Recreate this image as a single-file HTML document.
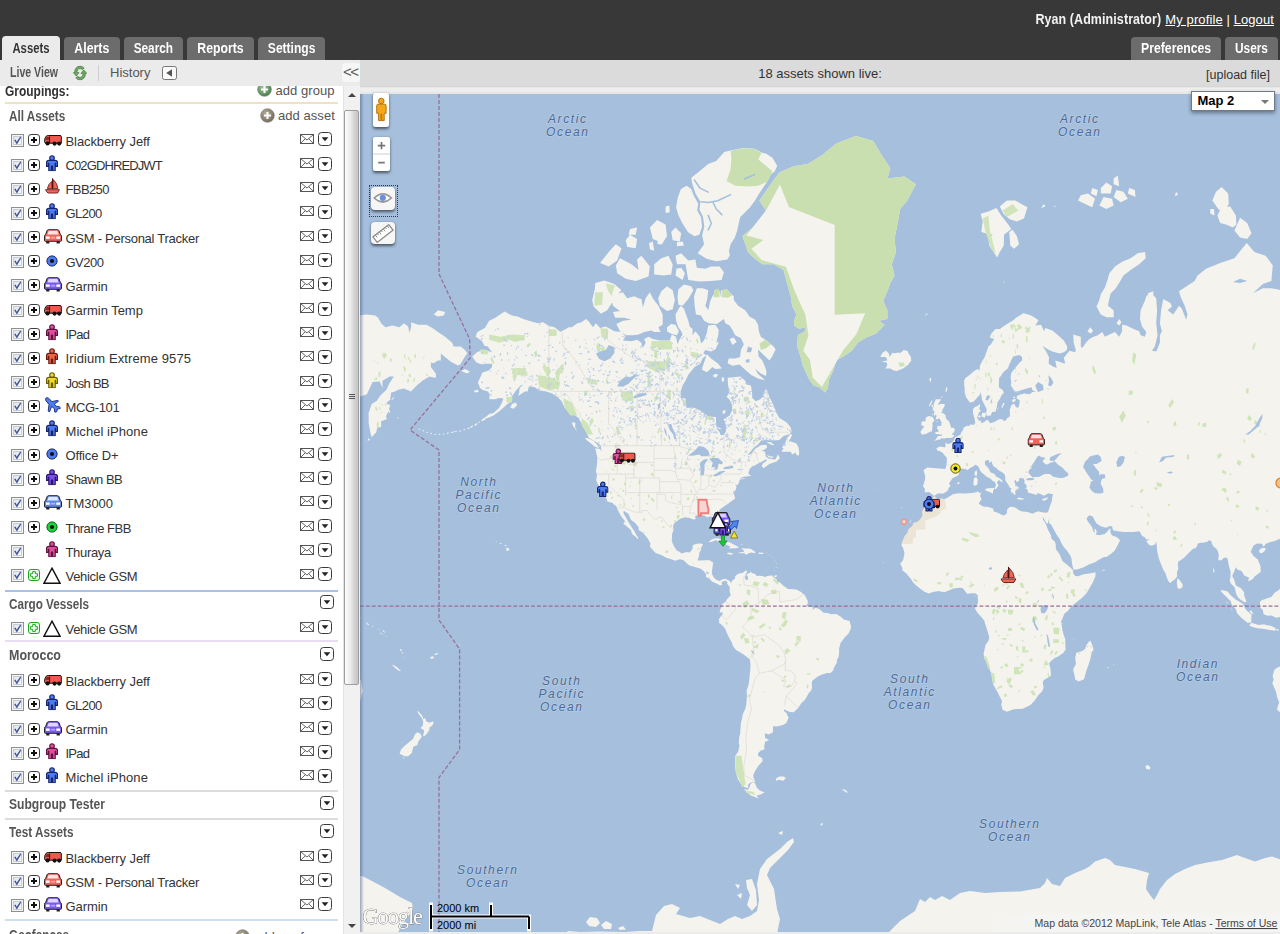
<!DOCTYPE html>
<html lang="en"><head><meta charset="utf-8"><title>Assets - Live View</title>
<style>
*{box-sizing:border-box}
html,body{margin:0;padding:0}
body{width:1280px;height:934px;overflow:hidden;background:#fff;font-family:"Liberation Sans",Arial,sans-serif;font-size:13px;color:#333;position:relative}
a{color:inherit}
#hdr{position:absolute;left:0;top:0;width:1280px;height:60px;background:#383838}
#user{position:absolute;right:6px;top:11px;color:#fff;font-size:13px;white-space:nowrap;letter-spacing:.1px}
#user b{font-weight:bold;color:#f2f2f2;font-size:14px;display:inline-block;transform-origin:100% 50%;transform:scaleX(0.891)}
#user a{color:#fff;text-decoration:underline}
.tab span{display:inline-block;transform-origin:50% 50%}
.tab{position:absolute;top:37px;height:23px;border-radius:4px 4px 0 0;background:#6c6c6c;color:#fff;font-weight:bold;font-size:14px;text-align:center;line-height:22px}
.tab.on{background:#ebebeb;color:#333;top:36px;height:24px;line-height:24px}
#subL{position:absolute;left:0;top:60px;width:360px;height:26px;background:#ebebeb}
#subR{position:absolute;left:360px;top:60px;width:920px;height:26px;background:#dbdbdb}
#strip{position:absolute;left:360px;top:86px;width:920px;height:8px;background:linear-gradient(#cfcfcf,#efefef 25%,#eeeeee 60%,#e4e4e4)}
#subL .lv{position:absolute;left:10px;top:4px;font-weight:bold;color:#555;font-size:14px;display:inline-block;transform-origin:0 50%;transform:scaleX(0.755)}
#subL .hs{position:absolute;left:110px;top:5px;color:#555;font-size:13px}
#subL .sep{position:absolute;left:98px;top:5px;width:1px;height:16px;background:#cfcfcf}
#coll{position:absolute;left:341.5px;top:62.5px;width:18.5px;height:19.5px;background:#f6f6f6;border-radius:3px;color:#555;font-size:15px;line-height:18px;text-align:center;letter-spacing:-1.5px;text-indent:-1px}
#cnt{position:absolute;left:0;top:6px;width:920px;text-align:center;font-size:13px;color:#333}
#upl{position:absolute;right:10px;top:7.5px;font-size:12.5px;color:#333}
#panel{position:absolute;left:0;top:86px;width:343px;height:848px;background:#fff;overflow:hidden}
#sb{position:absolute;left:343px;top:86px;width:17px;height:848px;background:#f1f1f1;border-left:1px solid #e3e3e3}
#sb .thumb{position:absolute;left:0;top:24px;width:15px;height:575px;border:1px solid #9d9d9d;border-radius:2px;background:linear-gradient(90deg,#fdfdfd,#ececec 40%,#d4d4d4 70%,#c4c4c4)}
#sb .grip{position:absolute;left:5px;top:308px;width:6px;height:1px;background:#555;box-shadow:0 2px 0 #555,0 4px 0 #555}
#sb .up,#sb .dn{position:absolute;left:4px;width:0;height:0;border-left:4px solid transparent;border-right:4px solid transparent}
#sb .up{top:7px;border-bottom:4px solid #444}
#sb .dn{top:838px;border-top:4px solid #444}
.row{position:absolute;left:0;width:344px;height:24px}
.row .t{position:absolute;left:65px;top:4.5px;white-space:nowrap;font-size:13px;color:#333}
.row svg{position:absolute;overflow:visible}
.grp{position:absolute;left:9px;font-weight:bold;color:#555;font-size:13px;white-space:nowrap;display:inline-block;transform-origin:0 50%}
.hr{position:absolute;left:5px;width:333px;height:2px}
.add{position:absolute;color:#555;font-size:13px;white-space:nowrap;letter-spacing:.05px}
#map{position:absolute;left:360px;top:94px;width:920px;height:840px;background:#a5bfdd;overflow:hidden}
#map>svg{position:absolute;left:0;top:0}
#ctl{position:absolute;left:360px;top:94px;width:920px;height:0}
.ctl{position:absolute;background:#fff;box-shadow:0 1.5px 3px rgba(0,0,0,.55);overflow:hidden}
.ocean{font-family:"Liberation Sans",Arial,sans-serif;font-style:italic;font-size:12px;fill:#4e6a95;letter-spacing:1.6px;text-anchor:middle;paint-order:stroke;stroke:rgba(215,228,243,.35);stroke-width:1.6px}
</style></head><body>
<div id="hdr">
 <div id="user"><b>Ryan (Administrator)</b> <a>My profile</a> | <a>Logout</a></div>
 <div class="tab on" style="left:2px;width:58px"><span style="transform:scaleX(0.806)">Assets</span></div>
 <div class="tab" style="left:64px;width:56px"><span style="transform:scaleX(0.882)">Alerts</span></div>
 <div class="tab" style="left:124px;width:59px"><span style="transform:scaleX(0.841)">Search</span></div>
 <div class="tab" style="left:187px;width:67px"><span style="transform:scaleX(0.874)">Reports</span></div>
 <div class="tab" style="left:258px;width:67px"><span style="transform:scaleX(0.860)">Settings</span></div>
 <div class="tab" style="left:1131px;width:90px"><span style="transform:scaleX(0.873)">Preferences</span></div>
 <div class="tab" style="left:1225px;width:53px"><span style="transform:scaleX(0.848)">Users</span></div>
</div>
<div id="subL"><span class="lv">Live View</span><span class="sep"></span><span class="hs">History</span>
 <svg style="position:absolute;left:73px;top:5px" width="14" height="16" viewBox="0 0 14 16"><path d="M7 1.2A5.3 5.3 0 0 0 1.8 7.6L0.3 7.6 3.2 11 6 7.6 4.3 7.6A2.9 2.9 0 0 1 7 3.6 2.9 2.9 0 0 1 9.3 4.7L11.2 3.2A5.3 5.3 0 0 0 7 1.2ZM10.8 5 8 8.4 9.7 8.4A2.9 2.9 0 0 1 7 12.4 2.9 2.9 0 0 1 4.7 11.3L2.8 12.8A5.3 5.3 0 0 0 7 14.8 5.3 5.3 0 0 0 12.2 8.4L13.7 8.4Z" fill="#6fa565" stroke="#3f7a3a" stroke-width=".7"/></svg>
 <svg style="position:absolute;left:162px;top:6px" width="15" height="14" viewBox="0 0 15 14"><rect x=".5" y=".5" width="14" height="13" rx="2" fill="#fafafa" stroke="#777"/><path d="M10 3.3V10.7L4.2 7Z" fill="#555"/></svg>
</div>
<div id="coll">&lt;&lt;</div>
<div id="subR"><div id="cnt">18 assets shown live:</div><div id="upl">[upload file]</div></div>
<div id="strip"></div>
<svg width="0" height="0" style="position:absolute"><defs>
<linearGradient id="cbg" x1="0" y1="0" x2="1" y2="1"><stop offset="0" stop-color="#dfe3ea"/><stop offset="1" stop-color="#fbfbfc"/></linearGradient>
<radialGradient id="gG" cx=".4" cy=".35" r=".7"><stop offset="0" stop-color="#9cc79a"/><stop offset="1" stop-color="#4a7a4c"/></radialGradient>
<radialGradient id="gB" cx=".4" cy=".35" r=".7"><stop offset="0" stop-color="#b5ae9a"/><stop offset="1" stop-color="#6f685a"/></radialGradient>
<symbol id="i-cb" viewBox="0 0 13 13"><rect x=".5" y=".5" width="12" height="12" fill="#f4f4f4" stroke="#8e8f8f"/><rect x="2.5" y="2.5" width="8" height="8" fill="url(#cbg)" stroke="#c9cdd4"/><path d="M3.2 6.3 4.6 5.6 5.7 7.7 9.3 2.6 10.3 3.2 5.9 10.4Z" fill="#3f57a0"/></symbol>
<symbol id="i-plus" viewBox="0 0 12 12"><rect x=".5" y=".5" width="11" height="11" rx="2.6" fill="#fff" stroke="#3c3c3c"/><path d="M3 5h2V3h2v2h2v2H7v2H5V7H3Z" fill="#111"/></symbol>
<symbol id="i-gplus" viewBox="0 0 12 12"><rect x=".5" y=".5" width="11" height="11" rx="2.4" fill="#e6ffe6" stroke="#19a519"/><path d="M4.7 2.6h2.6v2.1h2.1v2.6H7.3v2.1H4.7V7.3H2.6V4.7h2.1Z" fill="#fff" stroke="#19a519" stroke-width="1"/></symbol>
<symbol id="i-mail" viewBox="0 0 14 10"><rect x=".5" y=".5" width="13" height="9" fill="#fff" stroke="#555"/><path d="M.8 .8 7 6 13.2 .8M.8 9.2 5.2 4.8M13.2 9.2 8.8 4.8" fill="none" stroke="#555" stroke-width=".9"/></symbol>
<symbol id="i-dd" viewBox="0 0 14 14"><rect x=".5" y=".5" width="13" height="13" rx="3" fill="#fff" stroke="#3a3a3a"/><path d="M3.6 5.3H10.4L7 9.3Z" fill="#222"/></symbol>
<symbol id="i-truck" viewBox="0 0 18 11"><path d="M2.2 1.2Q.6 2.6 .5 6.5L1.2 8.2H17.3V1.6Q17.3 .5 16 .5H4.5Q3 .5 2.2 1.2Z" fill="#f0584e" stroke="#111" stroke-width="1"/><path d="M2.5 2.2 5 1.8V5H1.5Q1.6 3.2 2.5 2.2Z" fill="#8a2a22"/><path d="M5.6 1.5V8" stroke="#111" stroke-width=".9"/><circle cx="3.6" cy="8.4" r="2.1" fill="#111"/><circle cx="10.6" cy="8.6" r="2.1" fill="#111"/><circle cx="15.2" cy="8.6" r="2.1" fill="#111"/></symbol>
<symbol id="i-man" viewBox="0 0 12 16"><path d="M2.9 5.2H9.1Q11.5 5.2 11.5 7.5V11.2H9.7V8.2H9.2V15.6H6.6V11H5.4V15.6H2.8V8.2H2.3V11.2H.5V7.5Q.5 5.2 2.9 5.2Z" stroke-width="1.15" stroke-linejoin="round"/><circle cx="6" cy="2.9" r="2.3" stroke-width="1.15"/></symbol>
<symbol id="i-boat" viewBox="0 0 16 17"><path d="M8 .3V12" stroke="#4a120c" stroke-width="1.1"/><path d="M8.7 1.5Q13.5 6 13.8 11.2H8.7Z" fill="#f0645a" stroke="#5a1a12" stroke-width=".8"/><path d="M7.2 3.5V11.2H2.5Q3.2 7 7.2 3.5Z" fill="#f0645a" stroke="#5a1a12" stroke-width=".8"/><path d="M.6 12.4H15.4L13.4 16H3.2Q1.3 14.6 .6 12.4Z" fill="#f0645a" stroke="#5a1a12" stroke-width=".9"/></symbol>
<symbol id="i-car" viewBox="0 0 18 15"><path d="M2.2 11.6H5.4V14.4H2.2ZM12.6 11.6H15.8V14.4H12.6Z" fill="#222"/><path d="M4.6 .7H13.4Q14.6 .7 15 1.8L16.4 5.6Q17.5 6 17.5 7.2V11.4Q17.5 12.3 16.6 12.3H1.4Q.5 12.3 .5 11.4V7.2Q.5 6 1.6 5.6L3 1.8Q3.4 .7 4.6 .7Z" stroke="#222" stroke-width="1"/><path d="M4.7 1.8H13.3L14.7 5.4H3.3Z" class="w"/><rect x="1.9" y="7.5" width="3.8" height="2.3" fill="#fff"/><rect x="12.3" y="7.5" width="3.8" height="2.3" fill="#fff"/><rect x="6.8" y="7.8" width="4.4" height="1.7" fill="#fff" opacity=".45"/></symbol>
<symbol id="i-dot" viewBox="0 0 12 12"><circle cx="6" cy="6" r="5.1" stroke-width="1"/><circle cx="6" cy="6" r="2.1" fill="#111" stroke="none"/></symbol>
<symbol id="i-plane" viewBox="0 0 16 16"><path d="M1.2 .8Q2.6 .3 3.6 1.3L7 4.6 12.2 3.4Q13.3 3.3 13.6 4.2L9.3 7 11.3 9.3 14.3 9.5Q15.4 10.3 15.2 11.6L12.4 12 11.8 14.6Q10.8 15.5 9.7 15L9.3 11.6 6.6 9.4 4.6 14.8Q3.6 15 3.2 14L4 7.4 .9 3.7Q0 2 1.2 .8Z" fill="#4d7cf0" stroke="#1a2a78" stroke-width=".9" stroke-linejoin="round"/></symbol>
<symbol id="i-tri" viewBox="0 0 18 17"><path d="M9 1.2 17 16.2H1Z" fill="#fff" stroke="#111" stroke-width="1.4" stroke-linejoin="miter"/></symbol>
<symbol id="i-addg" viewBox="0 0 16 16"><circle cx="8" cy="8" r="7.3" fill="url(#gG)" stroke="#577f57" stroke-width=".6"/><path d="M4.2 6.9H6.9V4.2H9.1V6.9H11.8V9.1H9.1V11.8H6.9V9.1H4.2Z" fill="#fff"/></symbol>
<symbol id="i-addb" viewBox="0 0 16 16"><circle cx="8" cy="8" r="7.3" fill="url(#gB)" stroke="#7a7466" stroke-width=".6"/><path d="M4.2 6.9H6.9V4.2H9.1V6.9H11.8V9.1H9.1V11.8H6.9V9.1H4.2Z" fill="#fff"/></symbol>
</defs></svg>
<div id="panel">
<span class="grp" style="left:5px;top:-3px;color:#333;font-size:14px;transform:scaleX(0.855)">Groupings:</span>
<svg style="position:absolute;left:257px;top:-4px" width="15" height="15"><use href="#i-addg"/></svg><span class="add" style="left:275.5px;top:-3px">add group</span>
<div class="hr" style="top:16px;background:#ece3c4;height:2px"></div>
<span class="grp" style="top:22px;font-size:14px;transform:scaleX(0.837)">All Assets</span>
<svg style="position:absolute;left:260px;top:22px" width="15" height="15"><use href="#i-addb"/></svg><span class="add" style="left:278px;top:22px">add asset</span>
<div class="row" style="top:43px"><svg x="0" y="0" style="left:11px;top:5px" width="13" height="13"><use href="#i-cb"/></svg><svg x="0" y="0" style="left:28px;top:5px" width="12" height="12"><use href="#i-plus"/></svg><svg x="0" y="0" style="left:44px;top:6px" width="18" height="11"><use href="#i-truck"/></svg><span class="t" style="left:65.5px;letter-spacing:-0.09px">Blackberry Jeff</span><svg x="0" y="0" style="left:300px;top:4.5px" width="14" height="10"><use href="#i-mail"/></svg><svg x="0" y="0" style="left:318px;top:3px" width="14" height="14"><use href="#i-dd"/></svg></div>
<div class="row" style="top:67.5px"><svg x="0" y="0" style="left:11px;top:5px" width="13" height="13"><use href="#i-cb"/></svg><svg x="0" y="0" style="left:28px;top:5px" width="12" height="12"><use href="#i-plus"/></svg><svg x="0" y="0" style="left:46px;top:1px" width="12" height="16.3" fill="#4d7cf0" stroke="#16246e"><use href="#i-man"/></svg><span class="t" style="left:65.5px;letter-spacing:-0.89px">C02GDHREDJWT</span><svg x="0" y="0" style="left:300px;top:4.5px" width="14" height="10"><use href="#i-mail"/></svg><svg x="0" y="0" style="left:318px;top:3px" width="14" height="14"><use href="#i-dd"/></svg></div>
<div class="row" style="top:91.5px"><svg x="0" y="0" style="left:11px;top:5px" width="13" height="13"><use href="#i-cb"/></svg><svg x="0" y="0" style="left:28px;top:5px" width="12" height="12"><use href="#i-plus"/></svg><svg x="0" y="0" style="left:45px;top:0.5px" width="15" height="16"><use href="#i-boat"/></svg><span class="t" style="left:65.5px;letter-spacing:-0.61px">FBB250</span><svg x="0" y="0" style="left:300px;top:4.5px" width="14" height="10"><use href="#i-mail"/></svg><svg x="0" y="0" style="left:318px;top:3px" width="14" height="14"><use href="#i-dd"/></svg></div>
<div class="row" style="top:115.5px"><svg x="0" y="0" style="left:11px;top:5px" width="13" height="13"><use href="#i-cb"/></svg><svg x="0" y="0" style="left:28px;top:5px" width="12" height="12"><use href="#i-plus"/></svg><svg x="0" y="0" style="left:46px;top:1px" width="12" height="16.3" fill="#4d7cf0" stroke="#16246e"><use href="#i-man"/></svg><span class="t" style="left:65.5px;letter-spacing:-0.55px">GL200</span><svg x="0" y="0" style="left:300px;top:4.5px" width="14" height="10"><use href="#i-mail"/></svg><svg x="0" y="0" style="left:318px;top:3px" width="14" height="14"><use href="#i-dd"/></svg></div>
<div class="row" style="top:140px"><svg x="0" y="0" style="left:11px;top:5px" width="13" height="13"><use href="#i-cb"/></svg><svg x="0" y="0" style="left:28px;top:5px" width="12" height="12"><use href="#i-plus"/></svg><svg style="left:43.5px;top:3px" width="18" height="15" viewBox="0 0 18 15"><path d="M2.2 11.6H5.4V14.4H2.2ZM12.6 11.6H15.8V14.4H12.6Z" fill="#222"/><path d="M4.6 .7H13.4Q14.6 .7 15 1.8L16.4 5.6Q17.5 6 17.5 7.2V11.4Q17.5 12.3 16.6 12.3H1.4Q.5 12.3 .5 11.4V7.2Q.5 6 1.6 5.6L3 1.8Q3.4 .7 4.6 .7Z" fill="#f0645a" stroke="#222"/><path d="M4.7 1.8H13.3L14.7 5.4H3.3Z" fill="#fde4e0"/><rect x="1.9" y="7.5" width="3.8" height="2.3" fill="#fff"/><rect x="12.3" y="7.5" width="3.8" height="2.3" fill="#fff"/><rect x="6.8" y="7.8" width="4.4" height="1.7" fill="#fff" opacity=".45"/></svg><span class="t" style="left:65.5px;letter-spacing:-0.27px">GSM - Personal Tracker</span><svg x="0" y="0" style="left:300px;top:4.5px" width="14" height="10"><use href="#i-mail"/></svg><svg x="0" y="0" style="left:318px;top:3px" width="14" height="14"><use href="#i-dd"/></svg></div>
<div class="row" style="top:164px"><svg x="0" y="0" style="left:11px;top:5px" width="13" height="13"><use href="#i-cb"/></svg><svg x="0" y="0" style="left:28px;top:5px" width="12" height="12"><use href="#i-plus"/></svg><svg x="0" y="0" style="left:46px;top:4.5px" width="12" height="12" fill="#4d7cf0" stroke="#16246e"><use href="#i-dot"/></svg><span class="t" style="left:65.5px;letter-spacing:-0.49px">GV200</span><svg x="0" y="0" style="left:300px;top:4.5px" width="14" height="10"><use href="#i-mail"/></svg><svg x="0" y="0" style="left:318px;top:3px" width="14" height="14"><use href="#i-dd"/></svg></div>
<div class="row" style="top:188px"><svg x="0" y="0" style="left:11px;top:5px" width="13" height="13"><use href="#i-cb"/></svg><svg x="0" y="0" style="left:28px;top:5px" width="12" height="12"><use href="#i-plus"/></svg><svg style="left:43.5px;top:3px" width="18" height="15" viewBox="0 0 18 15"><path d="M2.2 11.6H5.4V14.4H2.2ZM12.6 11.6H15.8V14.4H12.6Z" fill="#222"/><path d="M4.6 .7H13.4Q14.6 .7 15 1.8L16.4 5.6Q17.5 6 17.5 7.2V11.4Q17.5 12.3 16.6 12.3H1.4Q.5 12.3 .5 11.4V7.2Q.5 6 1.6 5.6L3 1.8Q3.4 .7 4.6 .7Z" fill="#7a5af0" stroke="#222"/><path d="M4.7 1.8H13.3L14.7 5.4H3.3Z" fill="#e0d6ff"/><rect x="1.9" y="7.5" width="3.8" height="2.3" fill="#fff"/><rect x="12.3" y="7.5" width="3.8" height="2.3" fill="#fff"/><rect x="6.8" y="7.8" width="4.4" height="1.7" fill="#fff" opacity=".45"/></svg><span class="t" style="left:65.5px;letter-spacing:-0.07px">Garmin</span><svg x="0" y="0" style="left:300px;top:4.5px" width="14" height="10"><use href="#i-mail"/></svg><svg x="0" y="0" style="left:318px;top:3px" width="14" height="14"><use href="#i-dd"/></svg></div>
<div class="row" style="top:212.5px"><svg x="0" y="0" style="left:11px;top:5px" width="13" height="13"><use href="#i-cb"/></svg><svg x="0" y="0" style="left:28px;top:5px" width="12" height="12"><use href="#i-plus"/></svg><svg x="0" y="0" style="left:44px;top:6px" width="18" height="11"><use href="#i-truck"/></svg><span class="t" style="left:65.5px;letter-spacing:-0.04px">Garmin Temp</span><svg x="0" y="0" style="left:300px;top:4.5px" width="14" height="10"><use href="#i-mail"/></svg><svg x="0" y="0" style="left:318px;top:3px" width="14" height="14"><use href="#i-dd"/></svg></div>
<div class="row" style="top:236.5px"><svg x="0" y="0" style="left:11px;top:5px" width="13" height="13"><use href="#i-cb"/></svg><svg x="0" y="0" style="left:28px;top:5px" width="12" height="12"><use href="#i-plus"/></svg><svg x="0" y="0" style="left:46px;top:1px" width="12" height="16.3" fill="#e0509a" stroke="#5e1240"><use href="#i-man"/></svg><span class="t" style="left:65.5px;letter-spacing:-0.74px">IPad</span><svg x="0" y="0" style="left:300px;top:4.5px" width="14" height="10"><use href="#i-mail"/></svg><svg x="0" y="0" style="left:318px;top:3px" width="14" height="14"><use href="#i-dd"/></svg></div>
<div class="row" style="top:260.5px"><svg x="0" y="0" style="left:11px;top:5px" width="13" height="13"><use href="#i-cb"/></svg><svg x="0" y="0" style="left:28px;top:5px" width="12" height="12"><use href="#i-plus"/></svg><svg x="0" y="0" style="left:46px;top:1px" width="12" height="16.3" fill="#f0644a" stroke="#6e1c10"><use href="#i-man"/></svg><span class="t" style="left:65.5px;letter-spacing:0.10px">Iridium Extreme 9575</span><svg x="0" y="0" style="left:300px;top:4.5px" width="14" height="10"><use href="#i-mail"/></svg><svg x="0" y="0" style="left:318px;top:3px" width="14" height="14"><use href="#i-dd"/></svg></div>
<div class="row" style="top:285px"><svg x="0" y="0" style="left:11px;top:5px" width="13" height="13"><use href="#i-cb"/></svg><svg x="0" y="0" style="left:28px;top:5px" width="12" height="12"><use href="#i-plus"/></svg><svg x="0" y="0" style="left:46px;top:1px" width="12" height="16.3" fill="#f0dc28" stroke="#6a5c00"><use href="#i-man"/></svg><span class="t" style="left:65.5px;letter-spacing:-0.73px">Josh BB</span><svg x="0" y="0" style="left:300px;top:4.5px" width="14" height="10"><use href="#i-mail"/></svg><svg x="0" y="0" style="left:318px;top:3px" width="14" height="14"><use href="#i-dd"/></svg></div>
<div class="row" style="top:309px"><svg x="0" y="0" style="left:11px;top:5px" width="13" height="13"><use href="#i-cb"/></svg><svg x="0" y="0" style="left:28px;top:5px" width="12" height="12"><use href="#i-plus"/></svg><svg x="0" y="0" style="left:45px;top:2px" width="16" height="16"><use href="#i-plane"/></svg><span class="t" style="left:65.5px;letter-spacing:-0.36px">MCG-101</span><svg x="0" y="0" style="left:300px;top:4.5px" width="14" height="10"><use href="#i-mail"/></svg><svg x="0" y="0" style="left:318px;top:3px" width="14" height="14"><use href="#i-dd"/></svg></div>
<div class="row" style="top:333px"><svg x="0" y="0" style="left:11px;top:5px" width="13" height="13"><use href="#i-cb"/></svg><svg x="0" y="0" style="left:28px;top:5px" width="12" height="12"><use href="#i-plus"/></svg><svg x="0" y="0" style="left:46px;top:1px" width="12" height="16.3" fill="#4d7cf0" stroke="#16246e"><use href="#i-man"/></svg><span class="t" style="left:65.5px;letter-spacing:0.06px">Michel iPhone</span><svg x="0" y="0" style="left:300px;top:4.5px" width="14" height="10"><use href="#i-mail"/></svg><svg x="0" y="0" style="left:318px;top:3px" width="14" height="14"><use href="#i-dd"/></svg></div>
<div class="row" style="top:357.5px"><svg x="0" y="0" style="left:11px;top:5px" width="13" height="13"><use href="#i-cb"/></svg><svg x="0" y="0" style="left:28px;top:5px" width="12" height="12"><use href="#i-plus"/></svg><svg x="0" y="0" style="left:46px;top:4.5px" width="12" height="12" fill="#4d7cf0" stroke="#16246e"><use href="#i-dot"/></svg><span class="t" style="left:65.5px;letter-spacing:-0.16px">Office D+</span><svg x="0" y="0" style="left:300px;top:4.5px" width="14" height="10"><use href="#i-mail"/></svg><svg x="0" y="0" style="left:318px;top:3px" width="14" height="14"><use href="#i-dd"/></svg></div>
<div class="row" style="top:381.5px"><svg x="0" y="0" style="left:11px;top:5px" width="13" height="13"><use href="#i-cb"/></svg><svg x="0" y="0" style="left:28px;top:5px" width="12" height="12"><use href="#i-plus"/></svg><svg x="0" y="0" style="left:46px;top:1px" width="12" height="16.3" fill="#7a50e8" stroke="#2a1470"><use href="#i-man"/></svg><span class="t" style="left:65.5px;letter-spacing:-0.49px">Shawn BB</span><svg x="0" y="0" style="left:300px;top:4.5px" width="14" height="10"><use href="#i-mail"/></svg><svg x="0" y="0" style="left:318px;top:3px" width="14" height="14"><use href="#i-dd"/></svg></div>
<div class="row" style="top:405.5px"><svg x="0" y="0" style="left:11px;top:5px" width="13" height="13"><use href="#i-cb"/></svg><svg x="0" y="0" style="left:28px;top:5px" width="12" height="12"><use href="#i-plus"/></svg><svg style="left:43.5px;top:3px" width="18" height="15" viewBox="0 0 18 15"><path d="M2.2 11.6H5.4V14.4H2.2ZM12.6 11.6H15.8V14.4H12.6Z" fill="#222"/><path d="M4.6 .7H13.4Q14.6 .7 15 1.8L16.4 5.6Q17.5 6 17.5 7.2V11.4Q17.5 12.3 16.6 12.3H1.4Q.5 12.3 .5 11.4V7.2Q.5 6 1.6 5.6L3 1.8Q3.4 .7 4.6 .7Z" fill="#5f86e6" stroke="#222"/><path d="M4.7 1.8H13.3L14.7 5.4H3.3Z" fill="#dbe8ff"/><rect x="1.9" y="7.5" width="3.8" height="2.3" fill="#fff"/><rect x="12.3" y="7.5" width="3.8" height="2.3" fill="#fff"/><rect x="6.8" y="7.8" width="4.4" height="1.7" fill="#fff" opacity=".45"/></svg><span class="t" style="left:65.5px;letter-spacing:-0.03px">TM3000</span><svg x="0" y="0" style="left:300px;top:4.5px" width="14" height="10"><use href="#i-mail"/></svg><svg x="0" y="0" style="left:318px;top:3px" width="14" height="14"><use href="#i-dd"/></svg></div>
<div class="row" style="top:430px"><svg x="0" y="0" style="left:11px;top:5px" width="13" height="13"><use href="#i-cb"/></svg><svg x="0" y="0" style="left:28px;top:5px" width="12" height="12"><use href="#i-plus"/></svg><svg x="0" y="0" style="left:46px;top:4.5px" width="12" height="12" fill="#16d83a" stroke="#0a5a14"><use href="#i-dot"/></svg><span class="t" style="left:65.5px;letter-spacing:-0.46px">Thrane FBB</span><svg x="0" y="0" style="left:300px;top:4.5px" width="14" height="10"><use href="#i-mail"/></svg><svg x="0" y="0" style="left:318px;top:3px" width="14" height="14"><use href="#i-dd"/></svg></div>
<div class="row" style="top:454px"><svg x="0" y="0" style="left:11px;top:5px" width="13" height="13"><use href="#i-cb"/></svg><svg x="0" y="0" style="left:46px;top:1px" width="12" height="16.3" fill="#e0509a" stroke="#5e1240"><use href="#i-man"/></svg><span class="t" style="left:65.5px;letter-spacing:-0.33px">Thuraya</span><svg x="0" y="0" style="left:300px;top:4.5px" width="14" height="10"><use href="#i-mail"/></svg><svg x="0" y="0" style="left:318px;top:3px" width="14" height="14"><use href="#i-dd"/></svg></div>
<div class="row" style="top:478px"><svg x="0" y="0" style="left:11px;top:5px" width="13" height="13"><use href="#i-cb"/></svg><svg x="0" y="0" style="left:28px;top:5px" width="12" height="12"><use href="#i-gplus"/></svg><svg x="0" y="0" style="left:43px;top:2.5px" width="18" height="17"><use href="#i-tri"/></svg><span class="t" style="left:65.5px;letter-spacing:-0.30px">Vehicle GSM</span><svg x="0" y="0" style="left:300px;top:4.5px" width="14" height="10"><use href="#i-mail"/></svg><svg x="0" y="0" style="left:318px;top:3px" width="14" height="14"><use href="#i-dd"/></svg></div>
<div class="hr" style="top:503.5px;background:#a9c0ea;height:2px"></div>
<div class="row" style="top:506.5px"><span class="grp" style="top:3px;font-size:14px;transform:scaleX(0.836)">Cargo Vessels</span><svg x="0" y="0" style="left:319.5px;top:2.5px" width="14" height="14"><use href="#i-dd"/></svg></div>
<div class="row" style="top:531px"><svg x="0" y="0" style="left:11px;top:5px" width="13" height="13"><use href="#i-cb"/></svg><svg x="0" y="0" style="left:28px;top:5px" width="12" height="12"><use href="#i-gplus"/></svg><svg x="0" y="0" style="left:43px;top:2.5px" width="18" height="17"><use href="#i-tri"/></svg><span class="t" style="left:65.5px;letter-spacing:-0.30px">Vehicle GSM</span><svg x="0" y="0" style="left:300px;top:4.5px" width="14" height="10"><use href="#i-mail"/></svg><svg x="0" y="0" style="left:318px;top:3px" width="14" height="14"><use href="#i-dd"/></svg></div>
<div class="hr" style="top:553.8px;background:#e7def6;height:2px"></div>
<div class="row" style="top:558px"><span class="grp" style="top:3px;font-size:14px;transform:scaleX(0.891)">Morocco</span><svg x="0" y="0" style="left:319.5px;top:2.5px" width="14" height="14"><use href="#i-dd"/></svg></div>
<div class="row" style="top:583px"><svg x="0" y="0" style="left:11px;top:5px" width="13" height="13"><use href="#i-cb"/></svg><svg x="0" y="0" style="left:28px;top:5px" width="12" height="12"><use href="#i-plus"/></svg><svg x="0" y="0" style="left:44px;top:6px" width="18" height="11"><use href="#i-truck"/></svg><span class="t" style="left:65.5px;letter-spacing:-0.09px">Blackberry Jeff</span><svg x="0" y="0" style="left:300px;top:4.5px" width="14" height="10"><use href="#i-mail"/></svg><svg x="0" y="0" style="left:318px;top:3px" width="14" height="14"><use href="#i-dd"/></svg></div>
<div class="row" style="top:607px"><svg x="0" y="0" style="left:11px;top:5px" width="13" height="13"><use href="#i-cb"/></svg><svg x="0" y="0" style="left:28px;top:5px" width="12" height="12"><use href="#i-plus"/></svg><svg x="0" y="0" style="left:46px;top:1px" width="12" height="16.3" fill="#4d7cf0" stroke="#16246e"><use href="#i-man"/></svg><span class="t" style="left:65.5px;letter-spacing:-0.55px">GL200</span><svg x="0" y="0" style="left:300px;top:4.5px" width="14" height="10"><use href="#i-mail"/></svg><svg x="0" y="0" style="left:318px;top:3px" width="14" height="14"><use href="#i-dd"/></svg></div>
<div class="row" style="top:631.5px"><svg x="0" y="0" style="left:11px;top:5px" width="13" height="13"><use href="#i-cb"/></svg><svg x="0" y="0" style="left:28px;top:5px" width="12" height="12"><use href="#i-plus"/></svg><svg style="left:43.5px;top:3px" width="18" height="15" viewBox="0 0 18 15"><path d="M2.2 11.6H5.4V14.4H2.2ZM12.6 11.6H15.8V14.4H12.6Z" fill="#222"/><path d="M4.6 .7H13.4Q14.6 .7 15 1.8L16.4 5.6Q17.5 6 17.5 7.2V11.4Q17.5 12.3 16.6 12.3H1.4Q.5 12.3 .5 11.4V7.2Q.5 6 1.6 5.6L3 1.8Q3.4 .7 4.6 .7Z" fill="#7a5af0" stroke="#222"/><path d="M4.7 1.8H13.3L14.7 5.4H3.3Z" fill="#e0d6ff"/><rect x="1.9" y="7.5" width="3.8" height="2.3" fill="#fff"/><rect x="12.3" y="7.5" width="3.8" height="2.3" fill="#fff"/><rect x="6.8" y="7.8" width="4.4" height="1.7" fill="#fff" opacity=".45"/></svg><span class="t" style="left:65.5px;letter-spacing:-0.07px">Garmin</span><svg x="0" y="0" style="left:300px;top:4.5px" width="14" height="10"><use href="#i-mail"/></svg><svg x="0" y="0" style="left:318px;top:3px" width="14" height="14"><use href="#i-dd"/></svg></div>
<div class="row" style="top:655.5px"><svg x="0" y="0" style="left:11px;top:5px" width="13" height="13"><use href="#i-cb"/></svg><svg x="0" y="0" style="left:28px;top:5px" width="12" height="12"><use href="#i-plus"/></svg><svg x="0" y="0" style="left:46px;top:1px" width="12" height="16.3" fill="#e0509a" stroke="#5e1240"><use href="#i-man"/></svg><span class="t" style="left:65.5px;letter-spacing:-0.74px">IPad</span><svg x="0" y="0" style="left:300px;top:4.5px" width="14" height="10"><use href="#i-mail"/></svg><svg x="0" y="0" style="left:318px;top:3px" width="14" height="14"><use href="#i-dd"/></svg></div>
<div class="row" style="top:679.5px"><svg x="0" y="0" style="left:11px;top:5px" width="13" height="13"><use href="#i-cb"/></svg><svg x="0" y="0" style="left:28px;top:5px" width="12" height="12"><use href="#i-plus"/></svg><svg x="0" y="0" style="left:46px;top:1px" width="12" height="16.3" fill="#4d7cf0" stroke="#16246e"><use href="#i-man"/></svg><span class="t" style="left:65.5px;letter-spacing:0.06px">Michel iPhone</span><svg x="0" y="0" style="left:300px;top:4.5px" width="14" height="10"><use href="#i-mail"/></svg><svg x="0" y="0" style="left:318px;top:3px" width="14" height="14"><use href="#i-dd"/></svg></div>
<div class="hr" style="top:704px;background:#dcdcdc;height:2px"></div>
<div class="row" style="top:707px"><span class="grp" style="top:3px;font-size:14px;transform:scaleX(0.865)">Subgroup Tester</span><svg x="0" y="0" style="left:319.5px;top:2.5px" width="14" height="14"><use href="#i-dd"/></svg></div>
<div class="hr" style="top:731.7px;background:#dcdcdc;height:2px"></div>
<div class="row" style="top:735px"><span class="grp" style="top:3px;font-size:14px;transform:scaleX(0.837)">Test Assets</span><svg x="0" y="0" style="left:319.5px;top:2.5px" width="14" height="14"><use href="#i-dd"/></svg></div>
<div class="row" style="top:760px"><svg x="0" y="0" style="left:11px;top:5px" width="13" height="13"><use href="#i-cb"/></svg><svg x="0" y="0" style="left:28px;top:5px" width="12" height="12"><use href="#i-plus"/></svg><svg x="0" y="0" style="left:44px;top:6px" width="18" height="11"><use href="#i-truck"/></svg><span class="t" style="left:65.5px;letter-spacing:-0.09px">Blackberry Jeff</span><svg x="0" y="0" style="left:300px;top:4.5px" width="14" height="10"><use href="#i-mail"/></svg><svg x="0" y="0" style="left:318px;top:3px" width="14" height="14"><use href="#i-dd"/></svg></div>
<div class="row" style="top:784px"><svg x="0" y="0" style="left:11px;top:5px" width="13" height="13"><use href="#i-cb"/></svg><svg x="0" y="0" style="left:28px;top:5px" width="12" height="12"><use href="#i-plus"/></svg><svg style="left:43.5px;top:3px" width="18" height="15" viewBox="0 0 18 15"><path d="M2.2 11.6H5.4V14.4H2.2ZM12.6 11.6H15.8V14.4H12.6Z" fill="#222"/><path d="M4.6 .7H13.4Q14.6 .7 15 1.8L16.4 5.6Q17.5 6 17.5 7.2V11.4Q17.5 12.3 16.6 12.3H1.4Q.5 12.3 .5 11.4V7.2Q.5 6 1.6 5.6L3 1.8Q3.4 .7 4.6 .7Z" fill="#f0645a" stroke="#222"/><path d="M4.7 1.8H13.3L14.7 5.4H3.3Z" fill="#fde4e0"/><rect x="1.9" y="7.5" width="3.8" height="2.3" fill="#fff"/><rect x="12.3" y="7.5" width="3.8" height="2.3" fill="#fff"/><rect x="6.8" y="7.8" width="4.4" height="1.7" fill="#fff" opacity=".45"/></svg><span class="t" style="left:65.5px;letter-spacing:-0.27px">GSM - Personal Tracker</span><svg x="0" y="0" style="left:300px;top:4.5px" width="14" height="10"><use href="#i-mail"/></svg><svg x="0" y="0" style="left:318px;top:3px" width="14" height="14"><use href="#i-dd"/></svg></div>
<div class="row" style="top:808px"><svg x="0" y="0" style="left:11px;top:5px" width="13" height="13"><use href="#i-cb"/></svg><svg x="0" y="0" style="left:28px;top:5px" width="12" height="12"><use href="#i-plus"/></svg><svg style="left:43.5px;top:3px" width="18" height="15" viewBox="0 0 18 15"><path d="M2.2 11.6H5.4V14.4H2.2ZM12.6 11.6H15.8V14.4H12.6Z" fill="#222"/><path d="M4.6 .7H13.4Q14.6 .7 15 1.8L16.4 5.6Q17.5 6 17.5 7.2V11.4Q17.5 12.3 16.6 12.3H1.4Q.5 12.3 .5 11.4V7.2Q.5 6 1.6 5.6L3 1.8Q3.4 .7 4.6 .7Z" fill="#7a5af0" stroke="#222"/><path d="M4.7 1.8H13.3L14.7 5.4H3.3Z" fill="#e0d6ff"/><rect x="1.9" y="7.5" width="3.8" height="2.3" fill="#fff"/><rect x="12.3" y="7.5" width="3.8" height="2.3" fill="#fff"/><rect x="6.8" y="7.8" width="4.4" height="1.7" fill="#fff" opacity=".45"/></svg><span class="t" style="left:65.5px;letter-spacing:-0.07px">Garmin</span><svg x="0" y="0" style="left:300px;top:4.5px" width="14" height="10"><use href="#i-mail"/></svg><svg x="0" y="0" style="left:318px;top:3px" width="14" height="14"><use href="#i-dd"/></svg></div>
<div class="hr" style="top:833px;background:#cfdff0;height:2px"></div>
<span class="grp" style="top:841px;font-size:14px;transform:scaleX(0.838)">Geofences</span>
<svg style="position:absolute;left:235px;top:843px" width="15" height="15"><use href="#i-addb"/></svg><span class="add" style="left:253px;top:843px">add geofence</span>
</div>
<div id="sb"><div class="up"></div><div class="thumb"></div><div class="grip"></div><div class="dn"></div></div><div id="map"><svg width="920" height="840" viewBox="360 94 920 840">
<path d="M472.1,356.4 477,352.2 484.1,349.4 489.5,351.5 492,352.2 487.8,346.5 484.4,345.8 482.1,341.3 475.5,336.4 477.3,332.1 484.9,328.1 489.2,320.7 494.9,318.1 504.6,311.6 512,315.5 517.6,316.4 523.3,319 529,320.7 537.6,323.2 543.2,322.3 548.9,326.1 554.6,327.3 560.3,331.7 564.6,329.7 568.8,327.3 571.7,327.3 577.4,323.2 581.6,322.3 585.9,319 588.8,321.5 593,327.3 595.9,323.2 600.1,328.1 605.8,326.5 614.4,331.3 621.5,332.1 625.7,336.8 622.9,340.6 631.4,341.3 637.1,339.8 641.4,342.8 642.8,347.9 645.6,342.8 644.2,339.1 648.5,336.8 652.8,339.1 659.9,340.6 665.6,340.6 669.8,340.6 671.8,334.4 676.1,336.8 677.5,344.3 679.8,339.1 682.6,334.4 681.2,331.3 678.4,327.3 676.1,320.7 675.5,314.6 678.4,309.3 680.6,305.7 684,308.4 686,314.6 688.3,320.7 689.7,326.5 692.6,328.9 692.6,335.2 695.4,331.3 699.7,336.8 701.1,343.6 704,340.6 706.8,332.9 708.2,325.6 715.3,324.8 718.7,329.7 718.2,335.2 716.8,340.6 718.7,342.8 715.3,349.4 711.1,351.5 705.4,350.1 703.4,353.6 706.8,355 702.5,358.5 700.3,363.8 694.6,367.1 692,370.3 688.3,374.7 685.5,380.8 682.6,385.6 680.6,391.4 680.6,398.1 685.5,398.6 686.3,407.7 694,407.7 699.7,410.3 708.2,416.4 715.9,416.9 716.2,425.2 716.8,428 719.6,432.2 721,435.5 723.9,434.5 725.9,431.3 725.9,425.2 724.7,421.3 723.3,419.4 729.6,415.4 732.1,410.3 732.1,405.1 729.6,399.7 726.7,397 729.6,391.4 728.1,385.6 727.6,377.8 733.8,377.2 740.4,376.6 745.2,380.8 746.6,384.4 750.9,385.6 752,391.4 752.3,398.1 755.7,401.3 759.4,399.7 762.8,397 765.1,389.7 766.8,389.7 769.4,397 772.2,402.4 774.5,407.7 776.5,412.9 779.3,417.9 783.6,420.4 787,422.8 790.7,427.6 791.6,430.9 789.3,434.5 783.6,435.9 779.3,440 773.6,440.4 768,440 761.1,440.4 758,444.4 753.7,447.8 750.9,451.2 747.5,455 750.9,454.2 755.2,448.7 760.8,445.2 766.5,444.8 767.1,447.8 763.7,450 761.4,450 765.1,452.1 765.7,456.2 768,458.3 770.8,459.1 775.1,459.5 776.5,457.5 777.9,454.2 779.9,458.3 776.5,461.6 769.4,464 763.7,468.3 761.7,466.3 762.8,463.6 766.5,461.1 766.5,459.1 762.3,461.6 759.4,462.8 755.2,465.2 750.9,467.5 748.9,471.4 748.3,473 749.5,474.9 750.9,474.9 750.9,475.7 749.2,476 746.6,476.4 742.6,477 739.8,479.1 745.2,477.9 743.8,479.1 739.8,479.6 739.5,480.2 738.9,483.1 737,485.5 735.2,483.5 736.4,486.4 736.1,489 734.1,492.2 733,490.4 733,492.6 733.8,492.9 735.2,498.6 732.4,500.6 728.4,503.4 725.3,505.4 722.4,507.5 719.6,509.8 718.5,514.2 718.7,517.1 720.7,521.7 722.2,526.8 722,530.3 721.3,531.9 719.3,532.2 717.3,529.1 716.2,526.5 714.8,523.9 714.5,520.1 711.9,516.8 710.2,516.3 707.4,517.5 704,515.2 699.7,515.5 696.8,515.2 695.1,516 695.7,519.1 693.4,519.4 689.7,518.1 685.5,517.3 680.6,518.4 677.5,520.7 674.1,523.3 673,526.8 673.7,529.5 672.1,534.1 671.8,540.9 673.5,545.5 676.6,550.3 679.8,552.1 681.5,553.5 686.6,552.1 689.7,552.4 692,549.7 692.6,547.9 692.9,544.9 696.8,543.8 701.1,543.4 703.1,544.3 701.4,547.3 700.5,550.9 699.4,552.4 699.1,555.4 698,559.3 697.1,560.2 699.7,560.5 705.4,560.2 709.6,560.3 713.3,562.8 712.5,567.2 711.9,571.6 712.2,574.5 713.9,577.4 716.2,579.7 719.6,580.9 722.7,579.3 725.3,578.7 728.4,580.3 730,581.3 728.4,585.5 727,583.2 727.6,582 725,580.4 723,581.4 721.3,582.6 722.4,584.6 719.9,585.5 717.6,584 714.2,582.6 711.9,581.4 709.1,578.3 708.2,577.4 707.9,578.6 705.7,576.3 706.2,574.5 704,571.6 701.1,569 698.3,568.1 694,566.7 689.7,565.5 687.5,564 683.2,559.9 679.8,559.3 675.5,560.8 671.2,559.3 665.8,557.4 661.3,555.1 655.6,553 653.3,550.6 649.9,546.7 650.5,543.4 647.4,538.1 642.8,532.5 638.8,530.3 638.5,527.1 635.4,523.3 630.9,519.7 628.3,513.8 623.7,510.8 623.5,513.2 625.7,517.1 629.1,523 632,527.8 634.3,530.9 636.3,535 638.5,538.1 637.3,539.1 636.3,537.2 632,534.1 630.9,530 627.2,526.8 623.2,523.6 625.2,521.4 620.6,515.5 618.1,510.5 616.9,508.2 616.3,506.1 613.2,503.9 612.9,503.1 610.7,502.4 607,501.2 606.7,498.9 603.3,494 601.6,490.1 600.1,487.9 597.9,484.3 596.2,480.2 597,475.3 595.9,471 597,464.4 597.3,457.5 595.3,448.3 600.1,449.1 601.6,452.1 600.7,445.7 599.6,444.4 595,441.3 588.8,437.7 586.5,432.2 584.5,427.6 580.2,421.3 578.8,417.9 575.1,415.4 573.1,410.3 569.4,407.7 564.6,407.7 561.7,401.3 557.5,397 552.3,393.6 546.1,391.4 539,390.2 534.7,387.3 529,386.2 527.6,391.4 524.8,391.4 518.2,395.9 519.1,393.1 519.6,387.9 523.3,384.4 520.5,385.6 516.2,390.2 513.4,394.2 511.4,397 512,400.8 506.3,405.1 500.6,410.3 493.5,415.4 487.8,417.9 481.2,419.9 486.4,416.4 489.2,413.9 493.5,412.9 499.2,407.7 502,402.4 503.4,398.6 499.2,398.1 494.9,399.2 489.2,399.2 489.8,394.2 487.8,391.4 482.1,389.7 480.1,387.9 477.8,382.6 480.7,376.6 482.1,372.8 489.2,370.3 492,367.1 492,363.8 487.8,363.8 482.1,364.2 479.5,363.8 476.4,362.5ZM599,448.3 594.4,446.5 591.6,443.9 585.9,439.5 585.1,437.7 588.8,438.6 593.6,440.8 597.3,444.8ZM577.4,432.2 573.1,426.1 571.7,422.3 575.4,422.8 575.1,427.6ZM510.2,407.7 512,404 515.9,402.4 517.1,405.6 513.4,408.8ZM481,420.4 484.9,418.4 485.8,419.4 481.8,421.3ZM474.4,425.7 477,422.8 477.3,424.2 475.3,426.1ZM469.3,428 472.4,425.2 472.7,426.1 469.9,428.5ZM452.2,432.2 455.1,430.9 455.1,431.8 452.5,432.7ZM446.5,433.6 448.2,432.5 448.2,433.6ZM461.3,370.9 465,369 469.9,371.6 467.3,373.5 462.2,371.6ZM473.8,390.8 477.8,389.7 478.7,391.9 475,392.5ZM781.3,451.7 783.6,448.3 781.9,447.6 785,443.5 786.7,438.2 790.7,434.1 792.1,434.5 791,437.7 788.7,441.3 791.8,441.7 796.4,443.5 798.4,447 799.2,451.7 799,455.6 796.4,455 795.8,452.5 792.1,454.6 790.7,451.7 786.4,451.7ZM766.5,441.7 770.8,442.2 774.5,445 772.2,445.2 768,443ZM766.8,455 770.8,456.4 773.6,456.4 772.2,458.3 768.5,457.1ZM765.1,380.2 758,378.4 751.2,375 745.2,369.7 739.5,364.5 732.4,365.8 727.6,363.2 728.7,358.5 735.2,358.5 740.1,357.1 740.9,350.1 743.8,344.3 740.9,338.3 735.2,335.2 732.4,329.7 729.6,325.6 725.3,323.2 723.9,319 716.8,324 708.8,323.2 704,320.7 701.1,315.5 696,314.6 694.6,305.7 694,296.2 696.8,288.3 702.5,288.3 708.2,290.3 707.4,298.2 705.4,305.7 708.2,310.2 710.2,301 712.5,296.2 716.8,289.3 719.6,291.3 720.2,297.2 721,290.3 726.7,289.3 733.8,296.2 733.8,300.1 738.1,305.7 745.2,310.2 749.5,316.4 755.2,319.8 758,324.8 758.9,331.3 760.8,336.8 766.5,340.6 773.6,346.5 775.6,349.4 772.2,356.4 769.4,360.5 763.7,355 758,349.4 758.6,356.4 762.3,360.5 765.1,367.1 766.5,371.6 766,376 760.8,373.5 755.2,368.7 758,374.1 762.3,377.8ZM706.8,354.3 711.1,358.5 718.2,363.8 721.9,368.4 715.3,369 712.5,367.1 706.8,372.2 702,369.7 702.5,367.1 704.8,360.5ZM712.5,376 715.3,373.8 718.2,374.7 715.9,377.8ZM721.6,377.8 723.9,377.2 724.2,381.4 721.9,381.4ZM729.6,339.1 733.8,337.5 736.7,342.1 732.4,345ZM626,335.2 620,331.3 616.3,324 622.9,320.7 631.4,319.8 624.3,317.7 615.2,317.7 612.9,312 620,311.1 612.9,305.7 611.5,300.1 615.8,294.3 622.9,292.3 627.2,298.2 634.3,296.2 638.5,298.2 641.4,299.1 642.8,307.5 645.6,298.2 649.9,292.3 652.8,298.2 658.4,305.7 662.7,314.6 662.7,324.8 658.4,327.3 660.7,332.1 654.2,332.1 651.3,330.5 644.2,332.1 638.5,334.4 632.8,335.2ZM601,313.8 593.6,306.6 592.2,300.1 595,288.3 595.3,283.1 604.4,280.4 614.4,284.1 621.5,290.3 615.8,296.2 610.1,305.7 607.2,310.2ZM617.2,273.3 625.7,278.8 635.7,281 648.5,276.6 649.9,266.5 641.4,255.8 637.1,259.4 638.5,270 631.4,264.2 620,258.2 615.8,265.4ZM600.1,263 608.7,266.5 617.2,260.6 621.5,248.2 615.8,244.2 608.7,252ZM654.2,274.5 664.1,275.6 671.2,274.5 672.7,264.2 668.4,255.8 661.3,258.2 654.2,264.2ZM675.5,275.6 682.6,279.9 684.9,273.3 681.2,267.7 676.4,268.8ZM688.3,279.9 699.7,281.5 711.1,281 721.6,279.9 723.9,272.2 719.6,266.5 711.1,266.5 705.4,268.8 696.8,267.7 695.4,259.4 688.3,260.6 681.2,253.3 675.5,255.8 676.9,264.2 685.5,264.2 686.9,272.2ZM678.4,304.8 682.6,305.7 688.3,299.1 693.4,290.3 691.2,286.2 684,284.6 678.4,289.3 677.5,297.2ZM659.9,305.7 667,311.1 672.7,309.3 674.9,300.1 672.7,290.3 667,286.2 661.3,291.3 658.2,298.2ZM667,331.3 671.2,333.7 676.9,335.2 678.9,331.3 675.5,324.8 671.2,324 667,327.3ZM652.8,238.9 662.7,242.9 667,236.1 665.6,224.6 657,220 649.9,227.5ZM672.7,240.2 679.8,241.6 681.2,233.3 675.5,227.5 671.2,231.9ZM627.2,246.9 635.7,248.2 637.1,238.9 630,234.7 625.7,240.2ZM628.6,234.7 635.7,234.7 637.1,227.5 630,229ZM649.9,249.5 654.2,250.7 652.8,241.6 649.1,242.9ZM721,290.3 726.7,289.3 732.4,295.2 728.1,297.7 721,297.2ZM676.9,246.2 684,245.6 682.6,241.6 676.9,242.2ZM657.6,244.2 662.7,244.2 661.3,239.5 657.6,240.2ZM665.6,213 669.8,212.2 669.3,205.6 665.6,206.5ZM716.8,427.1 721,428.3 720.2,429.5 717.3,428ZM722.4,411.3 725.3,409.8 725.3,412.9 723,413.9ZM825.1,392.5 819.2,387.3 813.5,385.6 809.2,379.6 806.4,373.5 802.9,365.8 800.7,357.1 797.3,346.5 797.8,335.2 804.9,331.3 804.9,327.3 799.2,328.9 794.1,325.6 794.1,320.7 796.4,314.6 792.1,305.7 790.7,296.2 786.4,281 783.6,270 773.6,264.2 762.3,264.2 754.3,258.2 748,252 742.4,236.1 756.6,224.6 765.1,215.4 765.1,209 759.4,200.6 768,188 779.3,172.4 793.6,166.2 807.8,164.1 822,155.2 836.2,143.5 856.1,136 873.2,141 881.7,155.2 890.3,168.3 887.4,178.5 904.5,176.5 915.9,184.3 907.3,200.6 900.2,209 897.4,224.6 894.5,238.9 896,252 891.7,264.2 894.5,275.6 890.3,283.1 887.4,291.3 883.2,301 887.4,310.2 887.4,319 878.9,320.7 884.6,324.8 876,333.7 866.1,337.5 857.6,342.8 851.9,350.8 843.3,356.4 836.2,360.5 833.4,370.3 829.1,379.6 827.7,388.5ZM730,581.3 731.3,583.5 731.7,581.3 732.7,580.3 735,578.6 735.1,576.3 737.1,574.4 738.9,573.6 742.4,573.1 746.1,570.3 747.2,572.2 745.5,574.2 746.3,574.7 748,573.6 750.3,573.1 750.9,571 751.7,573.1 755.4,573.9 756.6,576 759.7,575.7 762.3,576 765.1,577.1 767.4,576 770.8,575.4 773.9,575.4 772.2,575.8 773.6,577.4 776.5,578.9 777.1,581.7 779.9,582.3 783.6,586 784.6,586.6 787.9,588.9 793,589.3 796.4,589.5 801.1,591.9 803.2,594 804.4,594.6 807.8,600.9 807.8,603.2 806.4,606 807.8,606.6 812.3,606.9 812.9,608.3 812,610 815.5,607.7 819.2,609.1 824,613.1 826.6,612.8 831.1,614.3 836.2,614.1 840.5,616.5 843.9,619.4 847.6,620.5 849.7,620.8 849.9,622.5 851,626.2 850.7,629 848.5,633.6 844.8,637.2 840.5,643.2 839.1,648.6 839.1,653.3 838.5,657.2 837.1,659.6 836.8,662.9 835.4,665 833.4,668.9 833.4,670.2 830.5,673.1 827.1,673.1 822.9,674.2 818.3,676.2 813.8,679.5 812,681.1 811.8,683.3 812,687.7 811.2,690.6 808.6,693.2 806.9,696.5 804.4,700.5 801.8,702.5 798.1,707.9 793.8,712.2 790.1,712 785.6,710.3 783.9,708.9 783.9,711 787,713.4 787.3,715.5 788.7,717.3 786.4,723 783,725 776.5,726.5 773.1,725.9 773.1,729.6 772.8,732.6 768.5,734.6 764.8,733.3 765.1,737.9 769.1,739.8 767.1,741 765.1,741.7 764.3,745.7 764.3,749.6 760.8,750.4 758,753.3 758,755.8 762.3,758.2 762.6,761.2 758,766.3 757.4,767.6 755.2,770.7 753.2,775.2 753.7,777.9 755.4,781.4 752.3,782.1 748.3,784 748,788.2 743.8,786.8 740.9,783.5 738.1,779.8 736.7,775.2 735.5,770.7 735.2,764.2 735,757.8 735,756.2 738.1,751.7 739.5,745.7 738.7,742.9 739.2,737.1 740.1,734.1 740.4,730 740.9,723 741.8,719.8 742.9,714.1 745.2,708.9 746.2,705.7 746.6,700.5 746.9,695.5 746.6,690.6 748.3,685.8 749.2,680.7 749.6,675.1 750.3,670.2 750.5,664.7 749.9,659.6 746.9,656.9 743.2,654.2 739.5,652.1 736.1,650 733,646.2 731.5,641.8 730.6,640.5 729,637.5 727.6,634.6 726.4,632 725.3,629.1 723,626 720.5,623.7 719,623.1 719.3,620.5 718.7,619.4 721,616 722.4,615.1 722.7,612.5 719.9,612.5 719.6,612.3 720.5,608.8 722.2,606 722.2,603.7 723.4,603.2 725.6,601.7 726,600.9 727.6,598.6 729.6,596.6 730.8,594.9 729.6,591.8 729.8,590 729.6,588.3 729.8,586.9 728.4,585.5ZM754.9,782.8 756.6,787.3 759.4,790.2 764.5,792.4 760.8,794.4 756.6,795.6 758.6,798.6 753.7,796.6 750.9,795.6 746.6,792.1 743.8,789.2 748,789.7 749.5,787.3 750.3,784.4 752.6,782.3ZM775.6,778.8 779.3,776.5 783.6,776.5 785.9,777.9 783.3,780.7 779.3,779.8 776.5,780.7ZM841.6,789.2 845.3,789.7 848.2,792.6 846.2,792.6ZM708.4,542.3 711.1,539.7 713.3,538.7 715.8,538.3 719,538.4 722.4,538.9 725.3,540.6 728.7,542.1 731,543.1 734.7,544.9 739.1,547.2 736.7,548.2 729,548.4 730.4,546.4 727.3,545.2 723.9,542.9 721,541.7 717.3,541.2 716.2,540.1 713.1,541.2 711.1,542.1ZM738.2,552.9 741.2,553.3 744.3,553.3 746.1,554.7 749.5,553 751.2,552.6 754.6,553.3 755.6,552.1 753.2,550.6 751.2,549 748.9,548.5 746.1,548.4 742.9,548.2 741.2,548.5 743.2,549.7 744.1,552.1 740.1,552.3ZM727,553.2 729.6,552.4 733,553.5 733.3,554.2 730.4,554.7 727.3,553.9ZM758.9,553.9 758.9,552.4 763.4,552.7 763.1,553.9ZM773.9,577.3 774.8,575.4 776.8,575 776.5,577.1ZM727,535.6 728.7,532.2 729.3,535ZM725.3,527.8 728.7,526.8 731,528.1 730.4,529.4 728.1,527.5ZM740.4,545 742.4,544 742.1,544.9ZM506.1,548.7 506.7,547.2 509.1,548.7 509.7,549.4 507.3,551.2 506.6,550.6ZM504.3,545.2 506.3,545 506.3,546.1 504.8,546.1ZM499.7,543.2 501.4,542.7 501.4,544.1 500.3,544ZM495.5,541.7 496.9,541.2 496.7,542.1ZM934.1,496.1 932.1,494.3 929,491.9 924.7,492.6 925,489 923,486.3 924.4,481.7 925.3,477.9 924.7,474.1 923.5,470.3 927.2,467.5 933.5,467.9 939.2,468.5 944.9,468.9 945.7,468.3 946.6,464 946.9,459.9 946.6,457.5 943.7,454.2 942.9,452.9 940,451.2 937.5,450.8 936.3,448.3 940,446.5 944.3,447.2 945.4,447.2 945.4,443 946.3,442.6 946.9,444.1 950.3,443.5 953.1,441.5 954.6,438.2 955.3,437 957.1,436.4 959.1,435.2 960.2,435 961.4,432.2 963.1,429.9 963.5,427.8 965.6,426.6 967.1,425.7 969.9,425.7 970.5,424.2 972.8,424.7 974.2,425 974.5,423.3 975.6,423.3 975,421.3 974.5,418.4 973.6,415.4 973,412.9 973,409.3 974.5,407.2 977.3,406.1 980.2,404 979.9,406.7 979.3,409.3 981,410.8 979,412.4 977.9,415.4 977,417.9 978.2,418.9 978.4,420.4 981.3,420.8 980.7,422.8 982.7,422.8 984.4,422.1 985.6,420.6 988.1,419.9 989.3,422.3 990.4,423.3 995.5,421.6 998.4,419.4 1002.1,418.9 1003.2,420.8 1005.8,420.6 1006.9,418.4 1009.7,416.4 1010,414.4 1009.7,410.3 1011.4,405.1 1014.3,403.8 1016,407.2 1018.3,407.7 1019.4,404 1019.7,400.3 1016.8,398.6 1016.8,395.9 1020.4,394.5 1024,393.6 1029.6,394.2 1032.5,391.9 1035.9,391.7 1032.5,390.2 1031.6,387.3 1026.8,388.5 1021.1,390.2 1015.4,392.2 1013.1,389.1 1010.9,385.6 1011.2,382 1010.6,376.6 1011.4,372.8 1015.4,367.7 1019.7,362.5 1022.2,360.5 1022,357.1 1019.7,355 1013.1,356.4 1010.6,361.8 1007.7,368.4 1003.2,372.2 1000.9,376 999.2,377.8 998.9,385.6 998.9,387.3 1002.9,390.2 1003.8,393.1 1001.5,395.3 1000.1,398.6 997.5,402.4 996.6,407.7 995.5,411.8 992.1,412.1 990.7,415.4 987,415.9 986.7,414.9 986.1,412.9 986.7,409.3 984.1,404 981.9,399.7 981.6,396.4 980.4,391.9 979.6,395.3 977.6,397 975,400.3 972.8,401.9 969.9,402.4 966.2,397.5 964.5,391.9 964.8,389.1 964.2,385.6 964.2,380.2 965.6,377.8 967.6,376.6 971.3,373.5 974.2,370.9 977.6,369 979.6,370.6 979.9,365.8 982.1,361.2 984.7,357.1 986.7,351.5 988.4,346.5 991,344.3 994.1,339.1 989.8,337.5 991.2,333.7 995.5,328.9 999.8,328.9 1004,326.1 1008.3,323.2 1012.6,320.7 1016.8,317.2 1023.4,313.3 1028.2,314.6 1031.1,315.5 1035.3,318.1 1038.5,320.2 1035.3,325.6 1041,324.8 1044.2,331.3 1045.3,328.1 1052.4,330.5 1058.1,335.2 1063.8,340.6 1067.2,346.5 1066.9,350.1 1063.8,352.2 1059.5,353.6 1052.4,351.5 1048.1,349.4 1042.4,345.8 1045.3,350.1 1049,357.1 1048.7,363.8 1053.8,367.1 1056.7,367.7 1055.2,360.5 1059.5,361.8 1063.2,363.2 1065.2,363.5 1063.8,357.8 1069.5,350.8 1075.2,352.2 1075.7,350.1 1073.7,342.8 1073.2,334.4 1080.8,336.8 1080.8,346.5 1082.3,347.9 1086.5,342.1 1089.4,339.1 1093.6,336.8 1097.9,335.2 1102.2,332.1 1105,336.8 1109.3,334.4 1115,332.1 1119.2,336.8 1122.1,331.3 1122.1,324.8 1126.4,325.6 1133.5,328.9 1139.2,331.3 1140.6,335.2 1144.8,336.8 1146.3,332.1 1142,326.5 1140,319 1140.6,310.2 1144.8,301 1146.3,296.2 1150.5,292.3 1156.2,298.2 1157.1,310.2 1156.2,323.2 1157.6,335.2 1154.8,346.5 1152,350.8 1156.2,351.5 1159.9,342.8 1159.9,335.2 1161.9,331.3 1159.9,323.2 1161.1,310.2 1163.3,299.1 1170.4,302.9 1171.9,306.6 1167.6,310.2 1173.3,314.6 1179,305.7 1181.8,308.4 1186.1,319.8 1187.5,314.6 1184.7,305.7 1180.4,296.2 1179,291.3 1194.6,281 1197.5,275.6 1206,268.8 1220.2,263 1234.4,258.2 1246.7,242.9 1254.4,252 1265.7,255.8 1272.8,265.4 1271.4,281 1262.9,284.1 1252.9,293.3 1262.9,288.3 1271.4,288.3 1277.1,289.3 1285.6,291.3 1299.9,296.2 1305.6,305.7 1305.6,481.7 1295.6,485.4 1297,492.6 1289.9,499.6 1295.6,511.5 1295.6,523 1289.9,530.9 1285.6,534.4 1281.9,537.8 1274.8,540.9 1271.4,541.8 1265.7,543.7 1263.7,547 1262,543.7 1257.2,543.4 1253.5,545.5 1250.7,551.8 1253.5,556 1257.8,559.6 1260.6,566.4 1260.6,571.9 1254.6,576.4 1252.9,578.9 1248.1,581.4 1249,577.4 1244.4,575.7 1241.6,571 1237.3,569.6 1235.9,567.2 1234.2,571.6 1232.2,576 1234.2,579.7 1235.9,585.5 1239.6,587.5 1241,588.3 1244.1,592.3 1244.1,595.2 1245.5,598.9 1246.4,602 1244.4,602.3 1240.7,599.7 1238.1,597.5 1236.2,594 1235.3,590.6 1234.7,587.5 1233.3,586 1230.7,583.2 1229.6,580.3 1230.5,577.4 1230.5,571.6 1228.8,565.8 1227.6,558.4 1225.6,557.5 1223.6,558.1 1221.1,560.5 1218.2,559.9 1218.8,555.4 1217.9,551.5 1216.2,548.5 1214.2,547.3 1212.5,544.9 1211.1,540.9 1208.8,540.3 1207.4,541.8 1203.2,542.7 1200.3,542.7 1197.5,543.7 1197.2,545.8 1195.8,547.9 1193.2,548.8 1191.5,550.3 1186.9,554.8 1184.1,557.8 1181,559.9 1178.4,561.4 1177.8,564.3 1178.4,568.4 1177,571.9 1177.1,576.5 1174.7,579.4 1172.4,580.9 1170.6,582.9 1168.7,581.7 1166.7,577.4 1165.6,573.6 1162.9,569 1160.8,563.4 1159.9,561.4 1158.5,556.9 1157.1,550.9 1156.8,546.4 1156.5,544.3 1156.2,541.2 1155.1,544.3 1152,545.8 1149.1,544.9 1146.3,541.2 1149.7,539.1 1146.3,539.4 1144.8,537.2 1142,536 1140.6,533.1 1139.2,531.3 1133.5,531.9 1127.2,532 1123.5,531.9 1117.8,531.3 1113,530.3 1112.1,526.5 1110.1,525.9 1105.9,527.8 1100.8,526.2 1096.5,523.6 1094.5,520.1 1092.8,516.5 1089.4,515.2 1088,516.5 1086.5,518.4 1088,521.7 1090.8,525.2 1092.5,528.1 1093.1,530.9 1094.5,533.1 1094.5,529.1 1095.6,528.9 1096.8,531.6 1095.9,534.4 1099.3,535.2 1104.7,534.1 1107.3,531.6 1109.6,528.7 1110.4,528.3 1110.4,532.5 1112.1,535.6 1116.7,536.9 1120.1,540.3 1117,546.4 1114.4,550.9 1110.7,553.9 1106.4,556.9 1103.9,556.9 1098.5,559.9 1095.1,562.2 1089.4,564.3 1083.7,567.2 1078,569.3 1073.7,569.7 1072.9,567.8 1072,563.4 1071.5,558.7 1070.3,555.4 1067.2,550.9 1063.8,547 1061.5,543.4 1059.5,538.7 1056.7,534.7 1053.8,529.4 1051,524.6 1049,523 1049.6,518.1 1047.8,523 1047.4,523.8 1045.6,522 1042.7,516.6 1041.9,512.3 1046.1,512.8 1047.6,512.2 1049,509.5 1049.6,507.1 1051,503.4 1051.8,501.3 1052.1,497.9 1053,494 1051,494 1048.4,493.3 1043.9,495.8 1041,494.2 1037.3,493.1 1036.8,495.1 1032.8,493.8 1030.2,493.3 1027.9,492.6 1027.4,489.3 1024.8,487.9 1027.1,487.4 1025.9,484.3 1024.2,483.5 1024.5,481.7 1024.5,480.5 1024,479.4 1023.7,478.5 1019.4,478.1 1019.1,481.1 1016.6,481.9 1015.3,479.4 1014.3,481.7 1015.4,484.3 1015.1,485.7 1017.1,487.2 1018.4,490.2 1017.1,489.2 1015.4,489.3 1016.6,491.1 1014.9,490.8 1015.7,494.5 1014,494.7 1012.9,492.6 1011.7,493.3 1010.6,490.1 1011.7,488.3 1010,487.9 1008.9,485.7 1006.9,482.8 1005.2,480.2 1005.3,476.8 1004.6,474.5 1002.6,472.4 998.4,470.3 996.6,468.3 993.2,466 991.2,461.1 989.5,463.2 988.7,459.9 985,460.7 985,464.4 988.4,467.9 990.4,472.2 995.5,474.5 995.2,476 998.1,477.5 1001.2,479.4 1002.6,481.3 1002.2,482.4 998.9,480 996.9,482.4 998.6,485.4 997.1,487.5 995.8,489.2 994.5,488.6 995.1,486.8 996.1,485.4 994.9,482 992.7,480.9 990.7,478.7 987,477 984.7,475.1 981.6,472.6 979.9,470.3 979.3,468.3 977.9,466 975.3,464.8 972.8,466.7 970.8,467.5 967.6,469.9 965.1,469.1 961.9,468.5 960,469.1 958.7,470.7 959.1,473 958.8,474.7 956.3,476.6 952.6,478.1 950,482 949.1,483.7 950.6,486.1 948.6,487.9 948,490.4 944.6,492.7 943.7,493.5 940,493.6 937.5,493.6 934.8,495.6ZM1042.7,516.6 1043,519.7 1045.6,523.6 1048.1,530 1051,535.6 1051.5,538.7 1055,541.8 1055.8,544.9 1055.8,549.1 1059.5,553.9 1062.4,561.1 1066.6,564.3 1070.9,568.1 1073.2,570.2 1072.9,572.8 1075.2,576.1 1078,576.3 1083.7,574.2 1089.4,573.6 1095.6,572.2 1095.4,576.3 1093.1,581.7 1089.9,587.5 1086.5,593.2 1080.8,598.9 1078.9,600.3 1073.7,604.6 1070.9,607.1 1068,610.8 1064.3,613.7 1062.9,617.5 1060.9,621.7 1061.8,625.4 1062.4,630.3 1063.8,635.2 1065.2,638.9 1065.5,647.7 1065.8,649.2 1063.5,652.7 1058.1,656.6 1055,657.8 1051,661.1 1049.1,663.6 1050.4,668.6 1051,674.8 1050.7,676 1043.9,680.1 1042.7,682.5 1043.6,687.4 1042.2,691.3 1038.2,695.2 1035.3,699.8 1031.1,704.5 1029.4,705.5 1022.8,708.8 1016.8,708.9 1012.9,709.6 1006.9,711.7 1003.6,710.3 1002.5,710.1 1002.3,708.6 1001.2,704.5 1002.1,701.2 999.2,695.5 996.9,691 993.2,684.5 991.2,673.3 988.1,665.6 984.1,658.1 983.6,653.6 985.6,644.8 988.1,641.5 989.3,637.5 987.5,631.1 985,623.4 984.1,620.2 983.6,619.7 981.3,617.1 977.6,613.1 975.6,609.7 975,608 976.7,604.9 977.9,603.2 977.9,599.5 977.6,594.9 975.3,593.2 973.6,593.2 969.9,593.5 967.1,593.8 964.2,590 962.5,588 959.7,587.8 956.8,587.9 953.4,588.6 950,590 945,592 941.5,591.8 938.6,590.9 932.9,592 928.7,593.6 924.4,591.8 919.3,588 915.9,585.2 912.5,581.7 911,578.9 907.9,575.4 906.5,573.6 904.5,571.9 902.5,570.5 902.2,567.5 900.2,563.7 903.1,559.9 904.5,553.6 903.6,549.7 903.1,547.9 901.5,545.5 901.9,543.1 904.5,536.6 907.6,532.5 908.8,529.1 912.5,525.9 913.3,523.1 917.3,522 921,518.4 922.7,515.2 922.1,511.5 923.8,508.8 925.8,505.6 928.4,504.4 930.5,503.1 932.9,497.9 933.2,496.8 934.8,496.5 937.2,498.9 938.9,498.9 941.6,498.6 944.3,499.3 948.2,497.2 952.8,494.3 958.7,493.3 964.5,493.5 972,492.9 975,492.6 978.2,491.5 979.3,493.1 981.6,492.4 980.2,494.7 980.3,496.8 981.6,498.9 980.6,500.5 978.7,503.4 981.6,505.8 984.1,506.8 987.5,506.8 990.7,507.8 993,508.5 993.8,511.5 997.2,512.5 1001.2,514.5 1004,515.5 1006.9,513.2 1007,509.5 1009.7,507.1 1012.3,506.8 1015.7,507.7 1018.3,509.8 1021.1,511.2 1027.5,512 1032.5,513.7 1035,512.5 1038.2,511.3 1041.9,512.3ZM1090.2,640.4 1092.2,644.8 1093.6,650 1091.7,652.1 1090.5,658.5 1088.8,664.1 1086.5,670.2 1084,679.2 1078.6,681.4 1075.2,679.5 1074.3,674.3 1073.2,670.2 1073.7,668 1076,664.1 1075.2,658.1 1076.3,652.7 1078.9,652.1 1081.7,651.2 1085.1,648.9 1086.5,645.1 1088.8,641.8ZM933.8,441.1 938.1,439.7 940,439.5 941.5,438.2 944.3,438.6 946.9,437.9 950.7,437.9 952.8,437.3 954,436.1 954,435.1 952,434.8 952.6,433.2 953.7,432.5 955,429.9 953.7,427.8 951.1,427.8 951,427.1 950.3,424.7 949.4,422.3 948.3,420.4 946.6,419.6 946,417.9 945.4,414.9 944.3,413.9 942.9,412.9 940.9,412.9 942.6,411.3 942,410.6 944,407.2 944.9,405.1 944.3,404 940.3,404 938.1,405.1 938.6,403.2 941.2,399.2 935.8,399.2 934.9,401.3 933.5,404.6 934.1,406.1 932.4,409.3 934.4,410.8 933.8,416.4 935.8,414.4 936.6,415.9 935.5,419.4 940,418.4 940.3,420.4 941.5,422.3 941.3,425.2 940.6,425.9 937.2,425.7 937.5,427.1 936.6,428.5 938.3,429.5 938.3,432.2 936.6,431.8 934.9,432.7 935.8,434.1 938.6,434.3 940.9,434.8 942.3,434.1 941.5,435.9 938.1,435.9 937.2,437 935.8,439.5ZM931.9,431.5 932.6,426.1 932.4,422.8 934.4,420.8 934.1,419.4 932.6,416.9 929.2,416.1 926.4,417.1 925.3,419.9 925.8,421.3 921.6,421.6 921.3,425.2 924.4,426.6 923,428 921.8,429.7 920.4,431.8 921,433.4 922.1,434.8 925.8,433.9 927.2,433.2 930.1,431.8ZM885.4,368.4 890.3,368.4 893.1,370.3 896.8,370.9 903.1,368.4 907.9,365.1 911.3,360.5 910.7,356.4 908.5,353.6 907.9,351.2 903.9,350.1 900.2,352.9 897.9,352.6 895.4,353.3 892.3,352.9 889.7,357.1 888.8,353.6 886,350.5 882.3,352.9 880.3,357.1 886,357.1 887.4,360.5 881.7,361.5 886.6,362.5 887.4,365.1ZM997.2,257.6 992.7,250.7 989.3,245.6 988.4,238.2 992.7,234.7 985.6,233.3 981.3,231.9 982.7,221.6 980.7,213.8 988.4,211.4 996.4,208.1 1001.2,215.4 1008.3,224.6 1011.2,229 1004,234.7 1003.8,245.6 999.8,252ZM999.8,206.5 1006.9,200.6 1015.4,200.6 1027.4,207.3 1024,218.5 1016.8,221.6 1009.7,219.3 1003.5,213.8ZM1010.3,245.6 1014,248.8 1019.1,244.2 1016.8,236.1 1012.6,229.7 1009.2,231.9 1009.7,237.5ZM1041,208.1 1045.3,206.5 1043.9,204ZM1078,200.6 1085.1,204 1092.2,207.3 1095.1,198.8 1088,193.5 1080.8,195.3ZM1099.3,205.6 1106.4,209 1113.6,205.6 1112.1,198.8 1103.6,197.1ZM1113.6,197.1 1120.7,202.3 1127.8,198.8 1123.5,191.7 1116.4,189.9ZM1100.8,193.5 1110.7,193.5 1112.1,186.2 1106.4,182.4 1100.8,188ZM1113.6,184.3 1119.2,186.2 1117.8,175.5 1113.6,178.5ZM1127.8,193.5 1135.5,197.1 1134.9,189.9 1129.2,188ZM1090.8,193.5 1096.5,196.2 1097.9,189.9 1092.2,188ZM1053.8,207.3 1055.8,206.5 1054.7,205.6ZM1113.8,317.2 1106.4,317.2 1100.8,314.6 1096.5,306.6 1099.3,300.1 1100.8,294.3 1105,287.2 1107.9,278.8 1109.3,273.3 1115,266.5 1122.1,261.8 1130.6,258.2 1137.7,253.3 1145.1,252 1145.7,258.2 1139.2,264.2 1130.6,270 1123.5,275.6 1119.2,283.1 1115,289.3 1110.7,293.3 1109.3,299.1 1107.9,305.7 1113.6,310.2ZM1116.4,323.2 1119.2,319 1121.5,322.3 1119.2,325.6ZM1087.4,331.3 1090.2,327.3 1093.1,330.5 1090.8,333.7ZM1147.7,293.3 1153.4,291.3 1153.4,296.2 1149.1,295.7ZM1218.8,209.8 1212.3,200.6 1216,191.7 1221.6,187.1 1228.2,193.5 1228.8,204 1224.5,210.6ZM1217.4,215.4 1221.6,207.3 1230.2,206.5 1235.9,215.4 1236.4,224.6 1233,227.5 1225.9,224.6 1220.2,223.1ZM1234.4,230.4 1240.1,217.7 1247.2,223.1 1251.5,233.3 1247.2,238.9 1240.1,237.5ZM1210.3,213.8 1214.5,215.4 1214,209 1210.3,209ZM1174.7,196.2 1178.1,194.4 1176.1,191.7ZM1177.3,578 1179.8,580.3 1182.7,584.6 1182.4,587.5 1179.3,589 1177.6,588 1176.8,583.2ZM1221.1,590 1227.3,591.2 1230.7,595.2 1235.9,599.7 1238.7,601.2 1243,604 1245.3,608.8 1247.2,611.1 1251.5,614.5 1251.2,622.5 1247.5,622.8 1241,617.4 1237.3,613.4 1235.6,608.8 1231.9,605.1 1230.7,601.2 1226.5,596.9 1223.1,593.8 1220.8,590.9ZM1249.2,625.4 1251.5,622.8 1258.6,625.1 1264.3,624.2 1265.7,625.1 1270.6,625.7 1275.4,628 1275.7,630.8 1270,630 1262.9,628.8 1257.2,628.3 1252.6,627.1ZM1260,601.7 1261.8,600.3 1266.6,598.6 1271.4,596.9 1274.3,592.9 1278.5,590.3 1282.2,586.3 1284.8,587.8 1288.5,591.2 1285.6,594 1285.1,598.9 1287.9,603.2 1284.2,606 1281.4,611.7 1280,617.1 1276,617.7 1271.4,615.4 1267.7,615.7 1263.5,614.3 1262.9,610.3 1260.3,607.4 1260,604.6ZM1259.2,550 1261.8,547.9 1265.4,547.9 1265.7,549.1 1264.3,551.5 1261.8,553.3 1259.2,552.4ZM1275.7,629.1 1279.1,629.4 1277.7,631.1ZM1249.2,611.1 1251.5,610.6 1253.5,614.5 1250.9,613.1ZM1226.2,602 1228.2,604.3 1227,601.7ZM1230.5,608.8 1232.5,611.1 1231.3,608.8ZM1213.7,567.2 1214.5,571.6 1213.7,573.1 1213.1,570.2ZM985.3,489 987.8,488.3 994.4,487.9 993,491.5 993,493.8 990.7,492.6 985.6,490.4ZM973.3,485 973.9,478.3 976.2,477 977.9,479.8 977.3,484.6 975.6,485.7ZM974.5,474.5 974.7,471.8 976.7,470.3 977.2,473.7 976.2,476.4ZM1016.8,498.6 1018.8,497.5 1023.4,498.4 1024.8,498.9 1021.1,499.8 1017.1,498.9ZM1041.9,499.6 1043.9,498.4 1048.4,497.2 1046.7,499.6 1043.9,501ZM956.7,483.3 958.8,481.9 959.8,482.8 958.7,484.3ZM1015.4,485.7 1016.8,485.7 1020,488.6 1018.6,488.3ZM981.3,416.4 982.1,413.1 985.8,412.4 985.8,415.4 984.4,418.1 983.3,417.1ZM977.9,416.4 979.3,414.9 980.7,416.4 980.2,417.6 978.4,417.4ZM1001.5,407.2 1003.2,403 1004.6,403 1003.5,406.1 1002.1,408ZM996.6,411.8 998.6,405.9 998.1,408.8ZM1012,400.8 1013.1,399.2 1016.3,399.2 1015.4,400.8 1013.1,402.4ZM1012.9,397.5 1014.3,396.4 1015.4,397.8 1014,398.3ZM929,379 931.2,377.5 930.9,382.6ZM945.4,391.7 946.3,387.3 947.4,387.3 946.9,391.4ZM940.6,397.3 941.8,396.1 942.6,397.5ZM929.8,403.5 932.4,399.7 932.1,402.4 929.2,406.7 929,405.1ZM931.2,405.6 932.6,404.6 933.5,407.2 932.1,407.2ZM932.1,410.8 933.8,410.3 933.2,411.6ZM931.5,414.4 932.9,413.4 933.5,413.6 932.6,414.9ZM936.3,422.3 937.5,420.8 937.5,422.3ZM1101.9,570.2 1104.5,569.6 1105,570.2 1102.5,570.7ZM901.9,522.3 903.9,521.2 903.1,523ZM905.1,523 906.2,522.5 906.1,523.8ZM909.3,522.7 910.6,520.7 911.7,519.1 910.5,522.3ZM900.9,507.1 902.5,507 901.9,507.7ZM876.6,489.7 878.3,489.5 877.8,490.1ZM882.3,562.5 883.4,562 883.2,563.1ZM1107,667.1 1108.7,667.1 1108.2,668.3ZM1113,664.7 1114.4,664.4 1113.8,665.6ZM1072.9,638.9 1073.7,638.6 1073.4,640.1ZM1061.5,622.5 1062.1,622.8 1062.4,624.2 1061.8,624ZM974.2,596 975.3,595.5 974.7,596.9ZM1145.4,766.3 1147.7,765 1150.5,767.2 1149.7,769.4 1146.3,769ZM924.4,316 927.2,313.3 927.5,314.6ZM1003.5,282.6 1004.9,281 1004.6,282.6ZM324.2,301 341.3,302.9 354.1,311.1 358.4,315.5 366.9,314.6 375.4,315.5 378.3,318.1 381.1,323.2 385.4,327.3 392.5,325.6 399.6,327.3 403.9,323.2 408.1,326.5 409.6,332.9 411.3,326.5 411,322.3 418.1,324.8 426.6,324.8 432.3,328.1 438,332.1 445.1,336.8 452.2,342.8 453.6,346.5 460.8,346.5 465,350.1 467.3,353.3 465,356.4 460.2,364.5 457.9,365.5 450.8,361.8 445.1,357.1 440.8,353.6 440.8,360.5 438,360.5 433.7,363.2 430.9,362.5 430.9,367.1 436,374.1 435.7,378.1 429.5,376.6 422.4,380.8 416.7,385.6 411,391.4 403.9,388.5 398.2,389.7 393.9,391.9 391.1,392.5 390.2,399.7 386.8,402.4 386.8,404 390.2,405.1 389.1,409.3 390.5,412.9 388.2,411.8 385.9,416.4 387.1,419.1 381.1,421.3 381.1,427.1 377.3,427.6 376.3,432.2 371.7,437.3 370.3,432.2 368.6,422.8 368.6,412.9 371.7,404 376.8,400.8 380.5,395.3 386.5,389.7 389.1,383.8 393.9,376.6 389.6,376.6 382.5,380.8 382.5,387.9 379.7,381.4 372.6,382 366.9,394.2 358.4,397 354.9,393.9 347,395.3 332.8,395.3 324.2,407.7ZM433.7,314.6 438,310.2 445.1,312 443.7,315.5 438,316.4ZM391.1,399.7 393.9,396.4 393.3,399.2ZM397.3,416.4 399,417.9 398.2,418.4ZM368.3,438.2 370.3,440 367.5,440.8ZM417.2,710.5 419.5,712.4 422.4,715.9 423.2,719.1 425.2,718 426.3,721.6 429.5,722.7 432.3,721.6 433.9,721.9 432.3,725.6 429.5,727.4 429.2,730.3 426.6,734.1 424.3,736.3 422.9,735.2 424.1,732.2 423.8,730 420.4,728.1 422.6,725.9 423.2,722.3 422.4,719.1 418.1,713.1ZM417.2,732.2 420.4,733.7 421.8,736.7 418.1,741.7 417.5,744.9 413.3,746.8 411.8,752.9 408.1,756.2 404.7,756.2 399.6,753.7 401,749.6 404.7,745.7 409.6,741.7 413,739 415.2,734.1ZM402.4,757.4 404.4,757.4 403.9,758.7ZM392.5,664.4 396.8,667.1 401,671.1 399.3,671.1 395.3,668.3 392.5,665.3ZM399.9,649.2 401.6,649.2 401.6,651.2 400.2,650.6ZM401.6,652.1 403.3,652.7 402.7,653.9ZM404.4,656.9 405.6,657.2 404.7,657.8ZM430.3,656.9 432.9,656.3 434.3,658.1 431.7,659 430.3,658.1ZM434,654.2 438,652.7 437.4,654.5 434.9,655.1ZM379.7,632.6 383.4,634.3 382.2,634.3 380,633.4ZM382.8,629.7 384,630.8 385.1,633.1 383.1,631.4ZM376.8,627.7 380.5,630 378.8,629.4ZM371.2,625.1 374,626.8 373.1,627.1ZM384.8,635.2 387.7,636.9 386.2,636.6ZM365.8,621.7 368.3,623.7 369.4,625.4 367.5,624.8ZM354.9,613.4 359.8,616.8 361.5,619.4 360.1,618 356.9,615.1ZM348.1,622 352.7,621.7 356.9,618 359.2,618.2 358.4,621.1 354.1,623.7 349.8,623.7ZM458.5,644.8 460.5,645.1 459,645.6ZM1274.6,669.6 1278.5,667.1 1281.9,665.9 1288.5,664.1 1297.6,658.1 1308.4,646.2 1319.8,641.8 1336.8,640.4 1339.7,650.6 1351.1,656.6 1355.3,636.9 1363.3,649.2 1366.1,660.8 1373.8,665.6 1378.9,674.8 1384.9,680.4 1385.8,685.8 1386.9,691 1385.5,695.5 1383.8,702.2 1380.1,708.6 1376.7,720.5 1366.1,726.6 1349.6,723 1342.5,714.5 1335.4,711.7 1322.6,700.5 1308.4,703.2 1301.3,708.6 1291.3,708.6 1285.4,712.7 1280,712 1277.1,710 1277.4,707.6 1279.1,702.2 1277.1,697.2 1276,691.6 1274.8,689 1272.3,683.3 1273.7,679.5 1272.6,676.4 1273.7,672ZM250.6,669.6 254.5,667.1 257.9,665.9 264.5,664.1 273.6,658.1 284.4,646.2 295.8,641.8 312.8,640.4 315.7,650.6 327.1,656.6 331.3,636.9 339.3,649.2 342.1,660.8 349.8,665.6 354.9,674.8 360.9,680.4 361.8,685.8 362.9,691 361.5,695.5 359.8,702.2 356.1,708.6 352.7,720.5 342.1,726.6 325.6,723 318.5,714.5 311.4,711.7 298.6,700.5 284.4,703.2 277.3,708.6 267.3,708.6 261.4,712.7 256,712 253.1,710 253.4,707.6 255.1,702.2 253.1,697.2 252,691.6 250.8,689 248.3,683.3 249.7,679.5 248.6,676.4 249.7,672ZM361.2,681.7 362.1,678.7 361.5,680.1ZM358,876 362,876 370,880 385,888 400,897 412,903 413,910 405,920 397,934 358,934ZM565,934 568,931 580,932 600,931.5 625,932 640,931 652,931 656,915 664,906 672,904 680,908 676,914 690,918 700,916 710,920 720,924 728,919 735,916 742,919 750,916 757,911 759,900 757,884 760,869 767,859 780,849 787,842 793,838 794,842 788,850 778,860 770,868 767,875 774,889 777,909 780,919 777,934ZM746,880 752,879 756,890 757,905 752,911 747,905 750,895 747,888ZM735,884 740,885 738,889ZM737,895 742,893 741,899ZM887,934 900,921 915,911 920,899 925,902 930,897 935,900 942,896 950,900 960,893 970,891 985,893 1000,892 1020,891.5 1040,888 1045,883 1047,878 1052,884 1060,886 1065,878 1075,873 1085,869 1090,866 1095,861.5 1105,858 1110,860 1115,865 1135,869 1149,873 1147,880 1146,889 1150,895 1154,900 1157,895 1160,889 1167,880 1175,874 1185,869 1195,865 1210,862 1222,860 1237,855 1245,858 1255,861.5 1265,858 1272,856.5 1282,860 1282,934ZM778,833 783,831 782,835ZM820,824 823,823 822,826ZM586,922 590,917 597,918 600,923 596,927 589,926ZM601,925 606,921 612,924 611,929 604,929ZM618,928 623,926 626,929.5 620,930ZM730.6,150.4 743.5,148 754.7,148.8 761.9,152.8 765.9,153.6 772.4,157.7 777.2,165.7 774.8,171.3 770.8,174.5 766.7,182.5 759.5,193 754.7,201 749.9,207.4 745.1,212.2 740.3,217 738.7,223.5 737,231.5 734.6,237.9 730.6,244.3 729,250.8 729.8,255.6 727.4,259.6 716.2,261.2 706.5,258.8 697.7,253.2 704.1,244.3 702.1,235.5 704.3,226.7 703,216.7 699.5,209.8 700.4,201.8 695.6,193.8 692.1,183.3 691.3,177.7 698.5,172.1 708.2,164.1 716.2,160.9 724.2,152ZM680.9,189 686.5,185.7 691.3,189 693.7,195.4 698.2,203.4 697.2,210.6 700.9,217 702.1,226.7 699.3,234.7 694.5,236.3 688.1,232.3 682.5,223.5 678.5,215.4 676.1,207.4 677.7,197.8Z" fill="#f4f3ee"/>
<path d="M760.8,350.1 766.5,347.9 770.8,344.3 765.1,339.8 759.4,343.6ZM713.9,290.3 719,288.8 719.6,297.2 713.9,297.2ZM721.6,290.3 726.7,289.3 732.4,295.2 728.1,297.7 721.6,297.2ZM825.1,392.5 819.2,387.3 813.5,385.6 809.2,379.6 806.4,373.5 802.9,365.8 800.7,357.1 797.3,346.5 797.8,335.2 804.9,331.3 804.9,327.3 799.2,328.9 794.1,325.6 794.1,320.7 796.4,314.6 792.1,305.7 790.7,296.2 786.4,281 783.6,270 773.6,264.2 762.3,264.2 754.3,258.2 748,252 742.4,236.1 756.6,224.6 765.1,215.4 765.1,209 759.4,200.6 768,188 779.3,172.4 793.6,166.2 807.8,164.1 822,155.2 836.2,143.5 856.1,136 873.2,141 881.7,155.2 890.3,168.3 887.4,178.5 904.5,176.5 915.9,184.3 907.3,200.6 900.2,209 897.4,224.6 894.5,238.9 896,252 891.7,264.2 894.5,275.6 890.3,283.1 887.4,291.3 883.2,301 887.4,310.2 887.4,319 878.9,320.7 884.6,324.8 876,333.7 866.1,337.5 857.6,342.8 851.9,350.8 843.3,356.4 836.2,360.5 833.4,370.3 829.1,379.6 827.7,388.5ZM730.6,150.9 743.5,148.3 754.7,149.1 761.4,153.2 758.2,159.3 772.4,171.3 770.8,174.5 766.7,182.1 757.9,185.7 749.9,186.5 735.4,185.7 726.6,180.9 730.6,168.9 731.4,157.7Z" fill="#c9dfaf"/>
<path d="M779.9,184.4 766.4,209.9 749.9,230.9 746.3,235.4 763.4,239.9 751.4,248.8 761.9,260.2 785.9,266.8 793.4,287.8 798.5,299.8 805.4,314.8 808.4,335.7 803.3,350.7 809.9,359.7 812.8,377.7 821.8,386.7 830.8,371.7 842.8,350.7 856.3,334.2 865.3,313.3 834.7,314.8 834.7,224.9 788.9,206.9Z" fill="#f4f3ee"/>
<path d="M1023.7,671.2 1019.8,668 1018.5,670.2 1022.3,673ZM1048.4,591.2 1051.5,590.6 1051.3,589 1048.4,589.2ZM946.8,576.4 949.3,573.2 947.4,572.3 945.8,574.5ZM1051.8,576.5 1052.8,573.9 1050.6,572.9 1049.8,574.6ZM1063.7,580.7 1059.6,576.2 1058.4,578.1 1062.1,581.6ZM1025.3,628.7 1021.3,626.8 1020.2,629.3 1023.9,631.1ZM1007.1,590.1 1010.4,586.1 1008.6,584.7 1006.2,588ZM962.4,580.2 961.5,577.7 959,578 960.1,580.6ZM999.9,609 1000,607.2 998.4,607.3 998.2,608.6ZM918.1,580.4 913.8,578.4 913,580.1 916.8,582.3ZM1037.4,604 1033.1,602.5 1032.6,605.3 1036.2,606.9ZM1006.9,693.9 1004.1,693.7 1004,696.8 1006.6,696.7ZM1018.6,651 1017.8,646.1 1015.8,646.6 1016.2,650.3ZM1001.8,644.9 1004.4,644.4 1004,643.4 1001.7,643.6ZM983.9,586.2 985.4,585.6 984.8,584.7 983.5,585ZM1069.4,583.1 1068.4,582 1067.4,582.7 1068.5,583.6ZM1045.2,649.5 1046.8,644.7 1044.2,644.6 1043.2,648.4ZM1040.3,636.5 1042.6,635.9 1041.9,634.6 1040.4,635.2ZM1013.3,686.3 1009.5,683.8 1008.5,685.7 1011.4,688.4ZM1001.8,669.1 1003,666.4 1001.4,665.7 1000.4,668.1ZM1037.8,619.6 1035.4,615.5 1033.9,617 1035.5,620.2ZM1074.1,594.7 1074.9,589.8 1071.3,589.2 1070.6,592.8ZM1072.9,596.8 1075.6,595.8 1074.8,593.6 1072.6,594.3ZM1006.7,635.8 1008.7,635.6 1008.7,634.3 1006.7,634.4ZM1024.5,588.1 1022.5,582.5 1019.3,583.5 1021.6,587.8ZM1008.1,601.9 1006.6,600.2 1005.6,601.1 1006.6,602.5ZM1023.8,641.4 1022.6,639.6 1021.8,640.4 1022.9,642.1ZM1034.1,688.8 1037.2,687.3 1036.2,685.7 1033.9,686.2ZM1021.1,603.8 1021.5,598.7 1018.7,598.2 1018.6,602.1ZM1005,613.1 1006.4,610.1 1003.6,608.8 1002.2,611.2ZM1047,665 1047.4,660.9 1045.1,660.5 1044.5,664.5ZM1008.6,666.2 1006.6,663.1 1004.2,664.7 1006.2,667.5ZM1036,694.9 1033.3,690 1030.4,691.7 1032.7,695.4ZM1023.2,666.9 1023.8,664 1020.9,663.3 1020.2,665.7ZM1029,591.7 1026.6,591.1 1026.2,592.9 1028.1,593.5ZM1020.1,625.1 1020.3,623.5 1018.8,623.4 1018.5,624.7ZM998.5,649.6 997.3,648.9 996.8,649.6 997.9,650.5ZM1017.6,657.9 1018.4,656.2 1017.5,655.7 1016.7,657.3ZM1068.3,598.9 1068.2,594.1 1066,593.8 1066.2,598.4ZM996.5,608.2 999.5,607.3 999.3,605.7 996.2,606.4ZM1053.9,624.9 1053.2,622.2 1051.6,622.4 1051.9,625.2ZM996.7,615.4 996.7,613.9 996.1,613.8 996,615.1ZM1024,653 1028.7,651.8 1028,650 1024.6,650.8ZM1049.5,676.4 1048.4,672.8 1047.3,673.7 1048.2,677.2ZM1002.1,586.4 1004.8,585.5 1004.4,584.5 1002.1,585.1ZM954.8,580.2 959.5,579.8 959.1,577.4 955.1,577.8ZM1048.3,578.7 1050.2,576.8 1048.9,574.7 1047.1,576.7ZM999.7,635.1 998.1,635.1 998,636.2 999.6,636.2ZM1051.2,597.1 1052.9,596.2 1052.1,595.1 1050.9,595.7ZM1056,655 1057.9,651.8 1056.4,650.8 1054.3,654.1ZM953,587.2 952.7,582.9 949.1,583.6 949.6,587.4ZM999.4,613.2 998.6,609.5 995.8,610.3 996.6,613.3ZM1007,638.2 1001.7,638.1 1002.8,639.7 1006.3,639.8ZM1044.2,590.1 1042.8,587.2 1040.7,588.8 1041.8,591ZM1007.8,631 1012.2,630.8 1011.9,628.1 1008.2,628.1ZM1051.4,655.1 1053.3,651 1051.5,650.3 1050,653.8ZM1018.6,597.5 1015.1,596 1014.8,598.1 1017.1,599.1ZM1045.6,666.8 1043.8,667 1043.7,667.9 1045.2,667.8ZM1056.3,612.4 1053.2,610.9 1052.4,611.9 1055.2,613.5ZM1086.8,589.4 1084.4,589.6 1084.9,590.7 1086.9,590.7ZM1038.2,604.4 1036.7,603.7 1036.4,604.5 1037.4,605.3ZM941.5,582.1 937.6,582.3 936.9,584.3 940.6,584.5ZM1069.4,577.8 1070.5,572.2 1067.8,571.9 1066.4,577ZM1027.5,593 1025,592.5 1025,593.4 1027,593.9ZM963.9,577 961.6,575.2 960.4,577.1 962.3,578.2ZM1020.1,692.1 1019.5,690.1 1018.4,690.6 1018.9,692.4ZM1020.9,575.4 1018.8,574.5 1018.3,575.6 1020.2,576.5ZM969.5,588 974.5,585.3 973.2,583.5 969.3,585.6ZM1035.8,636.8 1034.3,635.9 1033.9,637 1035.4,637.8ZM1007.9,584.7 1006.1,580.5 1004.6,581.4 1005.7,584.7ZM997,689.2 1002.6,687.3 1002.1,685.2 997.7,687.2ZM1009.3,677.7 1006.7,676.8 1006,678.6 1008.1,679.3ZM1048.7,663 1043.8,663.3 1044,665.4 1048,665.2ZM1013,645.7 1010.4,643.5 1009.5,645.1 1011.6,647ZM970.3,583.8 972.1,583.1 971.8,582.1 970.3,582.5ZM994.9,592.1 998.9,588.6 996.9,586.6 993.7,589.1ZM1054.9,586.9 1051.1,586.4 1050.8,588.2 1054.3,588.9ZM1046.9,620.4 1048.2,615.8 1046.3,614.8 1044.8,619.5ZM994.1,614.8 996,609.3 993.1,609 991.8,612.7ZM1054.4,573 1057.3,570.9 1056.3,568.8 1053.5,571.1ZM993.9,620 994.5,617.6 993.2,617.6 992.7,619.8ZM996.5,632.8 996.6,630.2 995.4,629.7 995.1,632.3ZM1030,661.9 1032.9,660.4 1032.1,658 1029.2,659.9ZM1034.9,623.3 1036.1,617 1033,616.7 1031.7,621.8ZM1064.2,643.6 1062.5,641.7 1061.9,642.6 1063.2,644.3ZM782.3,629.7 779.4,626.7 778.5,628.1 780.8,630.7ZM765.1,641.8 763.2,638.5 761.8,639.7 762.8,641.8ZM795.9,646.7 799.7,642.1 798.1,639.9 794.5,644.5ZM771.1,626.9 768.7,626.8 768.9,628.6 770.6,629.1ZM747.3,620.7 754.8,618.4 753,615.5 748.1,616.9ZM764.9,639.7 761,637.6 760.7,639.3 763.7,641.1ZM768.6,584.2 764.4,581.7 762.6,585 766.6,587ZM786.1,626.5 787.1,620.5 784.8,619.8 783.5,624.8ZM741.5,639.7 745.5,635.5 743.8,632.6 740,636.3ZM749.9,595.8 750.5,590.2 746.8,589.3 746.7,594.1ZM785,619.6 786.6,612.1 782.8,612.2 781.6,617.2ZM779.2,582.7 774.6,578.2 773,580.2 777,584.4ZM741.2,584.8 739.5,583.9 738.5,584.8 740.2,586.2ZM759.9,629.2 765.9,624.8 764.1,623.2 759,626.5ZM758.1,582.9 755.8,581.2 754.9,582.4 756.6,583.6ZM754.3,655.2 754.5,651.9 753.2,651.9 753.2,654.7ZM754.2,635 752.5,634.9 752,636.4 753.7,636.6ZM743.4,638.1 745,634.9 743.2,633.2 741.1,636.7ZM785.7,654.4 790.6,651 787.6,647.9 784.5,650.2ZM783.7,627.6 788,621.6 785.9,619.3 780.8,625.5ZM786.9,688.6 791,686 789.7,683.9 786.6,686.1ZM806.8,674.6 810.8,674.5 810.4,673.1 807.1,673.2ZM764.9,692.2 763.7,691.3 763.1,692.3 764.2,692.8ZM785.4,680.9 781.6,679.3 781.3,681 784.1,682.3ZM747.9,698.1 750.5,694.9 749,694 747.2,695.9ZM807.9,688.8 808.6,684.8 806.8,684.8 806.5,687.6ZM784.9,678.6 786.7,676 785.3,675.1 783.6,677ZM818.8,660.4 818.6,657.8 816.3,657.9 816.5,660.1ZM756.9,645.3 755.6,641.2 753.4,642.3 754.2,645.9ZM744.5,608.4 749.6,603.7 747,600.3 742.3,603.6ZM760,582.5 754,581 752.4,585 757.6,586.5ZM779.8,656.1 776.3,655.1 776.1,657 778.7,658.2ZM727.8,624.6 727.6,621.9 725.4,622.2 725.5,624.3ZM759.7,610.9 752.6,607.9 751.4,610.5 756.8,613.2ZM622.7,461 621.1,459.9 620.8,461.3 621.9,462.4ZM648.3,503.9 647,502.5 645.9,503.7 647,504.8ZM629.7,487.4 631.1,485.8 630.4,485.4 629.1,486.6ZM622.1,473.9 621.2,472.9 620.7,473.9 621.4,474.8ZM625.8,483 624.3,482.6 623.6,484.7 625.3,485.2ZM654.9,500.6 652,497.6 650.6,498.7 653,501.8ZM653.9,474.7 652.1,472.5 650.7,474.3 652.1,476.3ZM642.5,457.2 643,455.1 642.5,454.9 642,456.7ZM634.4,463.2 635.7,459.3 634,458.1 632.7,460.9ZM630.9,499.5 632,498.2 631.5,497.6 630.3,498.7ZM650.3,497 648.7,493.8 647.6,495.1 648.6,497.9ZM614.5,467.4 616.8,466.5 616.3,464.5 614.6,465ZM625.1,506.2 624.7,502.5 623.7,503 624.3,506.4ZM606.5,473 606.8,471.2 605.9,471.2 605.8,472.6ZM610.9,458.5 611.3,457.2 610.5,456.7 610.2,457.7ZM612.1,480.5 614.9,480.3 614.8,478.3 612.5,478.5ZM649.5,497.4 648.7,496.7 648.5,497.3 649.1,497.8ZM653.2,465 651,464.1 650.7,465.9 652.6,466.2ZM614.2,469.6 612.2,468.4 612,469.8 613.2,471ZM624.4,491.5 623.6,489.3 622.3,490 623,492.3ZM608.2,461.6 608.7,460.3 608.2,460 607.8,461.1ZM640,456.7 639.1,455.4 638.8,456.3 639.4,457.3ZM606.1,492.1 607.2,491.4 606.9,491 606,491.6ZM613.3,462.2 613.3,460.4 611.9,460.4 611.9,461.9ZM611.6,458.9 612.3,456.1 610.9,455.2 610.1,457.8ZM620.1,495.4 617.3,494.8 617.3,496.3 619.8,496.9ZM634.2,506.7 633.2,504.7 632.1,505.8 632.8,507ZM633.9,471 633.9,469.3 633.1,469.6 633.2,471.1ZM621.7,505.3 619.6,504.2 619.2,505 621.2,506.5ZM637.8,466.6 637.8,463.6 636.5,463.8 636.5,465.9ZM642.1,481.4 642.3,479.9 641.8,479.5 641.5,481.2ZM611.1,499.1 613.4,497.9 612.8,496.4 611,497.5ZM616.9,448.8 616.3,444.6 614.9,444.6 615.3,448.6ZM627.7,446.7 627.5,445.4 626.9,445.3 626.8,446.4ZM637.5,496 639.7,495.3 639.5,494.2 637.4,494.7ZM611.2,494.3 611.6,491.3 610,491.1 609.7,493.4ZM620.4,489.7 621.2,488.5 620.8,487.8 619.9,488.8ZM631.7,481.5 630.9,481 630.5,481.9 631.2,482.4ZM639.4,484.8 640.9,481.3 639.1,479.9 638.2,482.7ZM604.9,492.5 604.6,490 603.7,490.1 603.8,492.7ZM692.4,492.6 691.4,489.4 690.1,490.4 690.8,492.7ZM715.5,480.8 713.4,479.2 712.5,480.6 713.8,482ZM694.6,501.5 693.1,500.3 692.5,501 693.7,502ZM687.4,500.7 689.6,498.9 688.7,496.7 686.7,498.5ZM694.1,483.8 697.3,480.9 696.1,479.7 694.2,481.6ZM682.1,465.9 681.9,461 681,461.6 681,465ZM675.7,458 675.8,454.4 675.1,454.3 675.1,457.6ZM747.9,451.7 745.6,451.2 745.2,452.8 747.1,453.3ZM672.6,498.5 671.5,496.5 670.7,497.3 671.5,498.8ZM680.7,501.2 678.4,500.9 678.4,502.3 680.6,502.7ZM687.5,462.6 685,461.3 684.2,464.4 686.3,465.5ZM697.8,500.5 697.6,495.8 696.4,496.7 696.6,500.2ZM729.2,482.3 730.5,480.7 729.8,479.8 728.7,481ZM741.8,456.4 742.6,455.6 742.3,454.9 741.6,455.5ZM688.9,452.5 689.1,449.3 688.1,449.2 687.8,452ZM721.8,484.9 720.3,484.8 720.3,486.2 721.4,486.2ZM677.4,513.4 679.7,512.3 679.2,510.7 677.4,511.6ZM711.9,459.4 714.2,457.3 712.9,455.5 711.4,456.5ZM676.7,508.7 678,507.4 677.4,506.5 676,507.6ZM715.8,490.2 712.3,489.7 712.7,491.6 715.1,492ZM671.6,497.6 673,495.8 672,494.9 671.1,496.3ZM710.1,477.9 712.4,476.3 711.5,474.3 709.6,476ZM743.8,401.7 748.5,401.2 748.9,397 743.6,396.8ZM601.1,348.5 598.2,342.1 596.1,346.7 598.9,353.6ZM587.9,390.6 584.3,391 584,395 586.9,394.9ZM650.5,387 650.2,373.8 647.5,371.4 647.6,385.2ZM729.9,449.4 731.1,442.8 729.4,442 728.7,447.2ZM748.6,403.9 749.8,402.6 749.2,400.3 748.1,401.7ZM600.6,353.6 605.6,351 604.6,346.8 601.3,347.7ZM764,414.3 761.8,411.4 760.5,415.8 762,417.9ZM705.5,425.1 706.9,418.8 705.4,418.3 704.2,424.6ZM753.2,439.1 751.5,430.8 750,432.8 751.3,438.7ZM746.4,417.7 750.2,413.8 748.7,409.2 745.2,410.8ZM600.3,432.7 599.4,427.4 598,427.6 598.8,433.1ZM637.3,425.6 635.3,423.4 634.3,425.5 636.1,427.7ZM670.4,400.1 671.1,390.5 667.6,389.1 667,397.6ZM657.4,359.1 657.4,346.8 653.9,348.7 654.3,357.6ZM744.3,440 745.6,435.1 743.3,433.7 742.4,438.5ZM590.6,425.6 593.7,421.7 592.4,417.4 589.3,421ZM667.7,370.4 670.5,359.8 667.9,354.8 664.8,364.8ZM630,409.7 633.5,408.1 633.3,405.3 629.8,406.5ZM654.4,402.3 658.1,399.1 657.4,394.6 654.3,397.4ZM736.4,414.4 736.1,408.7 734.1,408.6 734.7,414ZM758.4,440.8 755.5,437.2 754.3,438.8 756.9,442.3ZM621.1,433.9 617.6,426.5 615.6,428.1 618.7,435ZM698.7,342 697.2,337.8 696.1,340.3 697.5,344.1ZM677.6,391.3 677.6,387.8 676.4,387.6 676.2,390.9ZM745.7,438.3 746.4,426.3 743.4,427.5 743.3,437.1ZM680.1,374.7 676.1,371.5 675.4,374.2 679,378.2ZM666.2,440.5 664.6,437.4 663.4,438.6 664.4,441.5ZM685.8,370.4 688.5,367.3 686.5,361.8 684.8,364.8ZM658.4,434 660.5,428.7 659.3,427.4 657,432.2ZM734.7,393.3 734.6,388.8 733.6,389.4 733.6,392.2ZM610.9,391.3 608.8,391.1 609,393.3 610.6,393.3ZM608.7,383.4 607,377.8 605.8,380.5 607,384.3ZM747.7,433 745,423.7 743.1,426.2 745.2,433.1ZM560.7,370.8 563.9,368.7 563.4,363.6 560.4,365.6ZM537.6,355.5 536.4,349.8 534.4,352.8 535,357.8ZM527.5,376.3 527.5,371.7 526.1,372 526,375.4ZM559.1,380.9 560.2,369.6 556.9,369 555.7,379.3ZM494.6,363 491.6,356.5 490.1,358.5 493,364ZM555.8,378.2 561.9,371.9 560.6,366.3 555.8,370.8ZM514.6,382 517.3,375 514.6,371 512.5,376.8ZM546.9,378.7 551.2,371.6 548.4,365.9 545.3,371.1ZM527.4,347.5 530.9,344.6 529.9,342.5 527.3,344.7ZM563,373 562.1,366.4 560.4,368.3 561.1,373.9ZM512,374.4 516.8,372.8 516.2,367.5 512.3,368.7ZM547.8,370 544,362.5 542.7,367.6 545,372.6ZM674.2,521.9 675.9,521.5 675.9,520 674.4,520ZM692.7,564.3 693.7,563.3 693,562.7 692.2,563.6ZM663.2,520.6 660.9,520.4 660.9,521.6 662.8,521.7ZM704.5,562.9 705.6,562.4 705.2,561.5 704.5,561.9ZM671.8,548.6 671.6,547.4 671,547.4 671.1,548.3ZM670.4,527.4 672.4,525.3 671.5,524.5 669.7,526.3ZM666.2,552.9 667.7,552.9 667.8,552 666.4,552.1ZM678.1,519.4 680.1,515.8 677.6,514.5 676.2,516.9ZM668.4,550.5 665.6,550.3 665.3,553 667.5,553.2ZM643.7,533.4 645,532.7 644.8,532.2 643.5,532.8ZM697.5,549.4 699.4,549.1 699.4,548 697.5,548.2ZM662.2,528.1 664.5,527.6 664.5,526.2 662.4,526.3ZM643.6,521.6 645.6,519.6 644.2,518 642.5,519.9ZM658.3,526.3 657.9,524.9 657.3,525.2 657.5,526.3ZM1027.2,471.3 1025.6,471.4 1025.7,472.9 1026.9,472.8ZM947.4,489.3 946.7,489.2 946.6,489.6 947.3,489.9ZM953.4,448.9 951.8,448.2 951.2,450.3 952.6,451.4ZM968.4,465.8 967.3,462.8 965.6,463.3 966.7,466.3ZM951.4,466.1 951.1,464.4 950.2,464.4 950.3,465.8ZM972.3,453.5 973.8,451.6 973.1,450.4 971.6,451.9ZM1053,430.8 1056.1,429.6 1055.4,426.3 1052.4,427.5ZM1016.2,413 1016.3,411.2 1015.5,410.9 1015.3,412.4ZM959.1,446.8 957.3,445.2 957.1,446.1 958.7,447.5ZM988.4,451.8 989.5,450.4 988.9,449.4 988.2,450.7ZM994.7,429.7 994,426.9 993.2,427.8 993.9,430.4ZM960.3,440.3 962.9,438.3 962.3,436 959.8,437.4ZM1007.6,459.1 1008,456.9 1007,455.9 1006.5,458.2ZM1052.1,460.5 1054.3,458.8 1053.8,457.9 1052.1,459ZM1012.3,430.7 1013.1,426.9 1012.1,426.8 1011.3,429.8ZM1056.3,445.3 1057.3,441.7 1056,440.7 1054.8,443.4ZM1011.7,455.7 1010.4,454 1009.8,455.1 1010.8,456.4ZM958.5,456.2 957.1,454.4 956.3,455.5 957.2,457.5ZM976.8,425.5 976.1,425.1 975.7,426 976.5,426.5ZM1044.1,446.1 1044.6,443.2 1043.3,442.8 1042.8,445.8ZM979.5,378.7 980.7,378.5 980.4,377.5 979.6,377.5ZM1027.1,404.2 1027.6,401.5 1026.7,400.5 1026.3,403.3ZM1022.6,407.7 1021.8,407.7 1021.8,408.8 1022.4,409.1ZM1042.9,403.9 1042.6,398.7 1041.7,398.5 1041.9,403.9ZM1031.5,487.4 1032.8,485.8 1031.9,485 1030.8,486.4ZM998,441 999.9,439.5 999,437.8 997.7,438.9ZM991.7,404.4 992.7,402.4 992,401.2 991.2,402.7ZM1055.2,484.9 1057.3,483.9 1056.8,482.4 1055,483.1ZM992.1,430 991.9,427.8 990.6,427.4 990.6,429.6ZM1036.3,483 1036,481.1 1035.4,481.4 1035.6,483ZM1025.8,477.5 1025.6,475.3 1024.9,475.7 1025,477.3ZM1043.8,457.2 1043.2,456.2 1042.6,456.8 1043,457.6ZM1031.2,468.4 1031,466.1 1029.8,466.7 1030.1,468.6ZM990.2,398.5 990.6,395.8 989.7,394.6 989.2,397.6ZM948.1,465.9 948.8,464.2 948.1,463.7 947.5,465.4ZM1035.8,448.4 1035,445.6 1033.7,446.2 1034.4,448.8ZM981.4,428.7 980.9,427.2 980.6,427.9 980.9,428.8ZM1044.9,417.3 1043.4,416 1043,418.5 1044.1,419.4ZM1005.5,462.1 1002.4,461.4 1002.6,463.8 1005,464.2ZM1027.7,370.3 1026.3,369 1026.1,370.3 1027.1,371.6ZM1198.7,426.5 1200.3,423.2 1198.8,421.9 1197.7,424.5ZM1189.2,459.6 1189.2,454.7 1187.1,454.4 1186.8,459.2ZM1202.5,427 1206.1,426.8 1206.3,422.7 1202.3,423.4ZM1162.4,484 1156.7,481.8 1156.6,486.1 1161.3,487.3ZM1269,526.3 1265.9,525.6 1265.9,528.1 1268,528.7ZM1137.1,452.7 1135.3,452.1 1134.9,453.1 1136.5,453.6ZM1141,493.3 1143.8,490.1 1142,488.5 1139.8,491.5ZM1217.9,459.2 1221.8,456 1220.9,452.7 1217.1,455.5ZM1133.6,506.1 1130.8,505.2 1130.2,506.2 1132.8,507.2ZM1232.1,521.1 1231.1,519.5 1230.4,520.5 1231.3,521.5ZM1268.4,511.9 1266.7,509.6 1266.2,510.6 1267.2,512.1ZM1231.6,473.9 1229.4,473.2 1229.2,474.5 1231,475.3ZM1226.4,471.9 1222.4,469.6 1221.8,472.6 1225.3,474.5ZM1259.2,507.7 1255.9,506.3 1255.2,509.3 1258.2,510.7ZM1173.9,534 1176.4,531.9 1175.3,530.2 1173.2,532.2ZM1156.9,531.3 1156.1,529.1 1155.4,529.8 1156.2,531.8ZM1260.6,433.2 1261.2,429.8 1260.2,429.7 1259.5,432.3ZM1236.4,493.7 1239.8,492.7 1239.2,490.5 1236.5,491.6ZM1245.3,442.3 1244.3,438.9 1243.2,439.5 1244,442.7ZM1149.4,516.8 1148.5,513 1147.3,513.4 1148,516.7ZM1173.6,426.6 1176.7,425.3 1175.5,420.7 1173.5,422.9ZM1135.7,476.1 1136,470.1 1133.9,470.3 1133.7,475.2ZM1265.9,435.5 1265.6,433 1264.7,432.8 1264.9,435.5ZM1181.2,547.5 1182.7,544.2 1181.3,543.9 1180,546.1ZM1177,539.6 1175.3,536 1172.6,537.3 1173.7,540.3ZM1239.7,506.5 1236.5,504 1235.4,506.5 1238,508.3ZM1226.8,492 1226,488.1 1223.6,489 1224.5,492.8ZM1237.5,535.4 1238.1,534.3 1237.4,534.1 1237,534.9ZM1255.3,457 1252.2,452.7 1250.7,456 1252.4,458.6ZM1195.5,525.4 1196.1,522.8 1195,522.7 1194.5,524.8ZM1123.3,420.8 1120.4,414.4 1119.2,416.4 1121.6,421.6ZM1229.6,500.4 1227.5,496.6 1226.1,498 1227.5,501.4ZM1222.2,491.3 1225.2,490.2 1224.7,487.5 1221.9,488.4ZM1241.8,461.8 1237.6,459.7 1236.9,463.8 1239.9,466.1ZM1157.5,487.5 1154.3,487.2 1154.5,489.5 1157.1,489.7ZM1147.8,525.5 1149.3,522 1147.8,521.4 1146.4,524.2ZM1168.3,506.2 1170.4,505 1169.5,503.5 1167.7,504.5ZM1142.8,507.1 1141.1,505.9 1140.7,507.6 1142.2,508.8ZM1248.8,388.5 1246.1,388.4 1246,393.6 1248.4,393.2ZM1260.4,424.9 1255.2,419.7 1253.8,423.3 1258.9,427.3ZM1096.2,372.2 1093.5,365.2 1091.8,367.9 1094.4,374.2ZM1134.3,365.1 1136.3,354.6 1133.1,352.2 1132.1,360.6ZM1128.9,395.5 1132.9,394.1 1132.4,390.3 1128.7,391ZM1121.7,423 1125.9,415.4 1123.1,410.2 1119.7,417.5ZM1253.3,350.6 1255.8,344.2 1254.8,342 1252.2,347.9ZM1252.2,418.2 1248.5,414.9 1247.2,419 1250.1,421.2ZM1169.9,408.3 1174,402.3 1172.3,399.1 1168.3,404.9ZM1149.4,421.8 1147.4,420.4 1146.8,422.2 1148.7,423.3ZM415.8,358.5 416.1,354.7 414.6,353.8 414.2,357.1ZM382.4,406.2 382.6,404.1 382.1,404 381.8,405.7ZM392,359.6 390.2,357.8 389.6,360.6 391.2,362.2ZM403.2,375.1 402.4,373.8 402.2,375.1 402.8,376.2ZM423.6,358.9 424.4,356.4 424.1,355.6 423.4,357.8ZM381.2,403.3 380.4,403 380.3,403.7 381,403.9ZM379.6,377.9 380,373.4 378.9,373.5 378.7,376.6ZM374.7,360.3 373.9,360.2 373.9,361.7 374.7,361.8ZM379.6,410.3 380.6,408.9 379.9,406.5 378.9,408.1ZM377.4,379.4 376.4,376.2 375.6,377.4 376.6,380.5ZM427.9,375.3 426.2,373.3 425.9,375 427.2,376.5ZM414,382.7 415,378.7 414.1,377.6 413,380.6ZM411.1,363.2 411.2,359.4 410.2,359.5 410,362.4ZM380.8,374 379,371.6 378.1,374.8 379.9,376.4ZM406.1,359.5 406.4,358 405.8,357.4 405.5,358.8ZM385.9,406.5 386.6,403.9 385.7,402.8 385,404.9ZM406.1,369.6 404.3,365.7 403.2,367.8 405,372.4ZM381,413.9 381.6,412.9 381.3,411.5 380.5,412.4ZM386.7,353.4 383.9,353.1 384,357.2 386.4,357ZM378.5,363.3 377.5,361.2 377.2,362.3 378,364ZM377.8,409.4 376.2,406.1 374.9,407.8 376.1,411.2ZM410.9,374.3 408.2,374.5 408.8,376.8 411,377.2ZM374.2,380.7 376.2,379 376,377.4 374.2,379ZM377.9,427.4 378.9,422.8 377.3,421.5 376.5,426ZM408,383.6 409.3,380.3 408,377.9 407,380.8ZM385.8,354.6 382.8,352.8 382.4,356.8 384.9,359.2ZM404,358 405.5,356.1 405,353.9 403.9,355.3ZM409.6,360.9 409,356.4 408,357.1 408.6,360.6ZM381,371.4 380,370.8 379.9,372 380.8,372.5ZM379.3,425.4 377.9,425.2 377.8,426.5 379,426.6ZM1009.9,339.1 1009.1,337.1 1008.8,338.3 1009.4,339.8ZM1026.9,328.9 1026,325.4 1024.9,328.2 1025.5,331.2ZM988.2,376.7 990.2,375.4 989.3,372 987.8,373.3ZM973.9,392.1 972.2,392.2 971.9,393.5 973.6,393.6ZM1014.8,331.7 1017.7,327.4 1017,324.5 1014.8,328.2ZM990.3,356.3 991.2,356.3 991.1,354.9 990.3,355ZM997.8,363.5 995.8,362.3 996,365.1 997.4,365.4ZM1004.6,340.5 1001.8,340.3 1002,343 1004.7,343.3ZM978.4,378.2 977.8,375.3 976.9,375.8 977.6,378.4ZM975.1,389.6 975.9,384.2 974.7,383.8 974.1,388.3ZM993.9,337.1 993.4,334.9 992.7,335.6 993.1,337.6ZM976,381.2 976.7,379.3 976.2,378.4 975.5,380.2ZM988.2,390.8 987.9,387.7 987.1,388.7 987.3,390.9ZM1013.5,325.1 1010.6,324 1010.6,328.1 1012.9,330.1ZM1018.2,349.5 1018.1,343.9 1016.4,344.7 1016.8,348.3ZM986.7,364.8 986.9,360.5 986.4,360.4 986.1,364ZM1027.7,342.3 1027.5,335.8 1026,336.2 1026.1,342ZM1013.6,339.1 1013.9,334.3 1012.9,334.1 1012.4,338.1ZM1028.3,371.9 1025.3,367.2 1024.8,370.4 1027.3,375ZM1016,353.4 1015.3,349.2 1014.7,350.5 1015,353.7ZM986.2,377.9 986.9,373.2 985.7,371.8 985.2,376ZM1017,331.5 1015.4,327.1 1014.9,328.9 1015.8,332.5ZM1001.5,338.3 1002,334.4 1001,333.2 1000.6,336.5ZM991.9,383.1 991.4,379.1 990,380.2 990.7,383.3ZM1015.1,325.6 1013.9,323.2 1013.3,326 1014.2,327.8ZM992.5,380.1 990.6,375.8 989.9,377.8 991.6,381.4ZM1084.5,651.8 1085.8,651.5 1085.7,651 1084.7,651.2ZM1080.3,653.2 1078.8,652.4 1077.9,653.7 1079.3,654.3ZM1088.6,646.7 1087.7,645.7 1086.7,646.4 1087.4,647.4ZM1089.9,647.3 1091.7,647.2 1091.5,646.3 1090,646.3ZM621.2,391.4 632.8,391.4 633.4,401.3 624,401.3 621.2,397ZM647.1,361.2 665.6,361.2 665.6,370.9 654.2,370.9 647.1,367.1ZM651.3,340.9 671.2,340.9 672.7,349.4 651.3,349.4ZM689.7,351.5 698.3,352.9 699.7,357.8 694,357.8ZM704,415.4 713.9,417.4 715,420.4 706.8,419.4ZM682.6,399.2 686,400.8 686.3,406.1 683.2,405.6ZM600.4,328.1 607.8,328.9 607.8,339.1 601.6,337.5ZM605.8,283.6 614.9,285.2 611.5,296.2 607.8,290.3ZM595,292.3 603,292.3 602.1,304.8 594.4,305.7ZM587.3,377.8 597.3,380.8 597.3,385 588.8,383.2ZM548.9,328.9 556.6,329.7 556.6,336 548.9,336ZM489.2,334.4 500.6,336.8 512,334.4 524.8,335.2 524.8,339.8 514.8,342.1 509.1,339.8 499.2,342.8 489.2,339.8ZM479.8,349.4 487.8,350.1 488.3,354.3 481.2,354.3ZM516.2,367.7 526.2,368.4 526.2,376 516.2,374.7ZM537.6,375.3 548.9,376.6 560.3,382 558.9,388.5 548.9,390.2 539,386.2ZM506.3,397 512.5,397 512,402.4 506.3,401.9ZM563.2,398.1 571.7,402.4 577.4,415.4 570.3,415.4 564.6,407.7ZM581.6,417.9 587.3,422.8 593,434.5 587.3,434.5 581.6,425.2ZM633.7,462 637.7,462 637.7,466 633.7,466ZM620,456.2 625.7,457.5 625.7,464.4 620.6,464.4ZM735.2,755.8 741.5,755.8 743.5,770.7 745.8,784.4 742.4,787.3 736.1,772.9ZM745.2,790.2 753.7,792.1 755.2,795.1 746.6,793.1ZM982.7,218.5 988.4,215.4 989.8,230.4 994.1,246.9 995.5,254.5 991.2,248.2 985.6,231.9ZM1002.6,210.6 1012.6,204 1018.3,210.6 1006.9,216.9ZM1014,326.5 1019.7,324 1022.5,328.1 1016.8,330.5ZM1025.4,328.9 1030.5,326.5 1029.6,332.1 1026.2,332.9ZM898.2,362.5 903.6,362.5 905.1,365.8 899.9,367.1ZM968.5,531.9 977,533.8 979.9,536.3 975.6,537.2 971.3,535ZM962.8,537.5 969.9,540 967.1,542.1 961.4,539.7ZM991,672.6 994.4,673.3 995.2,682.6 993,683.9ZM983.8,656 986.4,656.6 990.4,668.6 988.4,668.9ZM1014,667.1 1021.1,667.1 1021.1,674.2 1014,674.2ZM1006.9,677.3 1012,678.2 1009.7,683.9 1006.9,682.6ZM1053.3,627.7 1059.5,627.7 1058.9,634.6 1053.8,634ZM1022.2,646.2 1025.7,646.8 1024.5,653 1022.2,652.1ZM1053,639.2 1058.9,639.2 1058.7,643 1053.5,643ZM1007.7,609.4 1013.4,610 1012.6,614.5 1008.3,614.5ZM760.8,598.9 768,599.7 769.4,604.6 762.8,605.1ZM770.8,590.3 776.5,589.5 776.5,594 771.4,594ZM743.8,638.1 748.6,638.6 749.5,643.3 745.2,643.3ZM753.7,642.7 758.6,644.2 758,648.6 754,647.7ZM796.4,636 800.7,636 800.7,641.8 796.4,641.8Z" fill="#d0e4ba"/>
<path d="M1032.5,477.2 1039.3,476.8 1044.7,474.1 1049.8,473.9 1053.3,476.8 1059.2,478.1 1062.9,477.9 1068,475.8 1068.3,473.4 1064.6,470.3 1062.9,467.9 1058.1,464.8 1056.1,462.4 1054.1,461.1 1056.7,458.3 1058.9,455.4 1061.8,453.3 1058.1,453.8 1054.7,455.2 1050.4,457.1 1049.6,459.5 1050.7,461.1 1053.5,460.7 1053.5,462.2 1050.7,462.4 1047.3,464.6 1045.3,464.2 1042.4,460.9 1045.6,457.9 1041,457.1 1039.6,455.8 1037.5,456.4 1034.5,461.6 1031.5,465.8 1031.4,468.7 1029.4,469.5 1028.2,472.2 1029.6,474.3ZM1025.9,480 1028.2,478.1 1032.5,477.9 1035,478.9 1031.9,480.2 1028.2,480.2ZM1091.9,491.1 1095.1,493.3 1099.3,493.6 1103.3,493.1 1103.3,489 1100.8,483.9 1100.8,481.7 1102.2,478.7 1105.3,477.9 1105,474.5 1100.8,474.1 1099.6,476 1099,471.8 1095.6,467.7 1093.1,464 1096.5,464 1101.6,461.1 1100.8,457.1 1097.9,454.6 1092.2,455.8 1089.4,456.7 1088,459.1 1085.1,461.6 1083.7,465.2 1083.1,467.1 1085.1,470.3 1087.4,473.9 1089.4,476.8 1091.1,479.4 1093.4,480.2 1090.8,481.7 1090.5,483.9 1089.4,487.5ZM1116.4,462.4 1118.7,457.1 1122.1,455.8 1124.9,457.1 1123.5,462.4 1120.7,466.3 1117.3,467.1ZM1159.1,462.4 1161.9,456.7 1169,455.8 1174.7,455 1173.3,457.1 1166.2,457.5 1162.8,461.1ZM1245.3,434.5 1248.7,434.5 1252.9,430.9 1258.6,426.1 1262.3,417.9 1262.3,413.9 1259.5,417.9 1255.8,425.2 1250.1,431.3ZM1037.9,391.9 1039.6,391.4 1043.6,389.7 1043,385 1038.2,382 1035.3,385.6 1036.8,389.7ZM1048.1,385.6 1051,386.2 1053.5,382.6 1051,377.8 1048.4,375.3 1049,380.8ZM985.6,399.7 987.5,400.5 989.8,397.5 988.7,395 986.7,395.9ZM990.4,403.5 991.5,402.4 992.4,398.6 991,400.3ZM1040.5,608.6 1042.4,605.4 1046.4,605.1 1048.1,607.4 1046.1,611.7 1043.9,613.4 1041,612.8ZM1033.1,615.7 1034.5,618.8 1035.3,623.1 1038.5,629.7 1037,630.6 1033.9,624.5 1032.8,619.7ZM1046.4,633.4 1048.1,636 1049.3,641.8 1050.1,646.8 1048.7,647.1 1047.6,642.7 1047,637.5ZM988.4,568.7 990.4,566.9 992.4,568.1 991,569.9ZM1052.1,593.2 1053.3,594.6 1054.1,598.6 1053,598.6ZM1036.5,602.9 1038.5,600 1039.3,599.7 1037.9,602.6ZM688,455.4 692.6,455.8 699.1,454.4 701.4,456.2 708.2,456.2 709.6,454.6 708.2,450.4 704,447 698.8,446.1 695.4,450 691.7,452.9ZM700.3,475.3 703.7,475.3 704.5,470.3 704.5,464.4 706.8,461.1 708.2,459.1 704,459.5 700.8,462 699.7,464 700.8,468.3ZM709.1,458.7 712.5,457.9 718.2,457.9 723,462.4 721.9,464.4 718.7,463.6 717.6,468.7 715.6,470.3 714.8,467.1 711.4,467.5 712.8,462.8ZM712.8,475.3 715.3,476.4 719.6,474.9 725.6,471 723.9,470.7 719.6,471.6 715.3,474.1ZM723,469.1 728.1,469.1 733.3,467.9 733,465.6 729.6,466.3 724.7,467.1ZM674.4,439.5 676.1,438.6 675.5,434.1 672.7,428.5 671.2,423.8 667.8,424.7 669.8,429.9 673.2,434.5ZM667,436.8 666.1,429.9 664.1,427.6 664.7,432.2ZM670.4,440.4 669.8,436.8 667.5,433.6 669,438.6ZM617.2,386.2 622.9,386.8 628.6,383.8 634.3,377.8 638.5,375.3 635.7,374.1 630,377.2 625.7,376.6 620,380.8ZM599.3,359.1 604.4,361.2 610.1,358.5 614.4,352.9 614.4,347.2 608.7,345 605.8,350.1 600.1,351.5 595.9,353.6ZM633.7,398.6 640,397 647.1,394.8 645.6,393.1 638.5,393.6 634.3,395.9ZM657.6,410.3 659.9,407.7 660.4,403 658.2,404.6ZM746.6,352.2 750.9,352.2 752.3,347.9 748,346.5ZM745.8,362.5 749.5,362.5 749.5,359.1 745.8,359.8ZM746.3,574.8 747.8,576.5 748,579.4 746.1,580 744.9,578 745.5,575.7ZM750.9,650 752.9,650.9 754.3,653.3 752,652.7ZM705.9,571.3 708.2,572.5 708.8,574.2 706.5,573.4ZM1166.7,472.6 1170.4,471.4 1173.3,472.2 1169.9,473.7ZM1233,282 1240.1,278.8 1247.2,281 1240.1,283.1ZM705.4,350.1 703.4,353.6 706.8,355Z" fill="#a5bfdd"/>
<path d="M700.9,201.8 708.2,202.6 717.8,200.7 730.6,194.6M713,202.3 716.2,209 721.8,214.6M754.7,174.5 744.3,179M708.2,215.4 711.4,223.5 708.2,229.9M694.5,180.1 700.1,188.2 708.2,192.2" fill="none" stroke="#a5bfdd" stroke-width="1.5" stroke-linecap="round" stroke-linejoin="round"/>
<path d="M1046.7,380.1l-0.8,0.2M630.1,406.8l-1.8,0.4M737.3,435.3l-0.5,0.1M526.9,345.9l1.7,0.7M693.7,426.2l0.8,0.0M557.8,373.8l0.3,0.1M699.5,438.4l2.6,0.3M662.1,412.2l0.6,0.6M560.5,367.0l-0.3,0.4M615.4,434.4l-0.7,1.7M686.0,443.9l0.3,0.4M763.3,399.8l1.1,1.5M682.4,363.8l-1.2,0.0M726.4,457.3l-0.8,0.0M616.8,445.0l-0.3,0.1M689.1,367.9l-0.2,0.4M764.3,393.5l0.1,0.5M657.5,397.6l-0.4,1.1M588.0,379.1l0.4,0.2M631.5,409.0l0.1,0.3M771.9,402.4l-0.4,1.1M656.4,388.0l0.0,1.2M736.8,443.0l-0.1,0.3M762.5,420.0l0.3,0.7M645.0,369.4l-1.6,2.1M548.4,331.4l-2.3,1.3M692.4,424.5l-1.0,0.6M511.3,369.4l-0.2,0.2M674.4,423.7l-1.2,0.1M673.5,417.8l-1.2,0.3M765.0,436.7l-0.4,0.7M564.8,394.6l-1.8,0.1M614.5,379.9l0.4,1.1M741.8,469.4l1.2,0.2M770.9,432.2l-1.6,2.1M691.0,359.9l-0.4,1.1M708.5,461.4l1.4,1.1M699.4,433.9l-0.9,0.8M776.0,417.8l0.4,2.6M623.4,438.3l0.9,1.5M602.4,429.9l-0.3,0.4M692.7,425.1l0.3,1.8M681.8,407.9l-0.4,0.3M648.2,384.4l0.0,0.8M631.7,390.6l-1.2,0.1M749.6,460.5l-0.3,0.0M584.9,339.4l0.6,0.5M639.1,403.5l0.4,2.6M654.7,421.2l0.2,0.5M634.0,389.7l0.3,0.4M677.4,406.5l0.3,2.6M694.7,444.3l0.2,0.2M735.4,410.7l0.0,0.5M726.8,432.6l0.4,1.1M672.6,406.3l2.6,0.0M675.5,445.7l0.0,0.3M598.5,395.4l-0.4,0.3M745.5,450.8l0.1,0.3M709.4,455.5l0.3,1.2M677.2,419.8l0.3,0.4M564.4,393.7l0.4,1.8M627.3,416.1l-0.1,0.8M764.2,399.3l-0.1,0.3M667.6,417.7l-1.4,1.1M505.3,372.8l0.3,0.7M621.6,394.5l-0.2,0.5M584.1,348.2l0.3,0.1M682.5,459.3l-0.6,0.5M785.4,445.4l-0.7,0.3M645.5,389.3l-2.4,0.9M694.1,413.9l-0.5,0.2M588.8,380.7l-0.7,2.5M733.6,440.5l0.8,0.2M651.3,437.7l0.4,0.3M674.2,395.7l-1.2,2.3M644.0,390.6l-1.6,2.0M749.5,441.7l1.2,0.1M736.1,397.6l-2.3,1.2M657.4,417.3l0.4,0.3M683.4,440.1l-0.4,0.3M660.8,428.8l0.5,0.6M700.4,355.0l0.2,0.8M614.8,433.8l-1.2,0.1M708.8,435.9l-0.2,0.8M646.1,420.0l-0.6,1.7M682.9,428.3l0.9,0.8M608.0,331.5l-0.8,2.5M728.4,434.5l-0.1,0.3M616.3,443.0l-0.4,0.3M697.9,411.8l2.0,1.7M692.7,408.5l-2.6,0.3M758.8,436.9l-0.2,0.2M689.7,426.9l0.3,0.7M580.3,364.9l0.1,0.5M635.3,360.7l-0.1,1.2M763.2,428.1l0.4,0.3M716.1,437.9l-0.3,0.0M749.0,446.4l-0.6,0.5M784.0,445.0l-0.3,0.0M564.3,341.2l0.1,1.2M712.6,418.5l0.6,1.0M698.3,362.6l-0.5,0.6M566.7,376.5l-0.6,0.5M738.9,399.0l-0.7,0.3M615.2,445.6l-0.6,0.5M689.4,431.2l0.3,0.1M678.9,392.7l0.4,0.3M568.2,337.2l-0.1,0.5M748.8,440.7l-0.0,0.3M665.0,400.4l0.1,0.8M681.5,378.2l0.2,1.2M743.7,433.0l-0.8,0.1M747.0,398.7l1.1,1.4M694.7,429.5l-0.2,0.2M589.3,394.0l0.8,1.6M767.4,392.8l-0.9,0.8M549.6,385.2l-0.4,0.4M631.9,410.0l-0.7,0.3M754.7,420.2l0.1,0.8M611.6,389.1l-0.3,0.2M785.0,435.1l-0.1,0.3M705.2,443.3l-0.9,0.8M709.0,430.0l-0.7,2.5M770.2,422.4l-0.1,0.5M669.0,422.6l-0.3,0.4M670.7,384.9l2.6,0.2M747.1,418.1l-0.8,0.9M762.5,429.2l0.0,0.3M695.3,441.2l-0.8,0.2M616.4,409.8l1.1,2.3M564.1,393.0l1.3,1.2M710.0,431.8l1.2,0.2M549.2,385.9l1.5,2.1M732.5,416.2l-2.1,1.5M622.9,406.1l0.1,0.3M746.9,398.8l0.5,0.1M780.7,429.0l-1.7,0.6M602.6,362.2l0.3,1.8M663.9,411.0l-1.6,0.9M690.0,430.2l-0.3,0.4M642.1,390.6l1.7,0.6M700.3,417.9l0.9,1.5M765.5,420.5l-1.7,0.6M741.8,439.4l-0.6,0.5M582.0,399.1l-2.4,1.1M675.9,337.9l-0.0,0.3M649.6,391.2l-0.7,0.3M734.9,447.2l0.7,0.3M660.6,357.0l-0.0,0.3M638.2,378.7l1.7,0.4M697.6,409.8l-2.5,0.8M711.8,431.8l-1.7,2.0M767.7,423.2l1.2,0.0M676.1,406.2l2.5,0.7M740.0,450.7l-0.2,0.5M681.0,374.7l1.4,2.2M655.3,412.1l0.2,1.8M617.6,433.3l0.3,0.1M673.6,415.0l1.6,0.9M1047.7,388.4l0.6,1.0M754.5,444.8l-1.3,1.3M749.3,469.4l-0.5,0.0M563.8,368.3l-1.7,0.5M534.5,379.5l0.8,0.9M756.1,416.3l-0.2,0.4M532.2,378.7l-2.3,1.1M758.3,434.8l-0.3,0.8M686.5,437.4l-0.4,0.7M665.6,406.3l-0.0,0.3M664.2,419.6l-0.0,0.3M659.2,378.4l2.1,1.6M700.1,422.3l-0.1,0.5M756.9,413.6l-0.1,0.5M772.6,416.1l0.1,0.3M611.7,358.5l0.2,0.4M682.9,419.5l-0.2,0.4M744.7,447.6l-0.0,0.3M529.0,363.2l0.2,0.2M725.9,461.6l-0.1,0.5M711.1,348.1l0.8,0.2M670.2,382.6l-0.2,0.2M641.5,379.1l0.5,0.0M680.7,374.2l-0.7,1.0M696.5,412.6l-0.3,0.1M767.4,416.8l0.7,2.5M691.5,446.7l-1.4,1.2M732.5,448.0l-0.2,0.2M510.0,392.4l1.2,0.0M576.3,339.4l-1.0,1.5M650.3,421.1l-0.1,0.3M514.3,379.4l0.1,0.8M654.2,402.8l0.2,0.3M496.6,373.3l0.6,1.1M663.1,378.6l0.2,2.6M617.9,417.2l-0.5,0.1M558.3,370.6l-0.1,0.3M563.8,346.9l-0.3,0.1M633.7,407.7l-0.6,2.5M643.2,361.2l0.5,0.6M579.4,399.3l0.2,1.2M732.3,385.8l1.7,0.5M731.5,415.2l0.1,1.8M713.7,451.0l0.2,0.8M744.7,399.0l-0.1,0.3M609.1,371.6l1.1,1.4M710.3,455.3l0.2,0.3M748.5,456.4l-0.0,0.8M622.7,391.8l-0.5,0.2M730.4,418.8l1.1,0.3M734.6,449.9l0.8,0.0M532.0,375.2l1.1,1.4M595.7,350.6l-0.9,0.8M590.1,424.1l0.1,2.6M766.7,404.1l-0.9,1.5M661.6,402.8l-2.6,0.4M609.0,366.4l-0.1,0.3M669.8,365.0l-0.0,1.2M670.4,390.3l0.1,0.3M652.5,362.9l-0.3,0.8M780.5,426.3l2.5,0.8M652.9,435.9l-0.2,0.5M483.9,362.6l1.8,0.3M789.6,444.8l0.2,0.2M643.9,362.3l2.2,1.4M633.4,371.9l1.1,0.5M770.5,432.3l-0.2,0.2M629.4,418.3l0.3,0.8M655.2,389.4l1.6,0.9M693.4,428.1l0.9,0.8M732.9,454.5l-0.1,0.3M485.8,359.6l0.3,0.4M684.6,410.2l0.5,0.1M769.4,400.4l-1.5,2.1M767.8,401.4l-1.1,0.5M656.3,416.5l1.6,2.1M619.9,377.5l-0.1,0.5M673.4,378.0l1.8,0.4M583.0,400.7l-0.1,1.2M696.6,349.6l0.7,0.4M525.0,377.0l-0.8,0.0M566.5,348.7l-1.8,0.3M567.8,401.8l-1.1,1.4M624.5,353.5l-0.1,0.3M656.3,368.1l1.7,0.7M739.4,436.5l0.3,0.1M705.5,439.3l0.7,0.3M677.1,402.4l-0.5,0.6M755.0,452.1l0.7,0.3M548.3,379.9l-0.9,0.8M658.4,423.9l-0.2,0.8M753.9,460.7l0.1,0.3M676.3,432.5l1.7,0.4M729.9,465.7l0.5,0.1M642.1,374.3l-0.1,0.5M773.9,436.0l-0.2,0.2M1015.8,371.5l-0.1,0.5M690.1,437.4l0.4,0.3M693.1,426.9l0.7,1.0M598.0,350.9l1.4,2.2M712.7,348.8l0.4,1.1M556.9,365.4l0.5,0.6M579.6,394.0l-0.7,0.5M660.6,438.8l0.3,0.1M757.5,431.0l-0.6,0.5M635.7,406.9l-1.6,0.7M561.2,393.0l-0.0,0.5M683.2,343.9l-0.2,0.2M606.0,371.1l-0.7,0.4M626.4,344.9l-0.1,0.3M600.8,432.9l-0.7,0.5M618.0,408.1l0.4,0.7M734.8,394.5l0.1,0.3M643.4,387.3l1.2,0.3M683.5,402.4l0.1,0.3M639.8,419.9l1.1,1.4M679.0,350.2l-0.3,1.2M733.5,391.8l0.3,0.4M675.7,372.3l-0.8,1.6M614.4,410.8l-1.2,0.1M679.8,411.1l1.2,0.2M685.7,451.7l0.2,0.2M692.5,356.3l0.6,1.1M593.0,348.3l-0.7,1.0M622.0,413.5l0.1,0.5M704.4,431.5l-1.1,0.4M787.4,429.1l0.2,0.3M759.8,417.6l0.0,2.6M772.8,419.7l-0.5,0.1M558.4,389.1l-1.1,0.4M585.8,343.0l0.8,0.3M591.0,367.2l0.1,0.5M503.8,368.1l0.1,0.3M766.9,391.6l1.1,1.4M740.3,407.0l0.4,1.1M672.9,417.9l2.6,0.3M555.0,372.9l2.3,1.2M634.8,350.7l-1.4,2.2M642.5,439.9l0.1,0.3M711.0,425.2l0.2,0.2M739.6,401.7l-0.6,1.7M737.9,429.9l1.0,0.7M656.2,355.4l-0.6,1.0M652.3,364.9l0.3,0.1M761.9,414.4l-0.5,0.0M656.5,422.8l0.6,0.5M671.2,415.6l0.0,2.6M763.7,405.4l-0.2,0.2M741.9,385.7l1.2,2.3M756.3,416.1l1.1,0.6M643.2,392.7l-0.1,0.5M612.7,380.8l-0.3,0.2M651.7,393.5l0.1,0.3M746.3,397.2l2.1,1.6M1029.5,358.4l0.0,0.3M751.0,423.8l0.1,0.3M688.0,447.1l0.3,0.1M687.1,409.3l-0.7,0.5M498.3,370.1l-0.1,1.2M744.9,412.6l0.1,0.3M742.3,423.4l0.8,0.0M636.7,436.1l1.4,2.2M675.0,432.2l0.2,0.2" fill="none" stroke="#bccee5" stroke-width="0.7" stroke-linecap="round"/>
<path d="M704.4,416.0l-0.1,0.3M511.5,345.4l-0.1,0.5M647.8,391.4l-0.7,0.4M643.2,422.0l0.2,0.8M622.4,336.5l2.5,0.8M641.6,439.7l-0.4,0.7M649.5,403.8l-2.4,1.1M616.9,376.5l0.1,0.5M637.1,436.9l0.7,0.4M700.4,414.3l-0.3,0.0M578.6,396.8l1.1,0.5M651.0,385.7l0.5,0.0M770.5,421.0l0.1,0.5M781.3,426.5l-0.1,0.3M593.8,338.8l1.0,1.5M767.2,414.6l-0.3,0.1M516.8,357.4l0.1,1.2M646.5,391.0l1.3,1.3M779.1,426.2l0.2,0.2M744.3,387.6l0.3,0.1M748.2,458.9l1.2,2.3M667.1,363.6l0.0,0.3M737.0,420.7l-0.7,0.4M667.5,424.6l0.1,0.3M663.0,415.6l-0.1,0.5M630.1,423.7l1.1,1.4M646.5,364.9l-1.9,1.8M666.9,380.9l0.5,1.7M528.4,363.8l0.5,0.1M607.4,435.7l0.8,2.5M590.4,375.4l-0.5,2.6M664.9,369.7l-1.8,0.0M622.0,399.3l0.8,0.9M639.4,416.3l2.6,0.5M697.1,437.2l0.4,0.3M682.9,399.1l0.6,2.5M690.6,469.9l-0.0,0.3M732.7,396.3l0.6,0.6M745.7,429.0l0.5,0.7M519.4,372.7l0.2,0.2M644.8,365.3l2.6,0.0M736.4,419.5l0.7,1.7M684.5,416.9l-0.0,0.8M700.9,355.2l-1.8,0.2M672.3,410.7l-2.6,0.4M655.2,436.6l-0.3,0.7M654.0,364.1l0.7,1.7M507.7,402.2l1.1,1.5M531.4,375.8l0.9,1.5M782.4,426.8l-0.3,0.1M661.5,372.1l-0.1,0.3M708.4,347.9l0.1,0.3M711.2,425.1l0.3,0.4M649.0,388.9l0.3,0.4M740.0,408.8l1.8,0.1M689.1,435.0l0.3,0.8M676.1,463.3l-2.5,0.7M576.8,361.6l-0.3,0.1M621.0,395.2l1.0,1.5M690.3,439.7l0.4,0.3M598.0,380.5l0.2,0.2M575.9,363.0l-0.2,0.4M766.4,418.0l0.1,0.3M746.2,403.9l0.1,0.5M773.3,427.8l-0.5,0.6M638.4,356.2l-0.3,0.7M631.8,423.4l0.5,0.2M736.6,445.7l0.1,0.5M545.6,391.1l-1.6,0.7M676.6,369.2l-0.6,1.7M601.3,421.6l0.2,0.2M700.8,426.1l-0.8,2.5M524.8,366.3l-1.0,0.7M667.8,376.9l0.3,1.8M665.9,399.1l-1.2,0.2M662.2,368.7l-0.0,1.2M696.2,425.8l-1.0,0.7M490.9,371.0l-0.2,0.4M710.3,421.8l-0.3,0.0M772.0,414.5l-0.0,1.2M770.6,439.3l-2.4,1.0M675.2,363.6l0.2,0.8M660.6,431.2l1.8,0.2M483.3,335.5l-2.5,0.8M731.5,453.5l-0.2,0.2M681.3,338.4l1.2,0.3M647.1,373.5l0.2,0.2M690.2,459.6l-0.4,0.3M762.5,404.3l-0.7,0.3M748.4,456.6l0.0,0.3M619.8,422.2l-0.7,0.3M710.5,348.1l0.6,0.5M787.6,441.7l0.3,0.2M712.2,419.0l0.2,0.2M733.9,381.7l2.5,0.9M677.8,370.4l0.3,0.1M598.8,380.8l-0.0,0.8M527.7,336.4l-0.3,0.1M740.0,399.1l-1.2,2.3M675.6,439.1l1.0,1.5M675.3,408.0l0.6,0.5M495.3,329.8l-0.1,0.5M525.8,381.2l-0.9,0.8M564.9,354.7l-2.2,1.3M651.8,375.2l0.8,0.0M641.4,345.2l-0.6,2.5M646.5,376.0l1.2,0.3M750.8,429.9l0.4,0.7M639.0,358.3l-0.3,0.4M628.5,376.9l0.0,0.3M735.3,438.2l0.3,0.2M697.2,465.5l0.0,0.3M742.5,439.1l2.5,0.6M644.4,402.4l-1.1,2.4M669.0,396.5l-0.8,0.0M675.5,423.3l-0.8,1.6M664.3,412.3l0.8,2.5M681.7,398.4l0.3,1.8M616.7,431.7l1.4,1.2M766.2,428.7l1.8,0.3M713.8,448.2l-0.7,1.0M647.6,386.5l-0.5,0.6M673.4,373.7l-0.3,0.7M708.5,440.3l2.6,0.2M669.9,366.5l0.3,0.0M680.7,452.9l-0.1,0.5M524.0,368.6l0.5,0.2M693.1,430.3l0.3,0.7M713.5,428.0l0.5,0.1M749.7,422.9l-0.3,1.2M678.9,426.0l0.8,0.1M686.3,379.0l0.5,0.0M695.4,432.3l0.4,0.3M668.8,368.6l0.8,0.0M663.7,345.8l-0.0,0.8M639.4,392.9l-0.5,0.2M642.1,382.6l1.2,0.3M711.0,469.4l0.4,0.4M537.4,379.1l-0.7,1.0M608.0,382.6l2.6,0.2M602.6,381.6l1.1,0.5M680.5,433.2l1.1,0.5M696.1,359.4l0.8,0.1M622.7,419.0l1.1,0.4M636.1,369.7l0.8,0.1M666.1,368.6l1.1,0.4M637.3,413.4l0.8,0.1M674.6,457.0l2.0,1.7M669.3,441.9l-0.9,0.8M651.5,349.7l0.5,0.6M626.8,394.1l0.4,0.2M650.7,412.4l0.7,0.9M678.7,432.0l0.8,0.1M652.3,442.7l-1.2,0.1M746.3,450.5l-1.5,2.1M647.5,376.5l1.8,0.2M626.2,374.6l-0.6,2.5M691.7,426.0l0.1,0.3M635.7,386.6l0.6,1.1M720.7,451.8l-1.5,1.0M635.2,356.2l2.1,1.5M695.3,361.0l-1.4,2.2M740.2,429.0l0.2,0.4M710.4,418.0l-0.5,1.7M588.5,363.0l-0.3,1.2M706.7,466.0l-0.3,0.4M660.8,410.6l-0.8,0.1M739.8,423.3l0.5,1.1M616.7,427.1l0.7,1.0M624.6,420.6l-0.1,0.8M599.8,350.2l-0.2,0.4M749.9,405.6l-0.0,1.8M534.5,352.6l1.4,1.2M617.7,396.6l0.2,0.2M739.7,411.1l-0.3,0.1M675.1,371.6l-0.3,0.4M516.1,356.1l-0.4,0.3M666.5,364.0l-1.2,0.2M678.1,373.4l-0.4,0.3M773.1,421.4l-2.6,0.1M639.4,405.2l-1.7,0.6M708.4,437.8l-0.3,0.4M716.9,437.3l0.2,1.8M769.9,439.1l1.2,0.2M685.2,430.4l-1.2,0.3M629.9,386.9l2.3,1.2M712.2,339.7l0.1,0.3M635.2,421.3l-0.4,0.7M636.7,372.3l-0.1,1.8M766.5,416.8l0.4,1.7M583.6,378.7l0.5,0.1M708.5,430.9l-1.7,2.0M521.7,339.0l1.7,0.7M616.6,398.0l-1.4,1.2M653.0,395.0l-0.5,0.1M660.5,397.4l0.0,0.3M694.6,411.0l-0.8,0.2M642.9,415.3l0.5,0.2M624.5,337.7l-0.1,0.3M521.5,349.6l0.4,0.3M715.8,432.5l1.0,0.7M644.2,369.9l2.5,0.6M676.1,435.0l-0.7,0.4M650.2,386.3l0.4,1.8M774.6,428.1l0.3,1.8M640.7,359.6l-0.7,0.3M550.6,345.1l-2.6,0.5M669.1,352.7l-0.5,2.6M731.6,422.9l-0.5,1.1M685.3,408.9l-1.3,1.3M615.7,348.4l-0.8,0.1M544.4,336.1l0.3,0.1M710.7,424.3l-0.4,0.7M730.4,420.2l-0.2,0.8M760.0,421.8l-1.3,2.3M712.1,446.6l1.5,2.1M586.2,347.8l0.7,1.0M629.1,424.8l-0.0,0.5M676.3,389.7l0.5,0.1M630.8,398.4l0.2,0.5M620.3,427.0l2.5,0.7M610.0,397.6l0.1,0.8M753.4,442.6l1.5,1.0M698.4,428.5l-0.9,1.6M640.3,369.7l0.8,0.9M632.5,387.8l1.4,2.2M726.8,455.5l0.1,0.3M648.5,416.0l0.2,0.8M765.5,392.5l-0.8,0.1M767.2,417.3l0.8,0.2M773.1,406.9l1.8,0.3M669.4,371.1l-1.8,0.0M698.9,424.3l0.0,0.5M529.6,376.4l0.7,0.4M684.6,364.3l-0.6,0.5M683.8,440.7l-0.3,1.2M554.2,369.6l-1.7,0.5M750.1,436.9l-0.7,1.7M744.9,455.5l-0.4,0.3M733.1,439.7l-1.1,0.5M778.1,433.9l0.6,1.7M508.5,335.5l0.3,1.2M666.6,354.4l1.6,0.8M691.4,355.2l0.1,0.3M636.5,365.9l0.2,0.2M550.8,356.9l-1.1,0.4M669.5,358.4l1.5,2.1M699.5,413.9l2.3,1.3M686.2,328.9l0.2,0.2M732.5,393.2l2.4,1.1M689.7,427.9l0.5,0.1M594.9,379.9l0.5,0.2M736.6,427.3l1.1,0.4M622.7,360.5l0.3,0.7M675.0,361.6l-2.0,1.7M756.5,412.6l1.2,0.2M657.8,354.3l0.5,0.1M724.1,460.3l0.3,0.1M661.8,435.2l-1.0,1.5M635.0,422.5l0.3,0.7M776.8,425.6l-0.2,0.2M704.3,415.3l-0.5,1.7M630.1,434.7l0.7,2.5M667.5,363.6l-0.5,0.0M618.8,425.5l0.7,2.5M676.8,434.4l0.4,1.1M728.3,424.8l-2.5,0.6M613.4,390.7l-0.3,0.4M588.6,378.5l-2.5,0.7M540.7,373.6l-0.2,0.2M626.5,348.2l-1.1,2.4M744.2,421.2l-0.7,1.0M528.3,378.5l1.2,1.3M633.6,396.9l-0.4,0.3M525.6,355.1l1.1,0.5M661.9,413.8l-0.5,2.5M702.6,417.6l-0.2,0.3M728.9,419.0l0.3,0.8M769.9,421.6l0.0,2.6M661.9,368.5l0.8,1.6M687.9,356.5l-0.3,0.0M728.4,450.5l-0.5,0.1M648.6,404.4l0.6,0.5M608.1,377.3l-0.6,0.5M748.4,393.8l-0.3,0.4M705.7,431.9l-1.6,0.8M759.0,416.6l-0.8,0.2M649.8,418.7l-0.4,0.3M635.4,420.5l-0.1,0.3M593.3,389.7l-0.5,0.0M732.1,415.6l-0.6,1.7M667.7,382.6l-0.1,0.3M506.4,373.5l-0.4,0.3M564.3,383.9l0.2,0.8M745.3,383.3l2.5,0.8M753.2,415.1l0.1,2.6M665.3,402.8l0.8,0.1M566.5,358.0l-1.8,0.4M758.9,433.8l1.3,1.2M713.1,444.5l-0.0,0.3M630.6,403.2l0.3,0.4M718.2,430.5l0.3,0.1M763.3,402.1l0.5,0.0M632.6,355.2l-0.1,2.6M771.2,428.3l-0.3,1.2M672.6,366.2l1.6,0.8M660.4,392.8l-0.3,0.1M639.4,359.4l1.2,1.3M631.9,403.5l-0.8,0.3M648.1,386.8l-1.2,0.2M748.7,432.4l-1.5,1.0M704.4,428.6l0.0,0.5M657.4,351.5l1.2,0.1M699.0,431.4l-0.3,0.0M601.0,369.4l-1.1,1.4M770.4,439.2l-0.5,0.0M666.4,395.0l0.0,0.8M663.4,368.9l-0.5,0.1M767.7,432.4l-0.2,0.2M623.8,421.7l1.0,1.5M641.0,381.7l-2.2,1.4M616.8,412.3l-0.0,0.3M586.4,414.5l-0.1,1.2M729.2,417.5l0.4,0.7M611.6,393.1l-0.3,0.1M482.7,352.2l-0.9,0.7M588.2,359.3l2.6,0.1" fill="none" stroke="#bccee5" stroke-width="0.9" stroke-linecap="round"/>
<path d="M746.9,402.4l0.8,0.3M725.0,434.4l2.5,0.8M606.9,381.9l0.7,1.0M666.4,395.9l0.3,0.4M723.9,446.7l-0.5,0.6M727.3,436.3l0.9,0.8M760.1,410.5l-0.0,0.3M540.1,355.5l-0.5,1.1M789.4,430.2l2.1,1.6M715.0,430.9l-0.0,0.3M598.7,437.7l-2.5,0.7M683.8,336.8l-0.4,0.3M621.3,436.9l-0.3,0.4M645.4,392.7l0.3,0.8M686.1,436.8l-0.3,0.4M651.4,355.2l1.0,0.7M767.1,398.6l1.8,1.9M565.6,363.6l-0.5,0.2M615.4,400.8l0.5,0.2M765.9,398.4l0.3,0.4M608.0,428.2l0.3,0.4M635.5,420.9l-0.6,0.5M645.2,404.8l1.1,0.4M675.9,440.7l0.3,0.1M672.6,372.6l0.0,0.8M774.2,411.2l1.1,0.4M771.0,430.3l1.2,0.3M754.1,443.0l-0.7,0.3M708.4,441.9l-2.1,1.5M602.8,346.1l-0.4,0.7M711.4,418.6l1.4,1.1M693.4,355.4l-0.3,0.4M597.3,349.8l0.2,0.2M571.8,372.1l-0.0,1.2M604.8,338.1l-0.1,1.8M679.1,401.9l-0.4,1.7M687.4,360.4l-1.9,1.8M656.3,424.8l-1.0,0.7M673.9,403.9l0.3,0.1M507.4,352.6l0.4,1.8M529.8,362.2l0.1,0.8M638.4,364.6l0.4,0.2M755.4,406.2l1.2,0.2M635.5,411.8l-0.5,0.1M547.2,367.1l0.2,0.2M679.6,381.1l0.2,0.8M637.4,416.4l1.5,2.1M660.2,412.3l-0.5,1.1M709.1,428.8l1.7,2.0M651.9,400.4l-0.7,0.9M613.0,415.2l1.4,1.2M682.5,377.3l-0.2,1.2M729.6,426.1l-1.2,0.3M640.8,390.6l-0.2,1.2M648.5,386.2l0.2,0.5M594.1,370.2l-0.1,0.3M594.6,344.0l-0.3,0.0M655.6,376.5l0.5,1.1M698.0,424.0l0.2,0.8M569.4,351.9l-2.6,0.4M548.4,377.4l0.2,0.2M512.0,368.7l0.2,0.2M645.6,413.8l0.3,0.2M764.3,392.4l0.1,0.8M746.7,442.5l-0.2,0.5M681.8,412.1l-0.7,0.4M620.8,380.2l0.5,0.1M611.1,394.9l0.5,0.1M745.5,465.4l0.3,0.1M695.5,415.2l-1.5,1.0M678.6,428.2l-0.1,0.8M599.5,444.2l-0.1,2.6M746.4,446.7l0.0,0.5M773.2,413.9l-0.3,0.1M768.7,398.5l-0.3,0.4M593.4,395.3l1.1,0.5M691.3,354.9l0.4,0.3M678.1,398.6l-0.4,0.3M771.9,425.3l1.1,0.4M709.6,435.5l-0.3,0.4M539.6,323.7l0.2,1.2M663.3,400.9l-0.4,1.8M654.1,408.0l0.3,0.7M563.6,370.0l-0.0,0.3M664.2,394.0l0.7,0.3M771.3,432.1l-0.3,0.7M589.7,397.5l1.2,0.0M598.1,403.4l-0.1,0.5M648.2,414.8l0.2,0.2M676.5,394.0l0.5,0.7M726.3,418.8l-0.1,0.3M628.1,391.1l0.9,0.8M663.6,389.4l0.3,0.4M589.2,417.3l-1.4,2.2M760.6,435.8l-0.6,0.5M654.1,414.4l0.9,1.6M635.5,418.9l-1.0,0.7M716.7,428.8l1.2,0.3M662.1,377.7l-0.3,1.2M631.6,352.8l-0.1,0.3M667.4,352.1l-0.6,1.7M708.1,440.0l1.0,0.7M648.2,373.7l0.1,0.8M680.1,445.1l-1.1,0.5M664.0,378.5l-2.6,0.4M581.7,383.3l1.2,0.0M752.3,411.5l-0.1,1.8M640.1,358.6l-2.6,0.5M598.5,380.2l-1.1,0.5M687.1,463.4l-1.2,1.3M654.1,347.3l0.7,0.3M733.2,410.0l0.3,0.1M635.3,428.2l1.1,0.4M650.8,445.4l0.2,0.8M746.9,438.1l-0.2,1.2M1018.9,373.8l-0.3,0.4M646.7,373.0l-0.5,0.6M735.0,462.0l0.0,1.8M663.1,392.4l0.0,1.8M681.0,435.0l0.3,0.1M787.6,429.0l-0.2,0.2M675.0,401.0l-0.3,1.2M737.3,436.3l0.0,1.8M594.1,375.2l-0.8,0.2M656.1,444.4l-1.5,1.0M591.5,383.8l0.2,0.2M514.3,359.5l0.2,0.4M610.9,388.8l1.5,0.9M714.0,420.8l-0.8,0.9M677.6,430.9l0.7,1.0M632.1,409.3l0.3,0.1M736.9,428.1l0.1,0.3M677.5,349.0l0.7,2.5M729.4,389.3l-1.0,1.5M667.2,366.0l0.2,0.2M683.9,413.1l0.7,0.4M753.6,407.3l-0.1,0.8M685.1,435.0l-1.4,1.1M635.1,360.2l1.8,0.4M652.4,350.2l0.8,0.2M750.9,408.8l-0.2,0.4M645.7,399.7l-0.2,0.8M690.5,418.3l1.9,1.8M760.8,436.8l-1.1,0.4M699.0,440.5l1.1,2.4M666.2,395.5l1.4,1.1M750.0,401.8l-0.5,0.0M640.4,380.4l-0.4,0.3M699.4,362.8l0.3,0.4M735.5,402.6l-0.1,0.3M742.9,435.1l-0.9,2.5M690.1,340.9l-0.3,0.4M735.5,393.9l0.3,0.4M670.2,417.3l0.5,0.2M673.0,418.4l0.9,1.6M612.6,436.3l-0.3,0.4M669.3,413.6l-1.3,1.3M731.5,416.6l0.3,1.2M678.6,394.5l0.9,1.5M619.4,445.3l-1.8,0.1M526.1,333.4l-1.6,0.7M660.2,410.3l-0.2,0.2M716.4,341.8l1.1,0.4M509.0,359.9l-0.3,0.1M733.1,409.5l0.2,0.2M677.0,410.4l2.5,0.6M610.3,371.3l-1.0,0.7M675.4,350.4l-1.5,1.0M1015.6,391.1l2.2,1.3M681.3,466.9l-0.7,0.4M768.6,402.7l1.6,0.8M514.3,364.1l-1.8,1.9M532.4,381.1l0.3,0.1M735.2,388.9l0.2,0.8M645.0,400.2l-2.6,0.0M668.6,364.2l1.0,2.4M698.7,459.5l-0.3,0.1M690.7,348.4l0.1,0.5M771.8,406.0l-1.8,0.1M635.8,349.2l0.1,0.8M773.0,413.8l-0.4,2.6M735.0,462.2l-1.7,0.7M656.2,370.0l-0.4,1.7M646.6,360.8l0.7,0.3M622.0,429.2l-0.1,0.3M599.9,437.4l-0.0,0.5M649.2,381.3l-1.2,0.2M649.5,404.2l-2.2,1.3M599.1,336.8l-2.2,1.4M589.5,406.5l1.8,0.3M650.5,440.4l-0.1,0.3M729.0,393.3l1.0,0.7M690.6,410.3l-0.1,0.5M657.8,397.6l1.1,0.4M709.4,433.7l-0.8,0.2M627.2,424.8l-0.4,0.3M608.6,394.5l-1.7,2.0M553.5,385.7l-0.1,0.3M683.0,369.7l-2.6,0.3M646.8,365.9l1.7,0.7M765.2,391.3l-1.6,0.8M652.3,379.0l-0.5,0.2M675.5,409.3l-2.6,0.1M755.4,426.3l1.3,2.2M660.5,352.6l-0.2,1.8M627.4,400.7l-1.2,0.3M599.4,410.8l0.7,0.4M704.5,431.7l-0.5,0.1M602.1,391.5l-0.5,0.0M516.7,347.9l-0.4,1.1M737.2,419.8l-0.0,0.8M490.9,394.2l0.2,1.2M639.2,374.8l-0.3,0.4M754.5,403.6l1.6,2.1M638.2,376.0l-0.2,0.5M616.6,391.5l-0.8,0.1M734.3,411.4l1.4,1.1M752.1,409.4l-1.2,1.4M751.5,420.7l0.3,1.1M586.2,393.4l-1.7,2.0M764.6,402.7l-0.7,1.0M711.0,430.9l-0.5,0.1M555.5,394.2l0.0,0.3M773.3,423.5l1.4,1.1M768.0,393.7l1.1,0.5M655.5,359.9l-0.3,0.7M738.3,423.5l-0.2,1.2M554.2,358.7l-0.2,1.8M645.9,388.0l0.1,1.2M674.1,382.8l-0.2,0.5M494.7,357.1l-0.2,0.2M751.5,391.3l-1.8,0.2M600.9,434.0l-0.5,0.0M544.4,350.1l0.5,0.1M654.4,411.0l0.6,2.5M733.7,379.0l0.3,0.4M668.3,419.0l-0.5,0.6M673.6,350.5l-0.0,1.8M672.4,343.3l-0.7,0.5M702.0,442.7l-1.2,0.3M733.9,387.8l1.0,0.7M653.0,380.2l-2.4,1.0M708.0,468.5l0.1,0.5M659.1,412.5l0.3,0.0M700.9,412.0l0.9,0.8M609.6,441.3l0.2,0.3M671.8,375.0l1.1,0.4M644.8,353.9l1.1,0.5M657.1,414.8l2.0,1.7M769.9,411.3l0.5,0.6M591.8,413.6l0.3,0.1M739.9,438.3l-0.1,0.5M741.8,430.0l2.6,0.4M731.3,401.7l-0.4,0.7M712.2,450.5l-0.8,2.5M711.8,428.9l1.0,1.5M752.4,432.8l-2.4,0.9M678.3,399.6l1.2,2.3M733.7,397.6l-1.7,0.6M579.3,353.6l2.6,0.1M773.4,432.4l-1.1,0.4M633.5,384.4l0.1,0.5M696.6,426.5l1.1,1.5M731.8,394.5l-0.3,0.1M738.7,391.9l0.7,0.3M685.2,346.2l0.2,0.8M521.6,375.8l0.3,0.1M688.2,452.4l-1.9,1.8M626.9,444.4l0.3,0.1M531.5,385.4l-0.2,0.5M726.4,434.5l-0.8,0.0M747.8,425.3l0.6,0.5M619.2,423.1l-0.2,0.2M557.3,382.9l0.2,1.2M591.7,385.9l2.5,0.8M686.6,337.8l1.0,2.4M677.6,355.3l-0.7,1.7M757.0,410.7l0.6,1.0M736.5,381.6l-0.2,1.2M657.2,394.3l-0.5,0.0M734.6,442.3l-1.1,0.4M693.2,431.4l1.2,0.1M746.5,407.2l0.1,1.2M737.9,469.2l2.5,0.6M740.8,458.3l-1.9,1.8M630.9,420.5l-0.4,0.3M728.7,439.0l1.1,1.4M741.7,437.5l-1.8,0.3M763.6,439.2l-1.3,2.2M733.9,401.6l-0.7,2.5M730.6,423.9l1.3,1.3M631.9,372.3l0.4,0.7M701.5,427.9l-1.4,2.2M553.0,347.1l-0.7,0.4M657.1,383.5l-1.8,1.9M547.7,384.9l0.2,2.6M742.2,411.6l-2.4,1.0M703.8,414.7l1.7,0.5M694.6,416.9l-1.8,0.1M726.3,440.2l-0.2,0.2" fill="none" stroke="#bccee5" stroke-width="1.1" stroke-linecap="round"/>
<path d="M650.8,376.5l-0.5,0.1M509.4,388.0l1.1,0.4M748.4,421.6l0.3,0.1M633.0,408.9l-1.2,0.0M555.9,351.2l0.4,0.3M786.6,439.4l0.3,0.1M752.9,429.3l-0.9,1.6M742.3,390.7l-2.6,0.5M681.6,419.2l2.0,1.7M660.2,399.0l0.1,1.2M686.8,361.4l0.9,2.4M686.2,415.6l-1.3,2.3M706.3,417.3l-0.0,0.8M594.8,425.6l0.3,0.1M680.5,413.1l-1.8,0.3M642.4,401.1l-0.8,0.2M628.6,408.3l-1.7,0.5M559.9,342.7l-0.3,0.1M1014.7,368.6l0.3,0.1M603.2,437.0l-0.8,1.6M601.8,393.5l-1.1,0.4M685.8,355.4l0.1,0.5M651.0,364.8l2.3,1.3M714.9,456.0l-1.0,0.6M686.7,358.8l1.2,1.3M550.4,358.9l-1.6,0.7M636.6,378.5l-1.1,0.5M663.0,372.0l1.2,2.3M663.7,403.9l0.6,0.6M640.6,399.8l-2.3,1.2M749.9,408.1l2.3,1.3M725.5,421.3l0.3,0.0M697.1,357.9l-0.7,1.0M752.5,420.0l0.1,0.3M709.5,439.6l0.6,2.5M716.2,431.9l0.7,1.0M730.1,392.7l1.5,1.1M676.3,413.0l0.4,0.7M481.9,381.9l0.3,0.7M536.6,375.5l-0.0,0.5M491.5,390.7l-0.2,0.5M620.2,422.2l-0.1,0.3M756.7,418.3l-0.1,1.2M693.5,443.2l0.5,0.2M609.2,374.8l-1.7,0.7M752.7,466.2l-0.2,0.2M649.1,382.4l1.0,1.5M522.9,373.0l0.0,0.3M503.0,378.0l0.8,0.2M589.4,400.6l-1.7,0.7M737.1,386.1l-0.8,0.2M765.9,408.1l-0.6,0.5M713.7,443.7l0.4,0.3M589.0,371.7l0.7,0.4M649.8,404.6l0.3,1.8M699.0,428.1l0.4,1.8M643.4,403.1l-0.3,0.4M654.0,362.5l0.7,0.4M531.8,354.6l0.8,0.9M632.4,351.1l-0.8,2.5M565.6,362.0l0.4,1.1M748.5,460.1l-0.3,0.4M640.8,407.1l-1.8,0.1M683.8,404.0l1.2,1.4M729.6,438.9l-0.4,0.2M778.8,426.1l1.2,0.2M736.1,395.7l-0.6,1.7M733.9,413.0l0.3,0.4M684.8,441.4l-1.2,0.1M768.7,408.7l0.4,0.3M614.8,392.2l-0.3,0.1M682.7,434.0l0.3,0.1M668.5,400.6l-0.1,0.8M668.9,369.8l-0.3,0.4M649.0,401.2l-0.2,0.2M637.7,387.9l-1.1,0.4M580.1,346.3l-0.6,1.0M714.1,469.0l0.2,0.5M621.1,390.1l-0.4,0.3M582.1,381.8l0.3,0.1M713.9,440.9l-1.0,2.4M629.4,398.6l-0.2,0.2M625.3,389.1l0.8,0.1M645.6,415.5l0.5,0.1M599.5,344.5l0.0,1.2M683.3,424.4l0.5,0.1M658.1,384.8l0.2,0.2M506.2,392.1l-0.4,0.2M741.8,386.3l1.7,2.0M741.6,439.9l2.6,0.3M611.3,400.6l-0.3,0.0M678.9,422.3l-2.3,1.2M741.2,378.5l-1.7,0.7M745.9,439.1l0.7,0.4M488.8,387.8l-2.6,0.5M742.7,430.3l-0.5,1.7M767.1,401.4l-1.3,2.2M597.6,389.3l1.6,2.0M696.3,440.5l0.1,0.3M743.5,390.4l-0.3,0.4M696.6,444.3l-0.8,0.3M765.3,428.8l0.5,0.7M694.0,411.3l1.8,1.8M738.6,460.5l1.8,0.1M678.3,377.4l0.7,1.0M662.4,392.6l0.2,0.2M623.1,349.1l-0.5,0.1M638.8,436.8l0.3,0.7M647.4,413.7l0.1,0.3M726.5,427.6l0.2,0.3M601.9,364.9l-1.4,1.2M658.5,362.8l-0.8,0.9M603.5,374.3l0.5,0.1M767.1,422.5l0.6,0.5M757.9,406.7l-1.2,0.1M763.6,403.2l-0.2,2.6M626.1,401.6l0.4,0.7M718.0,442.5l-0.4,0.7M755.0,440.6l-1.1,0.4M653.6,414.1l0.6,0.5M596.1,411.7l0.8,0.3M598.7,370.6l0.1,0.5M636.6,387.5l0.3,0.1M686.5,359.0l0.6,1.0M635.0,352.4l-0.1,0.3M763.1,396.3l1.6,0.8M657.2,383.8l0.1,0.3M497.8,328.8l0.2,0.5M538.2,354.9l0.5,1.1M598.9,442.5l-0.3,0.1M482.1,338.4l-0.7,1.0M693.1,418.5l-1.8,0.3M573.9,376.0l-1.6,2.1M634.2,390.0l0.5,0.1M667.8,364.9l0.8,2.5M687.1,444.8l-0.3,0.1M712.5,424.4l0.7,0.4M765.5,408.2l-0.6,0.6M665.7,382.5l0.2,2.6M769.2,404.6l-0.0,0.3M747.1,425.6l-0.3,0.4M612.5,361.2l2.3,1.1M650.9,384.2l1.7,0.6M747.1,442.7l0.3,0.1M658.2,393.4l0.2,0.5M764.3,420.2l1.2,0.2M620.2,410.5l0.1,1.2M638.1,384.1l-0.1,0.5M690.2,449.1l-0.8,0.9M732.9,398.0l-0.2,1.8M588.0,351.5l0.3,0.1M733.2,400.4l2.6,0.4M674.2,406.0l-1.2,0.2M547.4,358.3l0.8,0.9M668.5,361.2l0.6,0.5M767.0,406.3l0.3,0.7M697.4,362.9l-1.1,1.4M773.5,423.8l0.5,0.6M664.8,423.2l-0.5,0.1M615.7,407.7l-0.8,0.2M744.5,399.7l1.0,0.6M668.6,415.3l-0.3,0.4M751.9,438.6l-1.1,1.4M500.6,353.8l-0.3,1.2M504.1,338.4l-0.0,1.2M679.9,437.6l-0.5,0.2M690.2,443.7l0.1,0.3M518.1,346.1l0.2,0.8M595.6,402.0l-0.1,0.3M637.2,385.7l-1.8,0.3M682.1,350.2l0.7,1.6M666.6,422.4l1.6,2.0M622.9,345.4l-0.2,0.2M682.0,378.0l0.2,0.8M565.6,381.6l-0.8,0.2M633.4,374.5l1.7,0.7M733.2,399.5l-0.1,1.8M505.3,340.4l1.6,0.9M623.6,440.8l0.2,0.2M566.3,385.2l2.4,1.0M635.1,356.1l0.3,0.1M669.2,397.6l0.8,1.6M773.6,440.0l-0.6,0.5M767.2,429.9l0.8,0.9M706.5,337.8l-0.4,0.7M713.7,426.1l-0.5,0.2M565.4,364.2l-0.1,0.3M654.2,404.0l-1.1,0.5M767.0,438.2l-0.9,1.6M685.9,422.7l0.3,0.7M772.5,435.8l0.1,1.2M744.1,428.5l-0.5,2.5M677.9,420.7l0.7,0.4M538.8,359.9l-0.2,0.5M633.6,353.7l0.3,1.2M676.2,438.3l0.3,0.4M536.2,384.2l-0.3,0.1M683.5,433.1l-1.8,0.4M748.3,415.7l-2.0,1.6M504.1,345.0l0.0,0.5M1039.1,375.8l0.4,0.7M677.3,380.8l-0.0,1.8M666.8,412.8l-0.5,2.6M636.9,415.3l-1.1,0.4M494.0,356.1l0.6,0.6M692.1,363.9l-1.2,1.3M635.7,411.6l0.2,0.8M749.1,428.3l-1.0,0.6M743.6,436.3l-0.5,0.1M701.4,354.7l-1.2,1.4M667.6,413.2l-0.3,2.6M502.5,376.8l-0.7,1.0M549.3,361.1l-1.6,0.8M604.4,443.9l0.1,0.3M742.7,440.5l1.8,0.3M690.2,412.2l-0.4,1.1M698.4,355.9l0.5,1.1M538.6,388.3l0.8,2.5M632.7,372.3l-1.6,0.9M785.4,444.6l-2.6,0.5M642.5,370.1l-0.0,1.2M507.3,395.2l-0.8,0.2M588.0,369.2l0.3,0.1M704.1,414.9l0.3,0.1M632.0,410.6l-1.2,0.0M601.5,393.4l-0.2,0.4M629.4,420.7l2.4,1.0M731.2,439.6l0.3,2.6M738.5,435.7l-1.8,0.2M620.9,418.4l0.2,0.8M510.7,393.8l0.8,0.9M665.2,401.8l-0.0,0.3M741.2,428.2l0.0,0.8M670.8,444.9l0.3,0.1M732.5,419.4l-1.3,1.3M660.1,347.7l-0.4,1.7M742.5,437.5l0.2,0.2M727.8,445.1l-0.3,1.2M631.5,391.8l-1.2,1.4M641.5,370.9l-0.1,0.3M685.6,366.3l-2.6,0.3M767.2,428.3l-0.5,0.1M598.0,402.0l0.7,1.7M737.5,427.8l1.0,2.4M657.5,404.8l0.3,0.0M630.2,417.8l-0.5,0.6M554.5,378.5l-1.0,0.7M687.1,443.4l0.2,0.2M762.4,438.3l0.8,0.2M730.4,423.9l-1.2,1.3M760.0,437.3l-1.0,2.4M671.7,362.8l-2.6,0.1M733.4,410.5l1.3,1.2M742.4,395.0l-0.1,0.5M501.5,360.0l0.5,0.0M760.2,439.1l0.5,0.0M770.0,410.4l2.5,0.8M725.9,436.5l0.1,0.3M737.1,394.5l0.2,1.8M727.4,435.0l-0.4,1.8M664.1,359.5l1.2,2.3M748.1,409.4l0.2,0.2M700.3,467.8l-0.7,2.5M593.8,368.3l-0.7,1.0M769.4,397.7l-0.3,0.1M663.2,407.8l0.1,0.8M677.2,347.7l0.3,0.1M687.3,367.6l0.3,0.2M766.6,404.3l1.0,2.4M743.3,413.0l-1.6,0.9M680.9,422.4l-0.1,1.2M596.2,401.9l0.8,0.1M678.7,426.5l-1.2,0.1M722.9,438.4l-2.3,1.3M632.9,401.8l-0.8,0.9M757.3,438.1l2.5,0.8M551.1,382.9l-0.9,2.4M659.3,367.9l1.7,0.7M673.2,392.6l1.1,2.4M715.2,423.9l-0.2,0.5M769.9,410.7l-0.0,0.3M572.0,389.0l0.3,0.1M600.6,345.4l0.6,0.5M713.4,432.4l1.2,0.2M650.9,347.1l-0.1,0.5M650.7,372.3l-1.8,0.2M621.2,362.8l1.8,0.3M686.2,420.8l0.9,0.8M588.8,351.8l-0.5,0.6M665.5,404.0l-0.2,1.8M633.9,418.8l-1.1,0.4M566.4,384.9l-0.7,1.0M609.0,408.5l-0.3,0.1M727.1,439.3l-0.0,0.3M676.9,365.8l0.3,0.0M699.9,421.4l-1.4,1.1M662.0,375.8l-1.2,0.3M645.5,381.8l-1.8,0.1M616.1,371.4l1.5,1.1M527.6,333.5l0.2,0.2M592.5,380.3l0.3,0.4M673.0,374.4l-1.0,0.7M760.7,422.4l-0.5,0.6M673.6,364.2l-1.8,0.1M704.9,431.7l0.4,0.3M745.9,414.4l1.1,0.5M703.2,432.6l0.9,0.8M688.2,459.1l-0.5,0.0M733.5,396.9l-2.2,1.3M754.0,413.5l0.3,1.8M585.9,394.1l0.3,0.8M749.1,392.5l1.2,1.4M694.6,469.3l-0.5,1.7M619.2,338.9l-0.0,0.3M685.9,361.6l1.0,1.5M656.8,397.5l0.3,0.7M675.9,464.8l-1.7,2.0M656.6,370.8l2.2,1.3M564.1,353.3l0.4,0.7M700.4,416.8l-0.3,0.0M621.7,358.4l-1.3,2.3M619.6,381.3l-1.7,0.6M1016.1,380.4l-1.0,0.6M661.4,379.4l0.1,0.3" fill="none" stroke="#bccee5" stroke-width="1.4" stroke-linecap="round"/>
<path d="M599.6,445.7 679.4,445.7 680.9,447 688.3,448.7 695.4,450M616.9,508.2 623.7,507.5 634.3,512.2 642.2,512.2 642.2,510.5 647.1,510.5 652.8,517.8 656.7,519.7 658.4,517.1 662.7,517.8 667,524.6 673.7,529.5M548.9,326.1 548.9,389.7 554.6,391.4 558.9,397.5 566,393.6 570.3,399.7 576,409.8 580.2,413.4 580.2,417.9M554.6,391.4 680.3,391.4M608.7,391.4 608.7,423.8 614.4,430.4 618.6,436.8 623.7,443.5 625.6,445.7M637.1,391.4 637.1,445.7M659.9,391.4 661.6,445.7M679.4,445.7 679.4,428.5 696.8,408.5M723.9,434.5 723.9,452.1 731,458.7 738.1,461.6 746.6,462.4 748.6,460.7 750.9,455.4 753.2,452.3 756.6,452.9 757.1,459.1 759.4,462.8M659.9,391.4 659.9,365.8 631.4,357.1 615.8,346.5 606.7,339.1 606.7,327.3M561.7,331.3 563.2,346.5 573.1,357.1 583.1,373.5 590.2,385.6 597.3,391.4M787.6,435 787.6,432.2 768,432.2 762.3,428.5 758.6,417.9 766.5,415.4 768.8,405.1 766.5,389.7M596.7,474.1 634.1,474.1M625.6,492.6 680.9,492.6M639.8,512.2 639.8,477.9M634.1,477.9 634.1,462.4M654,477.9 654,445.7M659.7,492.6 659.7,477.9M657,509.8 657,492.6M625.6,477.9 659.7,477.9M618.6,459.9 624.3,460.3 628.6,464.4 634.1,464.4 634.1,462.4 654,462.4M654,458.5 675.2,458.5M654,470.3 669.8,470.3 675.5,472.2M659.7,481.7 678.9,481.7M657,494.3 665.6,494.3 665.6,501 674.1,503.7 681.2,504.4M680.9,494.3 695.4,494.3 699.7,494 711.9,494 717.6,494 734.1,494.2M682.5,506.5 690.6,506.5M693.1,499.6 713.6,499.6 715.9,498.9 720.2,499.6 723.3,500.3 726.6,503.6M700.8,513.2 708.2,513.2 708.5,514.2 716.2,514.8 718.2,514.2M680.9,504.4 680.9,485 678.9,481.7 677.2,478.7 675.5,472.2M608.7,474.1 608.7,485.4 624,499.6 623.7,507.5M617.1,445.7 617.1,456.7 617.5,462.4 617.1,474.1M625.6,474.1 625.6,495.4M619.9,445.7 619.9,450.4 624.3,455.8 624.3,460.3M675.2,458.5 675.7,468.3 675.7,472.2M673.5,445.7 674.7,454.6 675.2,458.5M690.6,506.5 693.7,499.3 695.4,494.3 696.6,492.6 693.4,486.1 690,480.2 693.4,474.9 690.6,468.3 686,463.2 688,455.4M696.6,492.6 699.7,489.7 705.4,489 708.8,485 715,487.5 721,479.4 721,474.1M690,480.2 677.5,479.4M675.7,468.3 690.6,468.3M701.1,475.3 701.1,484.3 699.7,489.7M708.8,475.3 708.8,485M701.1,475.1 712.8,475.3M723,474.1 735.8,474.1 740.9,473.9 741.5,462.4 737.5,462.4M721,482.7 734.4,482.7M699.1,499.6 698.4,510.2 698.6,515.5M706.5,499.7 708.2,508.8 708.2,513.2M682.5,504.6 682.5,513.2 683.5,516.5M690.6,506.5 689.4,513.2 694.9,513.2 694.6,514.8M597.3,457.5 600.7,459.9 611.5,458.5 617.1,458.3M654,445.7 654,445.7M779.3,591.2 779.9,602 789.3,600.6 796.4,599.5 802.9,594.6M779.3,591.2 768,594.3 759.7,602.6 750.9,606.6 751.2,618 742.4,626.8 749.5,633.1 752.3,637.5 764.3,634.6 779.3,645.6 784.5,653 785.6,661.1 785,670.2 791.6,671.1 795.5,676.4 794.7,681.4 797.5,683.3 786.2,696.2 798.1,707.9M759.4,673.3 755.2,677.9 752.3,689 749.5,698.8 751.5,708.9 748,721.2 745.8,737.9 746.6,749.6 743.8,766.3 744.3,775.2 755.4,781.4M752.3,637.5 753.7,650 752.3,656.6 756.6,662.6 759.4,673.3 771.7,670.8 784.5,664.1 785.6,661.1M721.6,615.7 726.7,619.7 736.1,608.8 735,606 729.6,604.9 725.9,602M747.2,572.2 743.8,577.4 744.1,584.9 750.9,586 758,588.3 758.6,600.3 759.7,602.6M753.7,650 749.9,659.3M771.7,670.8 786.2,680.4 783.3,686.5 790.7,686.8 794.7,681.4M784.5,705.5 786.2,696.2" fill="none" stroke="#d2cfc7" stroke-width=".6" opacity=".8"/>
<path d="M439,94V274L469.6,339L470.2,358L410,430L439,450V620L459.6,649V749.6L439,777.5V934" stroke="#986f95" stroke-width="1.25" stroke-dasharray="4,2" fill="none"/>
<path d="M360,606H1280" stroke="#986f95" stroke-width="1.25" stroke-dasharray="3.8,2.1" fill="none"/>
<path d="M479.8,421.8 475,424.7 469.3,428 460.8,430.9 452.2,432.2 443.7,434.1 435.2,434.5 426.6,432.2 418.1,428.5" fill="none" stroke="#f4f3ee" stroke-width="1.1" stroke-dasharray="1.6,2.6" opacity=".85"/>
<path d="M765.7,553 770.8,555.1 774.2,559.3 776.5,563.7 776.2,567.8 774.5,571.3" fill="none" stroke="#f4f3ee" stroke-width=".9" stroke-dasharray="1.2,2.6" opacity=".5"/>
<path d="M901.5,545.5 901.9,543.1 904.5,536.6 907.6,532.5 908.8,529.1 912.5,525.9 913.3,523.1 917.3,522 921,518.4 922.7,515.2 922.1,511.5 923.8,508.8 925.8,505.6 928.4,504.4 930.5,503.1 932.9,497.9 933.2,496.8 934.8,496.5 937.2,498.9 938.9,498.9 941.6,498.6 944.3,499.3 945.2,501.3 946.6,508.2 941.5,510.5 939.8,513.5 935.8,516.5 931.5,518.1 925.3,520.7 925.3,529.4 915.9,529.4 915.9,537.4 913,538.7 912.7,543.9 901.6,543.9Z" fill="#e9dfcb" opacity=".75"/>
<path d="M698.4,499.7 706.5,499.7 707.7,507 708.5,508.8 708.2,513.2 700.8,513.2 701.1,515.5 698.6,515.7 698.4,510.2Z" fill="#f6b9b9" fill-opacity=".5" stroke="#f07c7c" stroke-width="1.9" stroke-linejoin="round"/>
<circle cx="904" cy="521.8" r="2.6" fill="#f3d6cf" stroke="#e59a95" stroke-width="1.6"/>
<circle cx="1281" cy="483" r="5" fill="#f3c483" stroke="#d9893a" stroke-width="1.4"/>
<text class="ocean" x="567.8" y="123">Arctic</text><text class="ocean" x="567.8" y="136">Ocean</text>
<text class="ocean" x="1079.8" y="123">Arctic</text><text class="ocean" x="1079.8" y="136">Ocean</text>
<text class="ocean" x="478.8" y="486">North</text><text class="ocean" x="478.8" y="499">Pacific</text><text class="ocean" x="478.8" y="512">Ocean</text>
<text class="ocean" x="835.8" y="492">North</text><text class="ocean" x="835.8" y="505">Atlantic</text><text class="ocean" x="835.8" y="518">Ocean</text>
<text class="ocean" x="561.8" y="685">South</text><text class="ocean" x="561.8" y="698">Pacific</text><text class="ocean" x="561.8" y="711">Ocean</text>
<text class="ocean" x="909.8" y="683">South</text><text class="ocean" x="909.8" y="696">Atlantic</text><text class="ocean" x="909.8" y="709">Ocean</text>
<text class="ocean" x="1197.8" y="668">Indian</text><text class="ocean" x="1197.8" y="681">Ocean</text>
<text class="ocean" x="487.8" y="874">Southern</text><text class="ocean" x="487.8" y="887">Ocean</text>
<text class="ocean" x="1009.8" y="828">Southern</text><text class="ocean" x="1009.8" y="841">Ocean</text>
<use href="#i-man" x="612.5" y="448" width="11.5" height="16.5" fill="#e0509a" stroke="#5e1240"/>
<use href="#i-truck" x="618" y="452.5" width="18" height="10.5"/>
<use href="#i-man" x="597" y="481" width="11.5" height="16.5" fill="#4d7cf0" stroke="#16246e"/>
<svg x="711.3" y="511.8" width="19.6" height="15.5" viewBox="0 0 18 15"><path d="M2.2 11.6H5.4V14.4H2.2ZM12.6 11.6H15.8V14.4H12.6Z" fill="#222"/><path d="M4.6 .7H13.4Q14.6 .7 15 1.8L16.4 5.6Q17.5 6 17.5 7.2V11.4Q17.5 12.3 16.6 12.3H1.4Q.5 12.3 .5 11.4V7.2Q.5 6 1.6 5.6L3 1.8Q3.4 .7 4.6 .7Z" fill="#7a5af0" stroke="#222"/><path d="M4.7 1.8H13.3L14.7 5.4H3.3Z" fill="#d9ceff"/><rect x="1.9" y="7.5" width="3.8" height="2.3" fill="#fff"/><rect x="12.3" y="7.5" width="3.8" height="2.3" fill="#fff"/></svg>
<svg x="713.3" y="521.8" width="17.8" height="14.6" viewBox="0 0 18 15"><path d="M2.2 11.6H5.4V14.4H2.2ZM12.6 11.6H15.8V14.4H12.6Z" fill="#222"/><path d="M4.6 .7H13.4Q14.6 .7 15 1.8L16.4 5.6Q17.5 6 17.5 7.2V11.4Q17.5 12.3 16.6 12.3H1.4Q.5 12.3 .5 11.4V7.2Q.5 6 1.6 5.6L3 1.8Q3.4 .7 4.6 .7Z" fill="#4a55d8" stroke="#222"/><path d="M4.7 1.8H13.3L14.7 5.4H3.3Z" fill="#c9d2ff"/><rect x="1.9" y="7.5" width="3.8" height="2.3" fill="#fff"/><rect x="12.3" y="7.5" width="3.8" height="2.3" fill="#fff"/></svg>
<use href="#i-man" x="717.5" y="520.5" width="10.5" height="15.5" fill="#7a50e8" stroke="#2a1470"/>
<path d="M729,527.5 L733,522.5 730.5,521.5 738.5,520.5 736.5,528.5 735,526 731.5,529.5Z" fill="#4d86f0" stroke="#1a3a90" stroke-width=".7"/>
<path d="M734.2,531.2 L737.8,538 730.6,538Z" fill="#f4e23c" stroke="#7a6c10" stroke-width=".8"/>
<path d="M721.4,535.5H724.6V541H727.2L723,546.3 718.8,541H721.4Z" fill="#18c83a" stroke="#0b6a1a" stroke-width=".6"/>
<path d="M717.9,512.6 L725.6,527.8 H710.1Z" fill="#fff" stroke="#111" stroke-width="1.4" stroke-linejoin="miter"/>
<use href="#i-man" x="952.3" y="437.3" width="11.4" height="16" fill="#4d7cf0" stroke="#16246e"/>
<use href="#i-dot" x="950" y="463" width="11" height="11" fill="#f4e832" stroke="#5a5200"/>
<svg x="1027.5" y="433" width="17.5" height="14.5" viewBox="0 0 18 15"><path d="M2.2 11.6H5.4V14.4H2.2ZM12.6 11.6H15.8V14.4H12.6Z" fill="#222"/><path d="M4.6 .7H13.4Q14.6 .7 15 1.8L16.4 5.6Q17.5 6 17.5 7.2V11.4Q17.5 12.3 16.6 12.3H1.4Q.5 12.3 .5 11.4V7.2Q.5 6 1.6 5.6L3 1.8Q3.4 .7 4.6 .7Z" fill="#f0645a" stroke="#222"/><path d="M4.7 1.8H13.3L14.7 5.4H3.3Z" fill="#fde4e0"/><rect x="1.9" y="7.5" width="3.8" height="2.3" fill="#fff"/><rect x="12.3" y="7.5" width="3.8" height="2.3" fill="#fff"/></svg>
<use href="#i-truck" x="923.5" y="498.8" width="17" height="10"/>
<use href="#i-man" x="923.3" y="495.3" width="11.4" height="16.7" fill="#4d7cf0" stroke="#16246e"/>
<use href="#i-dot" x="923.2" y="498.3" width="11.6" height="11.6" fill="#4d7cf0" stroke="#101a60"/>
<use href="#i-boat" x="1000.5" y="566.5" width="16" height="17"/>
<g><path d="M431,904.5V929.5M431,916.5H529M491,904.5V916.5M529,916.5V929.5" stroke="#fff" stroke-width="4" fill="none" stroke-linecap="square"/><path d="M431,905V929M431,916.5H529M491,905V916.5M529,916.5V929" stroke="#000" stroke-width="2" fill="none" stroke-linecap="butt"/>
<text x="437" y="912.3" font-size="11" fill="#000" font-family="Liberation Sans,Arial,sans-serif">2000 km</text><text x="437" y="928.5" font-size="11" fill="#000" font-family="Liberation Sans,Arial,sans-serif">2000 mi</text></g>
<text x="362.5" y="923.5" font-family="Liberation Serif,serif" font-size="22.5" letter-spacing="-1.15" fill="#fdfdfd" stroke="#8e8e8e" stroke-width=".5" style="paint-order:stroke;filter:drop-shadow(0.6px 0.8px 0.6px rgba(90,90,90,.8))">Google</text>
<defs><linearGradient id="cpg" x1="0" x2="1"><stop offset="0" stop-color="#f5f5f5" stop-opacity="0"/><stop offset=".14" stop-color="#f5f5f5" stop-opacity=".75"/><stop offset="1" stop-color="#f5f5f5" stop-opacity=".75"/></linearGradient></defs>
<rect x="985" y="914" width="295" height="18" fill="url(#cpg)"/>
<text x="1034.5" y="927" font-size="10.8" fill="#444" textLength="243" lengthAdjust="spacingAndGlyphs" font-family="Liberation Sans,Arial,sans-serif">Map data ©2012 MapLink, Tele Atlas - <tspan text-decoration="underline">Terms of Use</tspan></text>
</svg></div>
<div id="ctl"><div style="position:absolute;left:0;top:0;width:3.5px;height:838px;background:linear-gradient(90deg,rgba(70,90,130,.5),rgba(70,90,130,0))"></div>
<div class="ctl" style="left:12.5px;top:-1.5px;width:16.5px;height:34px;border-radius:2.5px"><svg width="17" height="34" viewBox="0 0 17 34"><circle cx="8.3" cy="8" r="2.8" fill="#f5a71a" stroke="#b06a04" stroke-width=".9"/><path d="M5 11.2H11.8Q13.1 11.2 13.1 12.6V20.3H11.2V27.6H8.7V21H8.1V27.6H5.6V20.3H3.7V12.6Q3.7 11.2 5 11.2Z" fill="#f5a71a" stroke="#b06a04" stroke-width=".9" stroke-linejoin="round"/></svg></div>
<div class="ctl" style="left:12.5px;top:42.5px;width:17px;height:34px;border-radius:2px"><svg width="17" height="34" viewBox="0 0 17 34"><path d="M0 17H17" stroke="#cfcfcf"/><path d="M4.8 8.6H12.2M8.5 4.9V12.3M5.2 25.6H11.8" stroke="#777" stroke-width="1.7"/></svg></div>
<div style="position:absolute;left:9px;top:91px;width:28.5px;height:32px;border:1px dotted #3a2596"></div>
<div class="ctl" style="left:11px;top:93px;width:23.5px;height:22.5px;border-radius:4px;background:#f6f6f6"><svg width="24" height="23" viewBox="0 0 24 23"><path d="M3.2 11Q11.8 2.6 20.4 11Q11.8 19 3.2 11Z" fill="#fff" stroke="#9a9a9a" stroke-width="1.7"/><circle cx="11.8" cy="10.8" r="3.1" fill="#6a8fe0"/></svg></div>
<div class="ctl" style="left:11px;top:127.5px;width:23.5px;height:22.5px;border-radius:4px;background:#f6f6f6"><svg width="24" height="23" viewBox="0 0 24 23"><g transform="rotate(-38 12 11.5)"><rect x="2" y="8" width="20" height="7" fill="#fff" stroke="#8c8c8c" stroke-width="1.3"/><path d="M5 8V11M7.5 8V10M10 8V11M12.5 8V10M15 8V11M17.5 8V10M20 8V11" stroke="#8c8c8c" stroke-width=".9"/></g></svg></div>
<div style="position:absolute;left:830.5px;top:-3px;width:84px;height:19.5px;background:#fff;border:1px solid #717b87;box-shadow:0 2px 4px rgba(0,0,0,.4);font:bold 13px 'Liberation Sans',Arial,sans-serif;color:#000;line-height:18px;padding-left:6px">Map 2<span style="position:absolute;right:5px;top:7.5px;width:0;height:0;border-left:4px solid transparent;border-right:4px solid transparent;border-top:4px solid #777"></span></div>
</div><div style="position:absolute;left:360px;top:932px;width:920px;height:2px;background:#ececec"></div>
</body></html>
